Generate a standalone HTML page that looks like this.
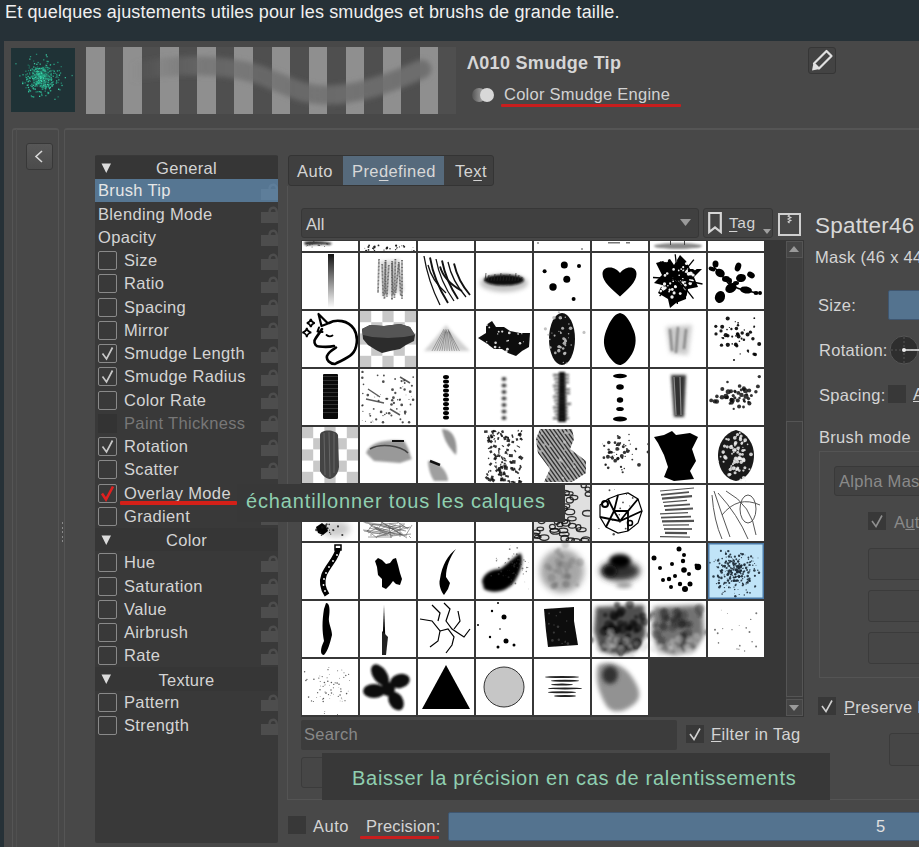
<!DOCTYPE html><html><head><meta charset="utf-8"><style>
*{margin:0;padding:0;box-sizing:border-box}
html,body{width:919px;height:847px;overflow:hidden;background:#263137;font-family:"Liberation Sans",sans-serif;}
.a{position:absolute}
.t{position:absolute;white-space:nowrap;line-height:1;color:#d4d4d4;font-size:16.5px}
.cb{position:absolute;width:19px;height:19px;border:1.7px solid #898989;border-radius:2px}
.lk{position:absolute;width:17px;height:18px}
.cell{position:absolute;width:56px;height:56px;background:#fff;overflow:hidden}
.cell svg{display:block}
</style></head><body><div class="t" style="left:5px;top:3px;font-size:18px;color:#f0f0f0;letter-spacing:0.15px">Et quelques ajustements utiles pour les smudges et brushs de grande taille.</div>
<div class="a" style="left:4px;top:41px;width:915px;height:806px;background:#484848"></div>
<div class="a" style="left:11px;top:48px;width:64px;height:64px;background:#1f3236"></div>
<svg class="a" style="left:11px;top:48px" width="64" height="64"><defs><filter id="bl1"><feGaussianBlur stdDeviation="3"/></filter></defs><ellipse cx="31" cy="29" rx="8" ry="8" fill="#2aa888" opacity="0.55" filter="url(#bl1)"/><rect x="17.7" y="32.0" width="1.3" height="1.3" fill="#35d0a6" opacity="0.57"/><rect x="38.2" y="30.6" width="1.3" height="1.3" fill="#35d0a6" opacity="0.82"/><rect x="13.5" y="34.2" width="1.3" height="1.3" fill="#1f9c7c" opacity="0.78"/><rect x="27.5" y="26.0" width="1.3" height="1.3" fill="#28a887" opacity="0.68"/><rect x="26.9" y="34.9" width="1.3" height="1.3" fill="#3fdcb0" opacity="0.91"/><rect x="41.6" y="35.9" width="1.3" height="1.3" fill="#35d0a6" opacity="0.84"/><rect x="31.1" y="26.5" width="1.3" height="1.3" fill="#2bb892" opacity="0.91"/><rect x="26.8" y="24.9" width="1.3" height="1.3" fill="#28a887" opacity="0.97"/><rect x="36.8" y="35.8" width="1.3" height="1.3" fill="#1f9c7c" opacity="0.77"/><rect x="38.0" y="22.7" width="1.3" height="1.3" fill="#2bb892" opacity="0.78"/><rect x="26.5" y="29.8" width="1.3" height="1.3" fill="#3fdcb0" opacity="0.71"/><rect x="22.0" y="24.5" width="1.3" height="1.3" fill="#28a887" opacity="0.77"/><rect x="27.8" y="27.3" width="1.3" height="1.3" fill="#1f9c7c" opacity="0.99"/><rect x="25.9" y="23.2" width="1.3" height="1.3" fill="#35d0a6" opacity="0.93"/><rect x="24.5" y="34.8" width="1.3" height="1.3" fill="#35d0a6" opacity="0.62"/><rect x="23.4" y="37.7" width="1.3" height="1.3" fill="#3fdcb0" opacity="0.59"/><rect x="17.7" y="41.4" width="1.3" height="1.3" fill="#2bb892" opacity="0.76"/><rect x="31.6" y="38.8" width="1.3" height="1.3" fill="#28a887" opacity="0.60"/><rect x="18.9" y="21.1" width="1.3" height="1.3" fill="#1f9c7c" opacity="0.59"/><rect x="29.2" y="27.8" width="1.3" height="1.3" fill="#35d0a6" opacity="0.75"/><rect x="19.0" y="21.8" width="1.3" height="1.3" fill="#3fdcb0" opacity="0.73"/><rect x="31.8" y="36.7" width="1.3" height="1.3" fill="#28a887" opacity="0.85"/><rect x="33.9" y="25.0" width="1.3" height="1.3" fill="#1f9c7c" opacity="0.73"/><rect x="24.9" y="28.4" width="1.3" height="1.3" fill="#1f9c7c" opacity="0.96"/><rect x="36.7" y="30.3" width="1.3" height="1.3" fill="#35d0a6" opacity="0.59"/><rect x="32.8" y="20.4" width="1.3" height="1.3" fill="#1f9c7c" opacity="0.81"/><rect x="60.5" y="26.9" width="1.3" height="1.3" fill="#3fdcb0" opacity="0.58"/><rect x="45.8" y="22.3" width="1.3" height="1.3" fill="#35d0a6" opacity="0.82"/><rect x="31.3" y="40.3" width="1.3" height="1.3" fill="#28a887" opacity="0.74"/><rect x="22.2" y="40.3" width="1.3" height="1.3" fill="#28a887" opacity="0.95"/><rect x="33.7" y="36.0" width="1.3" height="1.3" fill="#2bb892" opacity="0.64"/><rect x="39.6" y="26.5" width="1.3" height="1.3" fill="#28a887" opacity="0.85"/><rect x="31.6" y="36.8" width="1.3" height="1.3" fill="#35d0a6" opacity="0.51"/><rect x="32.0" y="30.0" width="1.3" height="1.3" fill="#3fdcb0" opacity="0.94"/><rect x="24.5" y="33.0" width="1.3" height="1.3" fill="#28a887" opacity="0.74"/><rect x="40.3" y="34.0" width="1.3" height="1.3" fill="#35d0a6" opacity="0.88"/><rect x="20.2" y="35.6" width="1.3" height="1.3" fill="#28a887" opacity="0.89"/><rect x="23.1" y="26.2" width="1.3" height="1.3" fill="#35d0a6" opacity="0.82"/><rect x="26.2" y="33.3" width="1.3" height="1.3" fill="#1f9c7c" opacity="0.95"/><rect x="35.4" y="12.7" width="1.3" height="1.3" fill="#28a887" opacity="0.77"/><rect x="32.0" y="21.9" width="1.3" height="1.3" fill="#2bb892" opacity="0.86"/><rect x="32.5" y="36.3" width="1.3" height="1.3" fill="#3fdcb0" opacity="0.75"/><rect x="25.5" y="26.2" width="1.3" height="1.3" fill="#3fdcb0" opacity="0.85"/><rect x="25.0" y="33.9" width="1.3" height="1.3" fill="#28a887" opacity="0.68"/><rect x="36.6" y="33.8" width="1.3" height="1.3" fill="#2bb892" opacity="0.86"/><rect x="28.0" y="35.0" width="1.3" height="1.3" fill="#28a887" opacity="0.68"/><rect x="39.7" y="31.8" width="1.3" height="1.3" fill="#28a887" opacity="0.74"/><rect x="40.7" y="34.0" width="1.3" height="1.3" fill="#28a887" opacity="0.62"/><rect x="20.5" y="48.0" width="1.3" height="1.3" fill="#2bb892" opacity="0.98"/><rect x="19.0" y="42.3" width="1.3" height="1.3" fill="#28a887" opacity="0.65"/><rect x="25.2" y="29.5" width="1.3" height="1.3" fill="#35d0a6" opacity="0.58"/><rect x="18.7" y="32.6" width="1.3" height="1.3" fill="#1f9c7c" opacity="0.73"/><rect x="30.6" y="27.4" width="1.3" height="1.3" fill="#1f9c7c" opacity="0.70"/><rect x="25.2" y="15.7" width="1.3" height="1.3" fill="#3fdcb0" opacity="0.84"/><rect x="18.2" y="10.5" width="1.3" height="1.3" fill="#3fdcb0" opacity="0.79"/><rect x="24.5" y="43.3" width="1.3" height="1.3" fill="#2bb892" opacity="0.66"/><rect x="22.0" y="30.0" width="1.3" height="1.3" fill="#35d0a6" opacity="0.59"/><rect x="14.9" y="32.2" width="1.3" height="1.3" fill="#1f9c7c" opacity="0.63"/><rect x="44.7" y="34.4" width="1.3" height="1.3" fill="#35d0a6" opacity="0.70"/><rect x="25.2" y="25.0" width="1.3" height="1.3" fill="#3fdcb0" opacity="0.66"/><rect x="38.6" y="38.6" width="1.3" height="1.3" fill="#3fdcb0" opacity="0.90"/><rect x="23.6" y="36.2" width="1.3" height="1.3" fill="#35d0a6" opacity="0.67"/><rect x="31.2" y="20.2" width="1.3" height="1.3" fill="#28a887" opacity="0.91"/><rect x="36.2" y="43.7" width="1.3" height="1.3" fill="#35d0a6" opacity="0.55"/><rect x="28.0" y="47.7" width="1.3" height="1.3" fill="#35d0a6" opacity="0.99"/><rect x="42.6" y="22.6" width="1.3" height="1.3" fill="#35d0a6" opacity="0.92"/><rect x="34.2" y="47.0" width="1.3" height="1.3" fill="#2bb892" opacity="0.78"/><rect x="44.9" y="34.1" width="1.3" height="1.3" fill="#1f9c7c" opacity="0.58"/><rect x="28.5" y="23.0" width="1.3" height="1.3" fill="#1f9c7c" opacity="0.99"/><rect x="31.6" y="19.4" width="1.3" height="1.3" fill="#2bb892" opacity="0.80"/><rect x="40.3" y="37.7" width="1.3" height="1.3" fill="#3fdcb0" opacity="0.60"/><rect x="30.8" y="30.5" width="1.3" height="1.3" fill="#1f9c7c" opacity="0.90"/><rect x="17.9" y="29.6" width="1.3" height="1.3" fill="#28a887" opacity="0.68"/><rect x="38.9" y="16.0" width="1.3" height="1.3" fill="#3fdcb0" opacity="0.51"/><rect x="31.0" y="28.6" width="1.3" height="1.3" fill="#1f9c7c" opacity="0.75"/><rect x="38.0" y="19.7" width="1.3" height="1.3" fill="#28a887" opacity="0.77"/><rect x="38.0" y="28.1" width="1.3" height="1.3" fill="#2bb892" opacity="0.92"/><rect x="32.1" y="32.2" width="1.3" height="1.3" fill="#2bb892" opacity="0.71"/><rect x="35.6" y="14.8" width="1.3" height="1.3" fill="#1f9c7c" opacity="0.52"/><rect x="25.7" y="19.9" width="1.3" height="1.3" fill="#2bb892" opacity="0.80"/><rect x="16.9" y="22.0" width="1.3" height="1.3" fill="#1f9c7c" opacity="0.73"/><rect x="23.6" y="40.5" width="1.3" height="1.3" fill="#35d0a6" opacity="0.90"/><rect x="20.4" y="37.9" width="1.3" height="1.3" fill="#35d0a6" opacity="0.98"/><rect x="44.4" y="28.8" width="1.3" height="1.3" fill="#35d0a6" opacity="0.57"/><rect x="37.0" y="36.8" width="1.3" height="1.3" fill="#1f9c7c" opacity="0.83"/><rect x="36.1" y="30.5" width="1.3" height="1.3" fill="#28a887" opacity="0.72"/><rect x="25.4" y="37.3" width="1.3" height="1.3" fill="#35d0a6" opacity="0.67"/><rect x="17.5" y="41.5" width="1.3" height="1.3" fill="#28a887" opacity="0.67"/><rect x="39.3" y="22.3" width="1.3" height="1.3" fill="#3fdcb0" opacity="0.68"/><rect x="31.0" y="38.3" width="1.3" height="1.3" fill="#3fdcb0" opacity="0.78"/><rect x="36.6" y="19.3" width="1.3" height="1.3" fill="#28a887" opacity="0.87"/><rect x="29.9" y="38.8" width="1.3" height="1.3" fill="#2bb892" opacity="0.56"/><rect x="21.5" y="24.9" width="1.3" height="1.3" fill="#35d0a6" opacity="0.77"/><rect x="20.8" y="23.7" width="1.3" height="1.3" fill="#28a887" opacity="0.67"/><rect x="17.0" y="43.1" width="1.3" height="1.3" fill="#35d0a6" opacity="0.97"/><rect x="27.3" y="28.1" width="1.3" height="1.3" fill="#3fdcb0" opacity="0.70"/><rect x="32.1" y="37.2" width="1.3" height="1.3" fill="#35d0a6" opacity="0.81"/><rect x="33.0" y="26.3" width="1.3" height="1.3" fill="#35d0a6" opacity="0.67"/><rect x="25.3" y="22.8" width="1.3" height="1.3" fill="#3fdcb0" opacity="0.66"/><rect x="14.3" y="26.2" width="1.3" height="1.3" fill="#3fdcb0" opacity="0.55"/><rect x="30.0" y="45.5" width="1.3" height="1.3" fill="#2bb892" opacity="0.84"/><rect x="34.3" y="38.0" width="1.3" height="1.3" fill="#35d0a6" opacity="0.53"/><rect x="27.9" y="24.9" width="1.3" height="1.3" fill="#35d0a6" opacity="0.82"/><rect x="22.6" y="21.4" width="1.3" height="1.3" fill="#28a887" opacity="0.87"/><rect x="28.3" y="34.2" width="1.3" height="1.3" fill="#28a887" opacity="0.70"/><rect x="22.2" y="31.7" width="1.3" height="1.3" fill="#1f9c7c" opacity="0.62"/><rect x="16.5" y="27.8" width="1.3" height="1.3" fill="#3fdcb0" opacity="0.83"/><rect x="26.5" y="13.9" width="1.3" height="1.3" fill="#35d0a6" opacity="0.68"/><rect x="29.3" y="31.8" width="1.3" height="1.3" fill="#35d0a6" opacity="0.70"/><rect x="48.0" y="26.2" width="1.3" height="1.3" fill="#1f9c7c" opacity="0.84"/><rect x="18.9" y="28.6" width="1.3" height="1.3" fill="#1f9c7c" opacity="0.63"/><rect x="27.6" y="31.4" width="1.3" height="1.3" fill="#2bb892" opacity="0.73"/><rect x="23.7" y="28.8" width="1.3" height="1.3" fill="#1f9c7c" opacity="0.56"/><rect x="34.1" y="22.8" width="1.3" height="1.3" fill="#28a887" opacity="0.65"/><rect x="34.6" y="33.1" width="1.3" height="1.3" fill="#1f9c7c" opacity="0.69"/><rect x="23.6" y="28.8" width="1.3" height="1.3" fill="#3fdcb0" opacity="0.91"/><rect x="31.0" y="25.7" width="1.3" height="1.3" fill="#1f9c7c" opacity="0.88"/><rect x="15.7" y="25.2" width="1.3" height="1.3" fill="#35d0a6" opacity="0.52"/><rect x="21.2" y="27.4" width="1.3" height="1.3" fill="#28a887" opacity="0.81"/><rect x="36.4" y="44.9" width="1.3" height="1.3" fill="#2bb892" opacity="0.72"/><rect x="39.8" y="31.3" width="1.3" height="1.3" fill="#35d0a6" opacity="0.92"/><rect x="39.2" y="35.4" width="1.3" height="1.3" fill="#3fdcb0" opacity="0.73"/><rect x="35.4" y="8.0" width="1.3" height="1.3" fill="#3fdcb0" opacity="0.70"/><rect x="40.1" y="30.5" width="1.3" height="1.3" fill="#28a887" opacity="0.95"/><rect x="45.0" y="32.3" width="1.3" height="1.3" fill="#3fdcb0" opacity="0.84"/><rect x="28.8" y="37.2" width="1.3" height="1.3" fill="#35d0a6" opacity="0.70"/><rect x="34.3" y="16.6" width="1.3" height="1.3" fill="#3fdcb0" opacity="0.54"/><rect x="28.9" y="27.7" width="1.3" height="1.3" fill="#35d0a6" opacity="0.83"/><rect x="25.4" y="35.3" width="1.3" height="1.3" fill="#2bb892" opacity="0.83"/><rect x="31.9" y="26.3" width="1.3" height="1.3" fill="#1f9c7c" opacity="0.53"/><rect x="38.8" y="42.1" width="1.3" height="1.3" fill="#3fdcb0" opacity="0.77"/><rect x="37.0" y="44.3" width="1.3" height="1.3" fill="#35d0a6" opacity="0.99"/><rect x="31.4" y="38.5" width="1.3" height="1.3" fill="#1f9c7c" opacity="0.64"/><rect x="18.0" y="24.4" width="1.3" height="1.3" fill="#1f9c7c" opacity="0.91"/><rect x="30.0" y="23.0" width="1.3" height="1.3" fill="#28a887" opacity="0.60"/><rect x="48.9" y="24.4" width="1.3" height="1.3" fill="#35d0a6" opacity="0.68"/><rect x="38.2" y="35.5" width="1.3" height="1.3" fill="#28a887" opacity="0.68"/><rect x="37.0" y="31.8" width="1.3" height="1.3" fill="#3fdcb0" opacity="0.81"/><rect x="28.9" y="29.6" width="1.3" height="1.3" fill="#3fdcb0" opacity="0.94"/><rect x="22.0" y="48.3" width="1.3" height="1.3" fill="#2bb892" opacity="0.96"/><rect x="30.7" y="40.6" width="1.3" height="1.3" fill="#1f9c7c" opacity="0.94"/><rect x="48.3" y="41.2" width="1.3" height="1.3" fill="#3fdcb0" opacity="0.59"/><rect x="15.7" y="36.6" width="1.3" height="1.3" fill="#35d0a6" opacity="1.00"/><rect x="31.7" y="21.0" width="1.3" height="1.3" fill="#35d0a6" opacity="0.66"/><rect x="50.4" y="36.8" width="1.3" height="1.3" fill="#35d0a6" opacity="0.83"/><rect x="24.3" y="30.7" width="1.3" height="1.3" fill="#1f9c7c" opacity="0.81"/><rect x="35.8" y="18.8" width="1.3" height="1.3" fill="#28a887" opacity="0.95"/><rect x="39.3" y="25.8" width="1.3" height="1.3" fill="#28a887" opacity="0.77"/><rect x="24.1" y="34.9" width="1.3" height="1.3" fill="#1f9c7c" opacity="0.92"/><rect x="25.0" y="19.8" width="1.3" height="1.3" fill="#1f9c7c" opacity="0.77"/><rect x="24.9" y="5.7" width="1.3" height="1.3" fill="#2bb892" opacity="0.60"/><rect x="25.5" y="32.8" width="1.3" height="1.3" fill="#3fdcb0" opacity="0.54"/><rect x="11.1" y="33.6" width="1.3" height="1.3" fill="#28a887" opacity="0.76"/><rect x="22.2" y="33.4" width="1.3" height="1.3" fill="#1f9c7c" opacity="0.58"/><rect x="36.2" y="20.9" width="1.3" height="1.3" fill="#1f9c7c" opacity="0.83"/><rect x="36.6" y="38.4" width="1.3" height="1.3" fill="#1f9c7c" opacity="0.86"/><rect x="21.2" y="21.1" width="1.3" height="1.3" fill="#2bb892" opacity="0.62"/><rect x="28.8" y="20.3" width="1.3" height="1.3" fill="#1f9c7c" opacity="0.58"/><rect x="47.0" y="40.6" width="1.3" height="1.3" fill="#3fdcb0" opacity="1.00"/><rect x="24.3" y="27.7" width="1.3" height="1.3" fill="#28a887" opacity="0.90"/><rect x="47.7" y="26.7" width="1.3" height="1.3" fill="#3fdcb0" opacity="0.77"/><rect x="30.3" y="46.8" width="1.3" height="1.3" fill="#35d0a6" opacity="0.63"/><rect x="21.6" y="36.7" width="1.3" height="1.3" fill="#3fdcb0" opacity="0.94"/><rect x="25.7" y="22.2" width="1.3" height="1.3" fill="#2bb892" opacity="0.73"/><rect x="8.2" y="27.2" width="1.3" height="1.3" fill="#28a887" opacity="0.88"/><rect x="18.1" y="25.6" width="1.3" height="1.3" fill="#2bb892" opacity="0.50"/><rect x="29.5" y="25.3" width="1.3" height="1.3" fill="#35d0a6" opacity="0.78"/><rect x="40.5" y="36.5" width="1.3" height="1.3" fill="#3fdcb0" opacity="0.91"/><rect x="14.9" y="29.0" width="1.3" height="1.3" fill="#2bb892" opacity="0.90"/><rect x="31.7" y="29.0" width="1.3" height="1.3" fill="#35d0a6" opacity="0.99"/><rect x="34.0" y="30.3" width="1.3" height="1.3" fill="#2bb892" opacity="0.63"/><rect x="35.1" y="25.7" width="1.3" height="1.3" fill="#35d0a6" opacity="0.56"/><rect x="27.2" y="25.7" width="1.3" height="1.3" fill="#3fdcb0" opacity="0.90"/><rect x="40.8" y="37.5" width="1.3" height="1.3" fill="#28a887" opacity="0.69"/><rect x="28.5" y="37.9" width="1.3" height="1.3" fill="#2bb892" opacity="0.55"/><rect x="28.1" y="43.0" width="1.3" height="1.3" fill="#35d0a6" opacity="0.89"/><rect x="22.3" y="31.0" width="1.3" height="1.3" fill="#2bb892" opacity="0.54"/><rect x="36.1" y="30.3" width="1.3" height="1.3" fill="#28a887" opacity="0.84"/><rect x="42.4" y="15.7" width="1.3" height="1.3" fill="#28a887" opacity="0.94"/><rect x="30.8" y="21.6" width="1.3" height="1.3" fill="#2bb892" opacity="0.55"/><rect x="33.8" y="26.8" width="1.3" height="1.3" fill="#28a887" opacity="0.58"/><rect x="46.4" y="28.9" width="1.3" height="1.3" fill="#28a887" opacity="0.66"/><rect x="25.9" y="43.1" width="1.3" height="1.3" fill="#2bb892" opacity="0.50"/><rect x="33.3" y="39.4" width="1.3" height="1.3" fill="#3fdcb0" opacity="0.66"/><rect x="28.8" y="24.9" width="1.3" height="1.3" fill="#1f9c7c" opacity="0.90"/><rect x="27.0" y="31.8" width="1.3" height="1.3" fill="#35d0a6" opacity="0.99"/><rect x="39.5" y="30.4" width="1.3" height="1.3" fill="#35d0a6" opacity="0.54"/><rect x="29.1" y="31.5" width="1.3" height="1.3" fill="#35d0a6" opacity="0.71"/><rect x="29.7" y="33.0" width="1.3" height="1.3" fill="#1f9c7c" opacity="0.60"/><rect x="34.7" y="6.3" width="1.3" height="1.3" fill="#3fdcb0" opacity="0.91"/><rect x="29.6" y="23.9" width="1.3" height="1.3" fill="#2bb892" opacity="0.53"/><rect x="33.5" y="18.2" width="1.3" height="1.3" fill="#1f9c7c" opacity="0.51"/><rect x="18.6" y="42.3" width="1.3" height="1.3" fill="#35d0a6" opacity="0.61"/><rect x="41.6" y="27.6" width="1.3" height="1.3" fill="#2bb892" opacity="0.92"/><rect x="39.6" y="24.9" width="1.3" height="1.3" fill="#28a887" opacity="0.59"/><rect x="20.5" y="20.3" width="1.3" height="1.3" fill="#35d0a6" opacity="0.71"/><rect x="31.9" y="34.5" width="1.3" height="1.3" fill="#28a887" opacity="0.88"/><rect x="31.8" y="29.0" width="1.3" height="1.3" fill="#2bb892" opacity="0.53"/><rect x="28.6" y="15.5" width="1.3" height="1.3" fill="#2bb892" opacity="0.98"/><rect x="34.5" y="37.7" width="1.3" height="1.3" fill="#28a887" opacity="0.93"/><rect x="27.9" y="33.9" width="1.3" height="1.3" fill="#28a887" opacity="0.99"/><rect x="18.9" y="8.0" width="1.3" height="1.3" fill="#2bb892" opacity="0.74"/><rect x="24.4" y="23.1" width="1.3" height="1.3" fill="#3fdcb0" opacity="0.65"/><rect x="20.2" y="28.2" width="1.3" height="1.3" fill="#28a887" opacity="0.79"/><rect x="21.7" y="27.5" width="1.3" height="1.3" fill="#1f9c7c" opacity="0.79"/><rect x="43.6" y="24.6" width="1.3" height="1.3" fill="#35d0a6" opacity="0.59"/><rect x="45.3" y="27.4" width="1.3" height="1.3" fill="#35d0a6" opacity="0.76"/><rect x="29.5" y="26.7" width="1.3" height="1.3" fill="#1f9c7c" opacity="0.91"/><rect x="30.8" y="28.4" width="1.3" height="1.3" fill="#28a887" opacity="0.78"/><rect x="36.6" y="23.9" width="1.3" height="1.3" fill="#1f9c7c" opacity="0.99"/><rect x="25.9" y="18.2" width="1.3" height="1.3" fill="#1f9c7c" opacity="0.59"/><rect x="26.8" y="22.9" width="1.3" height="1.3" fill="#3fdcb0" opacity="0.75"/><rect x="22.0" y="12.4" width="1.3" height="1.3" fill="#1f9c7c" opacity="0.51"/><rect x="33.6" y="28.3" width="1.3" height="1.3" fill="#1f9c7c" opacity="0.89"/><rect x="29.5" y="43.5" width="1.3" height="1.3" fill="#3fdcb0" opacity="0.64"/><rect x="19.7" y="47.2" width="1.3" height="1.3" fill="#28a887" opacity="0.83"/><rect x="29.7" y="29.2" width="1.3" height="1.3" fill="#3fdcb0" opacity="0.93"/><rect x="19.7" y="27.6" width="1.3" height="1.3" fill="#1f9c7c" opacity="0.88"/><rect x="11.4" y="26.1" width="1.3" height="1.3" fill="#2bb892" opacity="0.95"/><rect x="36.0" y="35.9" width="1.3" height="1.3" fill="#3fdcb0" opacity="0.97"/><rect x="17.6" y="19.3" width="1.3" height="1.3" fill="#28a887" opacity="0.52"/><rect x="26.7" y="34.6" width="1.3" height="1.3" fill="#28a887" opacity="0.55"/><rect x="24.1" y="19.4" width="1.3" height="1.3" fill="#35d0a6" opacity="0.69"/><rect x="33.2" y="37.8" width="1.3" height="1.3" fill="#35d0a6" opacity="0.62"/><rect x="35.2" y="27.3" width="1.3" height="1.3" fill="#28a887" opacity="0.80"/><rect x="46.2" y="13.8" width="1.3" height="1.3" fill="#1f9c7c" opacity="0.88"/><rect x="22.6" y="22.4" width="1.3" height="1.3" fill="#2bb892" opacity="0.89"/><rect x="39.1" y="42.0" width="1.3" height="1.3" fill="#28a887" opacity="0.69"/><rect x="18.5" y="29.7" width="1.3" height="1.3" fill="#3fdcb0" opacity="0.75"/><rect x="28.6" y="27.5" width="1.3" height="1.3" fill="#1f9c7c" opacity="0.57"/><rect x="33.5" y="21.4" width="1.3" height="1.3" fill="#35d0a6" opacity="0.64"/><rect x="33.6" y="42.5" width="1.3" height="1.3" fill="#28a887" opacity="0.81"/><rect x="31.4" y="26.7" width="1.3" height="1.3" fill="#28a887" opacity="0.93"/><rect x="17.8" y="28.9" width="1.3" height="1.3" fill="#35d0a6" opacity="0.62"/><rect x="41.4" y="33.2" width="1.3" height="1.3" fill="#28a887" opacity="0.88"/><rect x="28.1" y="28.4" width="1.3" height="1.3" fill="#35d0a6" opacity="0.55"/><rect x="30.1" y="24.7" width="1.3" height="1.3" fill="#3fdcb0" opacity="0.90"/><rect x="49.6" y="18.0" width="1.3" height="1.3" fill="#28a887" opacity="0.59"/><rect x="33.3" y="22.5" width="1.3" height="1.3" fill="#3fdcb0" opacity="0.80"/><rect x="49.7" y="34.5" width="1.3" height="1.3" fill="#28a887" opacity="0.68"/><rect x="32.1" y="11.2" width="1.3" height="1.3" fill="#1f9c7c" opacity="0.96"/><rect x="32.4" y="21.5" width="1.3" height="1.3" fill="#35d0a6" opacity="0.56"/><rect x="28.7" y="34.4" width="1.3" height="1.3" fill="#28a887" opacity="0.91"/><rect x="17.8" y="17.4" width="1.3" height="1.3" fill="#1f9c7c" opacity="0.53"/><rect x="30.0" y="26.8" width="1.3" height="1.3" fill="#1f9c7c" opacity="0.87"/><rect x="31.3" y="18.8" width="1.3" height="1.3" fill="#2bb892" opacity="0.66"/><rect x="42.0" y="24.7" width="1.3" height="1.3" fill="#2bb892" opacity="0.63"/><rect x="17.3" y="31.6" width="1.3" height="1.3" fill="#1f9c7c" opacity="0.66"/><rect x="14.4" y="39.1" width="1.3" height="1.3" fill="#28a887" opacity="0.59"/><rect x="22.9" y="15.0" width="1.3" height="1.3" fill="#3fdcb0" opacity="0.87"/><rect x="30.2" y="37.3" width="1.3" height="1.3" fill="#28a887" opacity="0.63"/><rect x="33.4" y="33.4" width="1.3" height="1.3" fill="#3fdcb0" opacity="0.60"/><rect x="29.7" y="24.4" width="1.3" height="1.3" fill="#3fdcb0" opacity="0.66"/><rect x="47.2" y="31.2" width="1.3" height="1.3" fill="#3fdcb0" opacity="0.75"/><rect x="27.0" y="26.9" width="1.3" height="1.3" fill="#28a887" opacity="1.00"/><rect x="34.4" y="38.6" width="1.3" height="1.3" fill="#3fdcb0" opacity="0.80"/><rect x="35.0" y="17.0" width="1.3" height="1.3" fill="#35d0a6" opacity="0.77"/><rect x="36.5" y="37.7" width="1.3" height="1.3" fill="#28a887" opacity="0.71"/><rect x="23.3" y="26.5" width="1.3" height="1.3" fill="#28a887" opacity="0.85"/><rect x="22.1" y="18.4" width="1.3" height="1.3" fill="#35d0a6" opacity="0.81"/><rect x="20.6" y="28.6" width="1.3" height="1.3" fill="#1f9c7c" opacity="0.79"/><rect x="29.6" y="32.0" width="1.3" height="1.3" fill="#3fdcb0" opacity="0.76"/><rect x="38.4" y="39.0" width="1.3" height="1.3" fill="#35d0a6" opacity="0.90"/><rect x="37.9" y="40.0" width="1.3" height="1.3" fill="#35d0a6" opacity="0.89"/><rect x="21.0" y="29.6" width="1.3" height="1.3" fill="#1f9c7c" opacity="0.95"/><rect x="28.6" y="23.3" width="1.3" height="1.3" fill="#28a887" opacity="0.50"/><rect x="45.1" y="25.7" width="1.3" height="1.3" fill="#28a887" opacity="0.84"/><rect x="16.1" y="30.2" width="1.3" height="1.3" fill="#1f9c7c" opacity="0.92"/><rect x="25.0" y="34.8" width="1.3" height="1.3" fill="#28a887" opacity="0.68"/><rect x="26.9" y="20.2" width="1.3" height="1.3" fill="#3fdcb0" opacity="0.80"/><rect x="24.0" y="20.9" width="1.3" height="1.3" fill="#1f9c7c" opacity="0.72"/><rect x="37.1" y="36.6" width="1.3" height="1.3" fill="#2bb892" opacity="0.94"/><rect x="36.6" y="37.4" width="1.3" height="1.3" fill="#28a887" opacity="0.79"/><rect x="17.6" y="41.1" width="1.3" height="1.3" fill="#1f9c7c" opacity="0.86"/><rect x="16.6" y="33.0" width="1.3" height="1.3" fill="#3fdcb0" opacity="0.86"/><rect x="16.8" y="38.8" width="1.3" height="1.3" fill="#3fdcb0" opacity="0.84"/><rect x="21.1" y="25.0" width="1.3" height="1.3" fill="#28a887" opacity="0.69"/><rect x="16.6" y="16.5" width="1.3" height="1.3" fill="#1f9c7c" opacity="0.54"/><rect x="29.7" y="35.1" width="1.3" height="1.3" fill="#1f9c7c" opacity="0.95"/><rect x="28.0" y="26.6" width="1.3" height="1.3" fill="#28a887" opacity="0.94"/><rect x="36.4" y="12.9" width="1.3" height="1.3" fill="#35d0a6" opacity="0.84"/><rect x="30.2" y="28.2" width="1.3" height="1.3" fill="#2bb892" opacity="0.91"/><rect x="26.5" y="34.2" width="1.3" height="1.3" fill="#2bb892" opacity="0.67"/><rect x="22.6" y="29.6" width="1.3" height="1.3" fill="#2bb892" opacity="0.98"/><rect x="31.6" y="21.3" width="1.3" height="1.3" fill="#28a887" opacity="0.51"/><rect x="11.1" y="34.9" width="1.3" height="1.3" fill="#3fdcb0" opacity="0.94"/><rect x="30.0" y="34.9" width="1.3" height="1.3" fill="#2bb892" opacity="0.76"/><rect x="34.4" y="18.9" width="1.3" height="1.3" fill="#28a887" opacity="0.75"/><rect x="19.2" y="37.0" width="1.3" height="1.3" fill="#1f9c7c" opacity="0.95"/><rect x="24.9" y="35.8" width="1.3" height="1.3" fill="#3fdcb0" opacity="0.80"/><rect x="28.8" y="29.5" width="1.3" height="1.3" fill="#3fdcb0" opacity="0.61"/><rect x="29.5" y="37.2" width="1.3" height="1.3" fill="#2bb892" opacity="0.80"/><rect x="34.1" y="36.3" width="1.3" height="1.3" fill="#3fdcb0" opacity="0.79"/><rect x="46.5" y="48.2" width="1.3" height="1.3" fill="#2bb892" opacity="0.54"/><rect x="21.6" y="39.4" width="1.3" height="1.3" fill="#3fdcb0" opacity="0.83"/><rect x="33.1" y="27.8" width="1.3" height="1.3" fill="#3fdcb0" opacity="0.61"/><rect x="28.1" y="19.8" width="1.3" height="1.3" fill="#3fdcb0" opacity="0.90"/><rect x="21.1" y="29.9" width="1.3" height="1.3" fill="#3fdcb0" opacity="0.78"/><rect x="37.0" y="27.3" width="1.3" height="1.3" fill="#2bb892" opacity="0.75"/><rect x="38.7" y="16.4" width="1.3" height="1.3" fill="#2bb892" opacity="0.77"/><rect x="16.7" y="36.3" width="1.3" height="1.3" fill="#3fdcb0" opacity="0.56"/><rect x="27.6" y="33.0" width="1.3" height="1.3" fill="#35d0a6" opacity="0.66"/><rect x="29.1" y="43.5" width="1.3" height="1.3" fill="#2bb892" opacity="0.65"/><rect x="24.3" y="20.7" width="1.3" height="1.3" fill="#35d0a6" opacity="0.78"/><rect x="22.5" y="34.2" width="1.3" height="1.3" fill="#35d0a6" opacity="0.82"/><rect x="32.8" y="32.0" width="1.3" height="1.3" fill="#3fdcb0" opacity="0.75"/><rect x="32.3" y="27.4" width="1.3" height="1.3" fill="#35d0a6" opacity="0.73"/><rect x="28.9" y="27.9" width="1.3" height="1.3" fill="#3fdcb0" opacity="0.72"/><rect x="53.7" y="29.0" width="1.3" height="1.3" fill="#35d0a6" opacity="0.82"/><rect x="33.9" y="40.4" width="1.3" height="1.3" fill="#1f9c7c" opacity="0.74"/><rect x="43.3" y="50.7" width="1.3" height="1.3" fill="#35d0a6" opacity="0.74"/><rect x="41.4" y="21.8" width="1.3" height="1.3" fill="#1f9c7c" opacity="0.72"/><rect x="14.2" y="22.6" width="1.3" height="1.3" fill="#2bb892" opacity="0.62"/><rect x="21.6" y="40.0" width="1.3" height="1.3" fill="#2bb892" opacity="0.65"/><rect x="25.8" y="25.5" width="1.3" height="1.3" fill="#2bb892" opacity="0.63"/><rect x="24.3" y="36.5" width="1.3" height="1.3" fill="#2bb892" opacity="0.59"/><rect x="26.4" y="43.0" width="1.3" height="1.3" fill="#1f9c7c" opacity="0.78"/><rect x="30.0" y="19.8" width="1.3" height="1.3" fill="#35d0a6" opacity="0.84"/><rect x="33.4" y="34.4" width="1.3" height="1.3" fill="#35d0a6" opacity="0.61"/><rect x="30.1" y="32.8" width="1.3" height="1.3" fill="#3fdcb0" opacity="0.89"/><rect x="46.4" y="33.9" width="1.3" height="1.3" fill="#2bb892" opacity="0.58"/><rect x="39.6" y="28.9" width="1.3" height="1.3" fill="#3fdcb0" opacity="0.66"/><rect x="15.2" y="30.8" width="1.3" height="1.3" fill="#35d0a6" opacity="0.92"/><rect x="14.0" y="28.3" width="1.3" height="1.3" fill="#1f9c7c" opacity="0.55"/><rect x="47.6" y="21.9" width="1.3" height="1.3" fill="#1f9c7c" opacity="0.96"/><rect x="34.1" y="39.9" width="1.3" height="1.3" fill="#35d0a6" opacity="0.67"/><rect x="34.5" y="30.1" width="1.3" height="1.3" fill="#3fdcb0" opacity="0.52"/><rect x="26.3" y="34.3" width="1.3" height="1.3" fill="#35d0a6" opacity="0.91"/><rect x="37.2" y="38.4" width="1.3" height="1.3" fill="#28a887" opacity="0.59"/><rect x="4.3" y="15.1" width="1.3" height="1.3" fill="#35d0a6" opacity="0.65"/></svg>
<div class="a" style="left:86px;top:47px;width:370px;height:67px;background:#4f4f4f"></div>
<div class="a" style="left:86.0px;top:47px;width:18.6px;height:67px;background:#8f8f8f"></div>
<div class="a" style="left:123.1px;top:47px;width:18.6px;height:67px;background:#8f8f8f"></div>
<div class="a" style="left:160.2px;top:47px;width:18.6px;height:67px;background:#8f8f8f"></div>
<div class="a" style="left:197.3px;top:47px;width:18.6px;height:67px;background:#8f8f8f"></div>
<div class="a" style="left:234.4px;top:47px;width:18.6px;height:67px;background:#8f8f8f"></div>
<div class="a" style="left:271.5px;top:47px;width:18.6px;height:67px;background:#8f8f8f"></div>
<div class="a" style="left:308.6px;top:47px;width:18.6px;height:67px;background:#8f8f8f"></div>
<div class="a" style="left:345.7px;top:47px;width:18.6px;height:67px;background:#8f8f8f"></div>
<div class="a" style="left:382.8px;top:47px;width:18.6px;height:67px;background:#8f8f8f"></div>
<div class="a" style="left:419.90000000000003px;top:47px;width:18.6px;height:67px;background:#8f8f8f"></div>
<svg class="a" style="left:86px;top:47px" width="370" height="67"><defs><filter id="bl2" x="-20%" y="-50%" width="140%" height="200%"><feGaussianBlur stdDeviation="2.5"/></filter>
<linearGradient id="sg" x1="0" x2="1"><stop offset="0" stop-color="#6f6f6f" stop-opacity="0"/><stop offset="0.25" stop-color="#6f6f6f" stop-opacity="0.7"/><stop offset="1" stop-color="#6f6f6f" stop-opacity="0.95"/></linearGradient></defs>
<path d="M44 26 C 80 18, 130 14, 174 28 C 200 38, 215 48, 240 48 C 270 48, 300 38, 336 22" fill="none" stroke="url(#sg)" stroke-width="19" stroke-linecap="round" filter="url(#bl2)"/>
</svg>
<div class="t" style="left:467px;top:54px;font-size:18px;color:#d6d6d6;font-weight:bold;letter-spacing:0.3px">&#923;010 Smudge Tip</div>
<svg class="a" style="left:470px;top:87px" width="26" height="16"><defs><linearGradient id="g1" x1="0" x2="1"><stop offset="0" stop-color="#555"/><stop offset="1" stop-color="#bbb"/></linearGradient></defs>
<circle cx="9" cy="8" r="7" fill="url(#g1)"/><circle cx="17" cy="8" r="7" fill="#d8d8d8"/></svg>
<div class="t" style="left:504px;top:86px;font-size:16.5px;color:#d2d2d2;letter-spacing:0.25px">Color Smudge Engine</div>
<div class="a" style="left:501px;top:104px;width:180px;height:3px;background:#c81e1e;border-radius:1px"></div>
<div class="a" style="left:808px;top:47px;width:28px;height:27px;background:#434343;border:1px solid #363636;border-radius:3px"></div>
<svg class="a" style="left:808px;top:47px" width="28" height="27"><path d="M6 16.5 L18.5 4 L23.5 9 L11 21.5 Z" fill="none" stroke="#e0e0e0" stroke-width="2.2" stroke-linejoin="round"/><path d="M4 23.5 L5.5 16 L11.5 22 Z" fill="#e0e0e0"/></svg>
<div class="a" style="left:12px;top:128px;width:47px;height:719px;border:1px solid #555555;border-top:2px solid #555555;border-bottom:none;border-radius:3px 3px 0 0"></div>
<div class="a" style="left:16px;top:129px;width:1px;height:718px;background:#505050"></div>
<div class="a" style="left:64px;top:128px;width:855px;height:719px;border:1px solid #555555;border-top:2px solid #555555;border-right:none;border-bottom:none;border-radius:3px 0 0 0"></div>
<div class="a" style="left:26px;top:143px;width:27px;height:27px;background:linear-gradient(#575757,#4b4b4b);border:1px solid #383838;border-radius:3px"></div>
<svg class="a" style="left:26px;top:143px" width="27" height="27"><path d="M16 8 L10 13.5 L16 19" fill="none" stroke="#d8d8d8" stroke-width="1.6"/></svg>
<div class="a" style="left:61.5px;top:522.0px;width:1.5px;height:2px;background:#8a8a8a"></div>
<div class="a" style="left:61.5px;top:526.5px;width:1.5px;height:2px;background:#8a8a8a"></div>
<div class="a" style="left:61.5px;top:531.0px;width:1.5px;height:2px;background:#8a8a8a"></div>
<div class="a" style="left:61.5px;top:535.5px;width:1.5px;height:2px;background:#8a8a8a"></div>
<div class="a" style="left:61.5px;top:540.0px;width:1.5px;height:2px;background:#8a8a8a"></div>
<div class="a" style="left:95px;top:155px;width:183px;height:688px;background:#393939;border-radius:2px"></div>
<div class="a" style="left:95px;top:155.5px;width:183px;height:23.5px;background:#363636"></div>
<svg class="a" style="left:101px;top:162.5px" width="11" height="11"><path d="M0.5 0.5 L10 0.5 L5.25 10 Z" fill="#dcdcdc"/></svg>
<div class="t" style="left:96px;top:160.0px;font-size:16.5px;color:#d4d4d4;letter-spacing:0.3px;width:181px;text-align:center">General</div>
<div class="a" style="left:95px;top:178.75px;width:183px;height:23.5px;background:#567692"></div>
<div class="lk" style="left:261px;top:181.75px"><svg width="17" height="18"><path d="M8.5 7.5 C8.5 1.2,15.8 1.2,15.8 7" fill="none" stroke="#5e7e9a" stroke-width="2.4"/><rect x="0" y="7" width="17" height="11" fill="#5e7e9a"/></svg></div>
<div class="t" style="left:98px;top:182.25px;font-size:16.5px;color:#e6e6e6;letter-spacing:0.35px">Brush Tip</div>
<div class="lk" style="left:261px;top:205.0px"><svg width="17" height="18"><path d="M8.5 7.5 C8.5 1.2,15.8 1.2,15.8 7" fill="none" stroke="#4d4d4d" stroke-width="2.4"/><rect x="0" y="7" width="17" height="11" fill="#4d4d4d"/></svg></div>
<div class="t" style="left:98px;top:205.5px;font-size:16.5px;color:#d4d4d4;letter-spacing:0.35px">Blending Mode</div>
<div class="lk" style="left:261px;top:228.25px"><svg width="17" height="18"><path d="M8.5 7.5 C8.5 1.2,15.8 1.2,15.8 7" fill="none" stroke="#4d4d4d" stroke-width="2.4"/><rect x="0" y="7" width="17" height="11" fill="#4d4d4d"/></svg></div>
<div class="t" style="left:98px;top:228.75px;font-size:16.5px;color:#d4d4d4;letter-spacing:0.35px">Opacity</div>
<div class="lk" style="left:261px;top:251.5px"><svg width="17" height="18"><path d="M8.5 7.5 C8.5 1.2,15.8 1.2,15.8 7" fill="none" stroke="#4d4d4d" stroke-width="2.4"/><rect x="0" y="7" width="17" height="11" fill="#4d4d4d"/></svg></div>
<div class="cb" style="left:98px;top:251.0px"></div>
<div class="t" style="left:124px;top:252.0px;font-size:16.5px;color:#d4d4d4;letter-spacing:0.35px">Size</div>
<div class="lk" style="left:261px;top:274.75px"><svg width="17" height="18"><path d="M8.5 7.5 C8.5 1.2,15.8 1.2,15.8 7" fill="none" stroke="#4d4d4d" stroke-width="2.4"/><rect x="0" y="7" width="17" height="11" fill="#4d4d4d"/></svg></div>
<div class="cb" style="left:98px;top:274.25px"></div>
<div class="t" style="left:124px;top:275.25px;font-size:16.5px;color:#d4d4d4;letter-spacing:0.35px">Ratio</div>
<div class="lk" style="left:261px;top:298.0px"><svg width="17" height="18"><path d="M8.5 7.5 C8.5 1.2,15.8 1.2,15.8 7" fill="none" stroke="#4d4d4d" stroke-width="2.4"/><rect x="0" y="7" width="17" height="11" fill="#4d4d4d"/></svg></div>
<div class="cb" style="left:98px;top:297.5px"></div>
<div class="t" style="left:124px;top:298.5px;font-size:16.5px;color:#d4d4d4;letter-spacing:0.35px">Spacing</div>
<div class="lk" style="left:261px;top:321.25px"><svg width="17" height="18"><path d="M8.5 7.5 C8.5 1.2,15.8 1.2,15.8 7" fill="none" stroke="#4d4d4d" stroke-width="2.4"/><rect x="0" y="7" width="17" height="11" fill="#4d4d4d"/></svg></div>
<div class="cb" style="left:98px;top:320.75px"></div>
<div class="t" style="left:124px;top:321.75px;font-size:16.5px;color:#d4d4d4;letter-spacing:0.35px">Mirror</div>
<div class="lk" style="left:261px;top:344.5px"><svg width="17" height="18"><path d="M8.5 7.5 C8.5 1.2,15.8 1.2,15.8 7" fill="none" stroke="#4d4d4d" stroke-width="2.4"/><rect x="0" y="7" width="17" height="11" fill="#4d4d4d"/></svg></div>
<div class="cb" style="left:98px;top:344.0px"></div>
<svg class="a" style="left:98px;top:344.0px" width="19" height="19"><path d="M4.5 9.5 L8.5 15 L14.5 3.5" fill="none" stroke="#c8c8c8" stroke-width="1.7"/></svg>
<div class="t" style="left:124px;top:345.0px;font-size:16.5px;color:#d4d4d4;letter-spacing:0.35px">Smudge Length</div>
<div class="lk" style="left:261px;top:367.75px"><svg width="17" height="18"><path d="M8.5 7.5 C8.5 1.2,15.8 1.2,15.8 7" fill="none" stroke="#4d4d4d" stroke-width="2.4"/><rect x="0" y="7" width="17" height="11" fill="#4d4d4d"/></svg></div>
<div class="cb" style="left:98px;top:367.25px"></div>
<svg class="a" style="left:98px;top:367.25px" width="19" height="19"><path d="M4.5 9.5 L8.5 15 L14.5 3.5" fill="none" stroke="#c8c8c8" stroke-width="1.7"/></svg>
<div class="t" style="left:124px;top:368.25px;font-size:16.5px;color:#d4d4d4;letter-spacing:0.35px">Smudge Radius</div>
<div class="lk" style="left:261px;top:391.0px"><svg width="17" height="18"><path d="M8.5 7.5 C8.5 1.2,15.8 1.2,15.8 7" fill="none" stroke="#4d4d4d" stroke-width="2.4"/><rect x="0" y="7" width="17" height="11" fill="#4d4d4d"/></svg></div>
<div class="cb" style="left:98px;top:390.5px"></div>
<div class="t" style="left:124px;top:391.5px;font-size:16.5px;color:#d4d4d4;letter-spacing:0.35px">Color Rate</div>
<div class="lk" style="left:261px;top:414.25px"><svg width="17" height="18"><path d="M8.5 7.5 C8.5 1.2,15.8 1.2,15.8 7" fill="none" stroke="#4d4d4d" stroke-width="2.4"/><rect x="0" y="7" width="17" height="11" fill="#4d4d4d"/></svg></div>
<div class="a" style="left:98px;top:413.75px;width:19px;height:19px;background:#333"></div>
<div class="t" style="left:124px;top:414.75px;font-size:16.5px;color:#777777;letter-spacing:0.35px">Paint Thickness</div>
<div class="lk" style="left:261px;top:437.5px"><svg width="17" height="18"><path d="M8.5 7.5 C8.5 1.2,15.8 1.2,15.8 7" fill="none" stroke="#4d4d4d" stroke-width="2.4"/><rect x="0" y="7" width="17" height="11" fill="#4d4d4d"/></svg></div>
<div class="cb" style="left:98px;top:437.0px"></div>
<svg class="a" style="left:98px;top:437.0px" width="19" height="19"><path d="M4.5 9.5 L8.5 15 L14.5 3.5" fill="none" stroke="#c8c8c8" stroke-width="1.7"/></svg>
<div class="t" style="left:124px;top:438.0px;font-size:16.5px;color:#d4d4d4;letter-spacing:0.35px">Rotation</div>
<div class="lk" style="left:261px;top:460.75px"><svg width="17" height="18"><path d="M8.5 7.5 C8.5 1.2,15.8 1.2,15.8 7" fill="none" stroke="#4d4d4d" stroke-width="2.4"/><rect x="0" y="7" width="17" height="11" fill="#4d4d4d"/></svg></div>
<div class="cb" style="left:98px;top:460.25px"></div>
<div class="t" style="left:124px;top:461.25px;font-size:16.5px;color:#d4d4d4;letter-spacing:0.35px">Scatter</div>
<div class="lk" style="left:261px;top:484.0px"><svg width="17" height="18"><path d="M8.5 7.5 C8.5 1.2,15.8 1.2,15.8 7" fill="none" stroke="#4d4d4d" stroke-width="2.4"/><rect x="0" y="7" width="17" height="11" fill="#4d4d4d"/></svg></div>
<div class="cb" style="left:98px;top:483.5px"></div>
<svg class="a" style="left:98px;top:483.5px" width="19" height="19"><path d="M4 9.5 L8 15.5 L15 2.5" fill="none" stroke="#e02020" stroke-width="2.6"/></svg>
<div class="t" style="left:124px;top:484.5px;font-size:16.5px;color:#d4d4d4;letter-spacing:0.35px">Overlay Mode</div>
<div class="lk" style="left:261px;top:507.25px"><svg width="17" height="18"><path d="M8.5 7.5 C8.5 1.2,15.8 1.2,15.8 7" fill="none" stroke="#4d4d4d" stroke-width="2.4"/><rect x="0" y="7" width="17" height="11" fill="#4d4d4d"/></svg></div>
<div class="cb" style="left:98px;top:506.75px"></div>
<div class="t" style="left:124px;top:507.75px;font-size:16.5px;color:#d4d4d4;letter-spacing:0.35px">Gradient</div>
<div class="a" style="left:95px;top:527.5px;width:183px;height:23.5px;background:#363636"></div>
<svg class="a" style="left:101px;top:534.5px" width="11" height="11"><path d="M0.5 0.5 L10 0.5 L5.25 10 Z" fill="#dcdcdc"/></svg>
<div class="t" style="left:96px;top:532.0px;font-size:16.5px;color:#d4d4d4;letter-spacing:0.3px;width:181px;text-align:center">Color</div>
<div class="lk" style="left:261px;top:553.75px"><svg width="17" height="18"><path d="M8.5 7.5 C8.5 1.2,15.8 1.2,15.8 7" fill="none" stroke="#4d4d4d" stroke-width="2.4"/><rect x="0" y="7" width="17" height="11" fill="#4d4d4d"/></svg></div>
<div class="cb" style="left:98px;top:553.25px"></div>
<div class="t" style="left:124px;top:554.25px;font-size:16.5px;color:#d4d4d4;letter-spacing:0.35px">Hue</div>
<div class="lk" style="left:261px;top:577.0px"><svg width="17" height="18"><path d="M8.5 7.5 C8.5 1.2,15.8 1.2,15.8 7" fill="none" stroke="#4d4d4d" stroke-width="2.4"/><rect x="0" y="7" width="17" height="11" fill="#4d4d4d"/></svg></div>
<div class="cb" style="left:98px;top:576.5px"></div>
<div class="t" style="left:124px;top:577.5px;font-size:16.5px;color:#d4d4d4;letter-spacing:0.35px">Saturation</div>
<div class="lk" style="left:261px;top:600.25px"><svg width="17" height="18"><path d="M8.5 7.5 C8.5 1.2,15.8 1.2,15.8 7" fill="none" stroke="#4d4d4d" stroke-width="2.4"/><rect x="0" y="7" width="17" height="11" fill="#4d4d4d"/></svg></div>
<div class="cb" style="left:98px;top:599.75px"></div>
<div class="t" style="left:124px;top:600.75px;font-size:16.5px;color:#d4d4d4;letter-spacing:0.35px">Value</div>
<div class="lk" style="left:261px;top:623.5px"><svg width="17" height="18"><path d="M8.5 7.5 C8.5 1.2,15.8 1.2,15.8 7" fill="none" stroke="#4d4d4d" stroke-width="2.4"/><rect x="0" y="7" width="17" height="11" fill="#4d4d4d"/></svg></div>
<div class="cb" style="left:98px;top:623.0px"></div>
<div class="t" style="left:124px;top:624.0px;font-size:16.5px;color:#d4d4d4;letter-spacing:0.35px">Airbrush</div>
<div class="lk" style="left:261px;top:646.75px"><svg width="17" height="18"><path d="M8.5 7.5 C8.5 1.2,15.8 1.2,15.8 7" fill="none" stroke="#4d4d4d" stroke-width="2.4"/><rect x="0" y="7" width="17" height="11" fill="#4d4d4d"/></svg></div>
<div class="cb" style="left:98px;top:646.25px"></div>
<div class="t" style="left:124px;top:647.25px;font-size:16.5px;color:#d4d4d4;letter-spacing:0.35px">Rate</div>
<div class="a" style="left:95px;top:667.0px;width:183px;height:23.5px;background:#363636"></div>
<svg class="a" style="left:101px;top:674.0px" width="11" height="11"><path d="M0.5 0.5 L10 0.5 L5.25 10 Z" fill="#dcdcdc"/></svg>
<div class="t" style="left:96px;top:671.5px;font-size:16.5px;color:#d4d4d4;letter-spacing:0.3px;width:181px;text-align:center">Texture</div>
<div class="lk" style="left:261px;top:693.25px"><svg width="17" height="18"><path d="M8.5 7.5 C8.5 1.2,15.8 1.2,15.8 7" fill="none" stroke="#4d4d4d" stroke-width="2.4"/><rect x="0" y="7" width="17" height="11" fill="#4d4d4d"/></svg></div>
<div class="cb" style="left:98px;top:692.75px"></div>
<div class="t" style="left:124px;top:693.75px;font-size:16.5px;color:#d4d4d4;letter-spacing:0.35px">Pattern</div>
<div class="lk" style="left:261px;top:716.5px"><svg width="17" height="18"><path d="M8.5 7.5 C8.5 1.2,15.8 1.2,15.8 7" fill="none" stroke="#4d4d4d" stroke-width="2.4"/><rect x="0" y="7" width="17" height="11" fill="#4d4d4d"/></svg></div>
<div class="cb" style="left:98px;top:716.0px"></div>
<div class="t" style="left:124px;top:717.0px;font-size:16.5px;color:#d4d4d4;letter-spacing:0.35px">Strength</div>
<div class="a" style="left:288px;top:155px;width:206px;height:31px;background:#3f3f3f;border:1px solid #343434;border-radius:3px"></div>
<div class="a" style="left:343px;top:156px;width:101px;height:29px;background:#566a7c"></div>
<div class="t" style="left:297px;top:162.5px;font-size:16.5px;color:#d4d4d4;letter-spacing:0.5px">Auto</div>
<div class="t" style="left:352px;top:162.5px;font-size:16.5px;color:#d8d8d8;letter-spacing:0.4px">Pre<u style="text-decoration-thickness:1px;text-underline-offset:3px">d</u>efined</div>
<div class="t" style="left:455px;top:162.5px;font-size:16.5px;color:#d4d4d4;letter-spacing:0.4px">Te<u style="text-decoration-thickness:1px;text-underline-offset:3px">x</u>t</div>
<div class="a" style="left:287px;top:186px;width:632px;height:614px;border:1px solid #545454;border-right:none;border-top:none"></div>
<div class="a" style="left:301px;top:208px;width:398px;height:30px;background:#404040;border:1px solid #373737;border-radius:3px"></div>
<div class="t" style="left:306px;top:216px;font-size:16.5px;color:#d4d4d4;">All</div>
<svg class="a" style="left:680px;top:219px" width="12" height="8"><path d="M0 0 L11 0 L5.5 7 Z" fill="#9a9a9a"/></svg>
<div class="a" style="left:703px;top:208px;width:70px;height:30px;background:#434343;border:1px solid #373737;border-radius:3px"></div>
<svg class="a" style="left:707px;top:211px" width="17" height="23"><path d="M2.2 2 L13.8 2 L13.8 21 L8 16.5 L2.2 21 Z" fill="none" stroke="#d6d6d6" stroke-width="2.2" stroke-linejoin="miter"/></svg>
<div class="t" style="left:729px;top:214.5px;font-size:15.5px;color:#d4d4d4;letter-spacing:0.6px"><u style="text-decoration-thickness:1px;text-underline-offset:3px">T</u>ag</div>
<svg class="a" style="left:763px;top:229px" width="9" height="6"><path d="M0 0 L8 0 L4 5 Z" fill="#a0a0a0"/></svg>
<svg class="a" style="left:778px;top:213px" width="23" height="23"><rect x="1" y="1" width="21" height="21" fill="none" stroke="#cfcfcf" stroke-width="2"/><path d="M11.5 2 L10.2 3.2 L12.8 4.6 L10.2 6 L12.8 7.4 L10.2 8.8 L11.5 10" fill="none" stroke="#cfcfcf" stroke-width="1.2"/></svg>
<div class="a" style="left:301px;top:240px;width:503px;height:477px;background:#373737"></div>
<div class="a" style="left:786px;top:241px;width:17px;height:475px;background:#3d3d3d;border:1px solid #444"></div>
<div class="a" style="left:786px;top:241px;width:17px;height:17px;background:#454545;border:1px solid #555"></div>
<svg class="a" style="left:789px;top:245px" width="11" height="8"><path d="M0 7 L10 7 L5 1 Z" fill="#9a9a9a"/></svg>
<div class="a" style="left:786px;top:421px;width:17px;height:276px;background:#404040;border:1px solid #555"></div>
<div class="a" style="left:786px;top:699px;width:17px;height:17px;background:#454545;border:1px solid #555"></div>
<svg class="a" style="left:789px;top:704px" width="11" height="8"><path d="M0 1 L10 1 L5 7 Z" fill="#9a9a9a"/></svg>
<svg width="0" height="0" style="position:absolute"><defs><filter id="b0_6" x="-50%" y="-50%" width="200%" height="200%"><feGaussianBlur stdDeviation="0.6"/></filter><filter id="b0_7" x="-50%" y="-50%" width="200%" height="200%"><feGaussianBlur stdDeviation="0.7"/></filter><filter id="b0_8" x="-50%" y="-50%" width="200%" height="200%"><feGaussianBlur stdDeviation="0.8"/></filter><filter id="b1" x="-50%" y="-50%" width="200%" height="200%"><feGaussianBlur stdDeviation="1"/></filter><filter id="b1_2" x="-50%" y="-50%" width="200%" height="200%"><feGaussianBlur stdDeviation="1.2"/></filter><filter id="b1_5" x="-50%" y="-50%" width="200%" height="200%"><feGaussianBlur stdDeviation="1.5"/></filter><filter id="b2" x="-50%" y="-50%" width="200%" height="200%"><feGaussianBlur stdDeviation="2"/></filter><filter id="b2_5" x="-50%" y="-50%" width="200%" height="200%"><feGaussianBlur stdDeviation="2.5"/></filter><filter id="b3" x="-50%" y="-50%" width="200%" height="200%"><feGaussianBlur stdDeviation="3"/></filter><filter id="b4" x="-50%" y="-50%" width="200%" height="200%"><feGaussianBlur stdDeviation="4"/></filter></defs></svg>
<div class="cell" style="left:302px;top:241px;height:10px"><svg width="56" height="56" style="margin-top:-46px"><path d="M2 47 C10 45, 20 46, 30 48 L28 50 C20 49, 10 50, 3 50 Z" fill="#222" filter="url(#b1)"/><circle cx="10.2" cy="49.3" r="0.48" fill="#333" opacity="0.8"/><circle cx="19.7" cy="49.8" r="0.33" fill="#333" opacity="0.8"/><circle cx="4.3" cy="51.0" r="0.43" fill="#333" opacity="0.8"/><circle cx="10.1" cy="52.0" r="0.54" fill="#333" opacity="0.8"/><circle cx="25.7" cy="48.9" r="0.62" fill="#333" opacity="0.8"/><circle cx="7.9" cy="49.8" r="0.73" fill="#333" opacity="0.8"/><circle cx="17.6" cy="50.4" r="0.64" fill="#333" opacity="0.8"/><circle cx="5.7" cy="50.5" r="0.60" fill="#333" opacity="0.8"/><circle cx="11.8" cy="46.2" r="0.73" fill="#333" opacity="0.8"/><circle cx="16.3" cy="50.3" r="0.74" fill="#333" opacity="0.8"/><circle cx="22.6" cy="51.5" r="0.50" fill="#333" opacity="0.8"/><circle cx="24.8" cy="48.7" r="0.77" fill="#333" opacity="0.8"/></svg></div>
<div class="cell" style="left:360px;top:241px;height:10px"><svg width="56" height="56" style="margin-top:-46px"><circle cx="26.6" cy="53.4" r="1.05" fill="#111" opacity="0.9"/><circle cx="27.3" cy="53.0" r="0.81" fill="#111" opacity="0.9"/><circle cx="13.2" cy="53.1" r="0.84" fill="#111" opacity="0.9"/><circle cx="43.6" cy="50.6" r="0.61" fill="#111" opacity="0.9"/><circle cx="8.5" cy="54.9" r="0.89" fill="#111" opacity="0.9"/><circle cx="6.1" cy="55.9" r="1.08" fill="#111" opacity="0.9"/><circle cx="36.7" cy="53.7" r="0.51" fill="#111" opacity="0.9"/><circle cx="4.8" cy="53.2" r="0.44" fill="#111" opacity="0.9"/><circle cx="13.5" cy="51.5" r="0.42" fill="#111" opacity="0.9"/><circle cx="27.2" cy="52.6" r="0.99" fill="#111" opacity="0.9"/><circle cx="30.0" cy="53.8" r="0.75" fill="#111" opacity="0.9"/><circle cx="37.1" cy="52.7" r="0.59" fill="#111" opacity="0.9"/><circle cx="53.9" cy="56.0" r="0.99" fill="#111" opacity="0.9"/><circle cx="39.4" cy="51.9" r="0.56" fill="#111" opacity="0.9"/><circle cx="18.5" cy="50.4" r="0.94" fill="#111" opacity="0.9"/><circle cx="24.0" cy="55.1" r="0.67" fill="#111" opacity="0.9"/><circle cx="51.9" cy="55.1" r="0.40" fill="#111" opacity="0.9"/><circle cx="14.5" cy="55.5" r="0.73" fill="#111" opacity="0.9"/><circle cx="53.0" cy="52.4" r="0.45" fill="#111" opacity="0.9"/><circle cx="35.5" cy="54.7" r="0.59" fill="#111" opacity="0.9"/><circle cx="8.4" cy="52.0" r="1.07" fill="#111" opacity="0.9"/><circle cx="41.9" cy="50.7" r="0.57" fill="#111" opacity="0.9"/><circle cx="9.1" cy="50.4" r="0.96" fill="#111" opacity="0.9"/><circle cx="12.9" cy="53.4" r="0.71" fill="#111" opacity="0.9"/><circle cx="13.5" cy="54.4" r="0.49" fill="#111" opacity="0.9"/><circle cx="36.2" cy="50.7" r="0.69" fill="#111" opacity="0.9"/><circle cx="14.6" cy="51.6" r="1.08" fill="#111" opacity="0.9"/><circle cx="44.2" cy="51.8" r="1.02" fill="#111" opacity="0.9"/><circle cx="14.5" cy="52.4" r="1.00" fill="#111" opacity="0.9"/><circle cx="36.1" cy="50.6" r="1.09" fill="#111" opacity="0.9"/></svg></div>
<div class="cell" style="left:418px;top:241px;height:10px"><svg width="56" height="56" style="margin-top:-46px"></svg></div>
<div class="cell" style="left:476px;top:241px;height:10px"><svg width="56" height="56" style="margin-top:-46px"></svg></div>
<div class="cell" style="left:534px;top:241px;height:10px"><svg width="56" height="56" style="margin-top:-46px"><circle cx="4" cy="48" r="0.8" fill="#333"/><circle cx="48" cy="54" r="0.8" fill="#333"/></svg></div>
<div class="cell" style="left:592px;top:241px;height:10px"><svg width="56" height="56" style="margin-top:-46px"><rect x="16" y="47" width="12" height="1.5" fill="#777"/><rect x="34" y="47" width="4" height="1.5" fill="#777"/></svg></div>
<div class="cell" style="left:650px;top:241px;height:10px"><svg width="56" height="56" style="margin-top:-46px"><ellipse cx="28" cy="51" rx="24" ry="3" fill="#888" filter="url(#b1)"/><rect x="20" y="42" width="1" height="8" fill="#444"/><rect x="34" y="42" width="1" height="8" fill="#444"/></svg></div>
<div class="cell" style="left:708px;top:241px;height:10px"><svg width="56" height="56" style="margin-top:-46px"></svg></div>
<div class="cell" style="left:302px;top:253px"><svg width="56" height="56"><defs><linearGradient id="gv" x1="0" y1="0" x2="0" y2="1"><stop offset="0" stop-color="#111"/><stop offset="0.5" stop-color="#888"/><stop offset="1" stop-color="#fff"/></linearGradient></defs><rect x="26" y="1" width="6" height="54" fill="url(#gv)"/></svg></div>
<div class="cell" style="left:360px;top:253px"><svg width="56" height="56"><path d="M20 8 L40 6 L44 38 L22 44 Z" fill="#bbb" opacity="0.5" filter="url(#b1_5)"/><path d="M19.0 6 L18.0 40" stroke="#555" stroke-width="1.8" stroke-dasharray="0.9 0.5" opacity="0.9"/><path d="M22.2 11 L23.2 43" stroke="#555" stroke-width="1.8" stroke-dasharray="0.9 0.5" opacity="0.9"/><path d="M25.4 9 L24.4 46" stroke="#555" stroke-width="1.8" stroke-dasharray="0.9 0.5" opacity="0.9"/><path d="M25.6 7 L25.6 41" stroke="#555" stroke-width="1.8" stroke-dasharray="0.9 0.5" opacity="0.9"/><path d="M28.8 12 L26.8 44" stroke="#555" stroke-width="1.8" stroke-dasharray="0.9 0.5" opacity="0.9"/><path d="M32.0 10 L32.0 47" stroke="#555" stroke-width="1.8" stroke-dasharray="0.9 0.5" opacity="0.9"/><path d="M32.2 8 L33.2 42" stroke="#555" stroke-width="1.8" stroke-dasharray="0.9 0.5" opacity="0.9"/><path d="M35.4 6 L34.4 45" stroke="#555" stroke-width="1.8" stroke-dasharray="0.9 0.5" opacity="0.9"/><path d="M38.6 11 L35.6 40" stroke="#555" stroke-width="1.8" stroke-dasharray="0.9 0.5" opacity="0.9"/><path d="M38.8 9 L40.8 43" stroke="#555" stroke-width="1.8" stroke-dasharray="0.9 0.5" opacity="0.9"/><path d="M42.0 7 L42.0 46" stroke="#555" stroke-width="1.8" stroke-dasharray="0.9 0.5" opacity="0.9"/></svg></div>
<div class="cell" style="left:418px;top:253px"><svg width="56" height="56"><path d="M6 3.0 Q10 28 22 52" fill="none" stroke="#111" stroke-width="1.3"/><path d="M12 4.5 Q16 28 30 50" fill="none" stroke="#111" stroke-width="1.9"/><path d="M18 6.0 Q22 28 36 48" fill="none" stroke="#111" stroke-width="1.3"/><path d="M24 7.5 Q28 28 40 46" fill="none" stroke="#111" stroke-width="1.9"/><path d="M30 9.0 Q34 28 48 44" fill="none" stroke="#111" stroke-width="1.3"/><path d="M36 10.5 Q40 28 52 42" fill="none" stroke="#111" stroke-width="1.9"/><path d="M10 12.0 Q14 28 28 40" fill="none" stroke="#111" stroke-width="1.3"/><path d="M22 13.5 Q26 28 44 38" fill="none" stroke="#111" stroke-width="1.9"/></svg></div>
<div class="cell" style="left:476px;top:253px"><svg width="56" height="56"><ellipse cx="28" cy="30" rx="24" ry="9" fill="#888" opacity="0.5" filter="url(#b2)"/><ellipse cx="28" cy="27" rx="20" ry="5.5" fill="#111" filter="url(#b1_2)"/><path d="M9 28 L10 20" stroke="#222" stroke-width="0.7"/><path d="M12 28 L13 22" stroke="#222" stroke-width="0.7"/><path d="M15 28 L16 24" stroke="#222" stroke-width="0.7"/><path d="M18 28 L19 21" stroke="#222" stroke-width="0.7"/><path d="M21 28 L22 23" stroke="#222" stroke-width="0.7"/><path d="M24 28 L25 20" stroke="#222" stroke-width="0.7"/><path d="M27 28 L28 22" stroke="#222" stroke-width="0.7"/><path d="M30 28 L31 24" stroke="#222" stroke-width="0.7"/><path d="M33 28 L34 21" stroke="#222" stroke-width="0.7"/><path d="M36 28 L37 23" stroke="#222" stroke-width="0.7"/><path d="M39 28 L40 20" stroke="#222" stroke-width="0.7"/><path d="M42 28 L43 22" stroke="#222" stroke-width="0.7"/><path d="M45 28 L46 24" stroke="#222" stroke-width="0.7"/></svg></div>
<div class="cell" style="left:534px;top:253px"><svg width="56" height="56"><circle cx="30.3" cy="12.1" r="3.5" fill="#000"/><circle cx="45" cy="13" r="2" fill="#000"/><circle cx="10.6" cy="18.2" r="2" fill="#000"/><circle cx="32.8" cy="26.3" r="3.5" fill="#000"/><circle cx="19" cy="34" r="3.7" fill="#000"/><circle cx="39.6" cy="46" r="2" fill="#000"/></svg></div>
<div class="cell" style="left:592px;top:253px"><svg width="56" height="56"><path d="M28 43.5 C20 36, 10.5 29, 10.5 21 C10.5 16, 14 14.5, 18 14.5 C22 14.5, 26 17, 28 20 C30 17, 34 14.5, 38 14.5 C42 14.5, 44.5 17, 44.5 21 C44.5 29, 36 36, 28 43.5 Z" fill="#000"/></svg></div>
<div class="cell" style="left:650px;top:253px"><svg width="56" height="56"><g fill="#000"><path d="M6 10 L20 6 L24 12 L30 2 L36 8 L40 16 L52 16 L44 24 L48 34 L38 36 L36 46 L26 50 L20 55 L18 46 L8 40 L12 32 L4 30 L12 22 Z"/></g><circle cx="14.5" cy="31.0" r="1.63" fill="#fff" opacity="0.95"/><circle cx="10.8" cy="38.1" r="1.30" fill="#fff" opacity="0.95"/><circle cx="44.1" cy="42.5" r="1.10" fill="#fff" opacity="0.95"/><circle cx="35.3" cy="32.2" r="1.33" fill="#fff" opacity="0.95"/><circle cx="35.4" cy="36.3" r="0.94" fill="#fff" opacity="0.95"/><circle cx="20.2" cy="30.5" r="1.15" fill="#fff" opacity="0.95"/><circle cx="37.3" cy="15.8" r="0.94" fill="#fff" opacity="0.95"/><circle cx="25.6" cy="8.0" r="1.61" fill="#fff" opacity="0.95"/><circle cx="16.9" cy="6.1" r="1.54" fill="#fff" opacity="0.95"/><circle cx="23.2" cy="28.3" r="0.87" fill="#fff" opacity="0.95"/><circle cx="32.8" cy="27.5" r="0.69" fill="#fff" opacity="0.95"/><circle cx="36.5" cy="10.5" r="1.51" fill="#fff" opacity="0.95"/><circle cx="32.8" cy="25.8" r="0.90" fill="#fff" opacity="0.95"/><circle cx="46.2" cy="49.9" r="1.51" fill="#fff" opacity="0.95"/><circle cx="40.8" cy="20.5" r="1.91" fill="#fff" opacity="0.95"/><circle cx="25.1" cy="33.4" r="1.08" fill="#fff" opacity="0.95"/><circle cx="36.2" cy="18.1" r="1.92" fill="#fff" opacity="0.95"/><circle cx="47.5" cy="14.9" r="1.01" fill="#fff" opacity="0.95"/><circle cx="40.2" cy="30.4" r="1.75" fill="#fff" opacity="0.95"/><circle cx="41.3" cy="29.5" r="0.79" fill="#fff" opacity="0.95"/><circle cx="17.2" cy="20.5" r="1.29" fill="#fff" opacity="0.95"/><circle cx="25.8" cy="27.9" r="0.61" fill="#fff" opacity="0.95"/><circle cx="31.2" cy="16.1" r="0.89" fill="#fff" opacity="0.95"/><circle cx="29.4" cy="27.6" r="1.66" fill="#fff" opacity="0.95"/><circle cx="36.6" cy="48.7" r="1.42" fill="#fff" opacity="0.95"/><circle cx="19.1" cy="38.6" r="0.87" fill="#fff" opacity="0.95"/><circle cx="15.0" cy="22.4" r="1.33" fill="#fff" opacity="0.95"/><circle cx="44.5" cy="38.9" r="1.45" fill="#fff" opacity="0.95"/><circle cx="12.4" cy="33.3" r="1.34" fill="#fff" opacity="0.95"/><circle cx="16.5" cy="7.7" r="1.55" fill="#fff" opacity="0.95"/><circle cx="45.0" cy="39.1" r="1.12" fill="#fff" opacity="0.95"/><circle cx="14.9" cy="7.5" r="1.70" fill="#fff" opacity="0.95"/><circle cx="43.1" cy="22.0" r="1.60" fill="#fff" opacity="0.95"/><circle cx="35.0" cy="49.5" r="1.33" fill="#fff" opacity="0.95"/><circle cx="37.9" cy="44.3" r="1.86" fill="#fff" opacity="0.95"/><circle cx="15.0" cy="34.9" r="1.77" fill="#fff" opacity="0.95"/><circle cx="29.2" cy="22.3" r="0.92" fill="#fff" opacity="0.95"/><circle cx="22.9" cy="25.6" r="0.91" fill="#fff" opacity="0.95"/><circle cx="44.4" cy="7.4" r="1.42" fill="#fff" opacity="0.95"/><circle cx="17.9" cy="32.8" r="0.81" fill="#fff" opacity="0.95"/><circle cx="44.9" cy="15.5" r="1.71" fill="#fff" opacity="0.95"/><circle cx="19.7" cy="36.8" r="1.19" fill="#fff" opacity="0.95"/><circle cx="40.4" cy="47.1" r="0.96" fill="#fff" opacity="0.95"/><circle cx="17.3" cy="47.5" r="0.74" fill="#fff" opacity="0.95"/><circle cx="22.0" cy="44.0" r="1.70" fill="#fff" opacity="0.95"/><circle cx="34.3" cy="34.8" r="0.93" fill="#fff" opacity="0.95"/><circle cx="46.1" cy="11.9" r="1.02" fill="#fff" opacity="0.95"/><circle cx="28.6" cy="17.4" r="0.92" fill="#fff" opacity="0.95"/><circle cx="23.6" cy="16.4" r="1.31" fill="#fff" opacity="0.95"/><circle cx="6.0" cy="20.4" r="1.86" fill="#fff" opacity="0.95"/><circle cx="24.1" cy="39.9" r="1.54" fill="#fff" opacity="0.95"/><circle cx="34.9" cy="28.5" r="1.32" fill="#fff" opacity="0.95"/><circle cx="22.3" cy="36.5" r="1.39" fill="#fff" opacity="0.95"/><circle cx="12.8" cy="34.9" r="1.21" fill="#fff" opacity="0.95"/><circle cx="25.5" cy="33.8" r="1.54" fill="#fff" opacity="0.95"/><circle cx="9.6" cy="48.6" r="1.16" fill="#fff" opacity="0.95"/><circle cx="8.0" cy="7.9" r="0.83" fill="#fff" opacity="0.95"/><circle cx="13.4" cy="36.3" r="1.44" fill="#fff" opacity="0.95"/><circle cx="33.4" cy="17.6" r="1.16" fill="#fff" opacity="0.95"/><circle cx="48.3" cy="7.5" r="1.75" fill="#fff" opacity="0.95"/><circle cx="38.6" cy="20.8" r="1.84" fill="#fff" opacity="0.95"/><circle cx="30.2" cy="40.6" r="1.43" fill="#fff" opacity="0.95"/><circle cx="38.5" cy="44.0" r="1.21" fill="#fff" opacity="0.95"/><circle cx="32.5" cy="30.1" r="1.91" fill="#fff" opacity="0.95"/><circle cx="46.9" cy="12.7" r="1.46" fill="#fff" opacity="0.95"/><circle cx="33.2" cy="14.2" r="1.08" fill="#fff" opacity="0.95"/><circle cx="40.0" cy="27.1" r="1.03" fill="#fff" opacity="0.95"/><circle cx="11.4" cy="35.6" r="0.65" fill="#fff" opacity="0.95"/><circle cx="41.8" cy="27.9" r="1.57" fill="#fff" opacity="0.95"/><circle cx="42.7" cy="27.8" r="1.13" fill="#fff" opacity="0.95"/><path d="M28 26 L52.5 31.0" stroke="#000" stroke-width="1.3"/><path d="M28 26 L43.5 45.6" stroke="#000" stroke-width="1.3"/><path d="M28 26 L27.3 51.0" stroke="#000" stroke-width="1.3"/><path d="M28 26 L9.6 42.9" stroke="#000" stroke-width="1.3"/><path d="M28 26 L3.0 24.5" stroke="#000" stroke-width="1.3"/><path d="M28 26 L9.9 8.8" stroke="#000" stroke-width="1.3"/><path d="M28 26 L25.2 1.2" stroke="#000" stroke-width="1.3"/><path d="M28 26 L43.9 6.7" stroke="#000" stroke-width="1.3"/></svg></div>
<div class="cell" style="left:708px;top:253px"><svg width="56" height="56"><g fill="#000"><ellipse cx="7.5" cy="11" rx="3" ry="3.5" transform="rotate(0 7.5 11)"/><ellipse cx="4" cy="16" rx="3.5" ry="2.2" transform="rotate(20 4 16)"/><ellipse cx="12" cy="20" rx="5" ry="4" transform="rotate(30 12 20)"/><ellipse cx="18" cy="26" rx="4" ry="3" transform="rotate(0 18 26)"/><ellipse cx="30" cy="14" rx="3" ry="4.5" transform="rotate(20 30 14)"/><ellipse cx="33" cy="25" rx="5" ry="4" transform="rotate(-10 33 25)"/><ellipse cx="43" cy="22" rx="4" ry="3" transform="rotate(30 43 22)"/><ellipse cx="38" cy="37" rx="6" ry="3.5" transform="rotate(10 38 37)"/><ellipse cx="23" cy="35" rx="6" ry="4.5" transform="rotate(-30 23 35)"/><ellipse cx="12" cy="44" rx="5" ry="6" transform="rotate(20 12 44)"/><ellipse cx="48" cy="40" rx="2.5" ry="2" transform="rotate(0 48 40)"/><ellipse cx="52" cy="40" rx="2" ry="2" transform="rotate(0 52 40)"/><ellipse cx="22" cy="28" rx="2" ry="3" transform="rotate(0 22 28)"/><ellipse cx="28" cy="30" rx="3" ry="2" transform="rotate(0 28 30)"/></g><path d="M6 14 Q14 22 20 30 Q26 36 50 40" stroke="#000" stroke-width="1.5" fill="none"/></svg></div>
<div class="cell" style="left:302px;top:311px"><svg width="56" height="56"><g fill="none" stroke="#000" stroke-width="2.6" stroke-linecap="round" stroke-linejoin="round"><path d="M16.5 3 L19.5 15 L26 12.5 Z" stroke-width="2.2"/><path d="M27 12 C34 8, 46 9, 52 18 C57 26, 55 38, 50 43 C45 48, 38 50, 33 53 C28 53, 24 49, 25 45 C27 40, 32 38, 34 36.5"/><path d="M20 18 C17 23, 14 26, 12.5 29.5 C12 33, 14 35.5, 17 35.5 C22 36, 28 36, 32 35"/><path d="M24.5 24 Q27.5 26.5 30.5 24.5" stroke-width="1.8"/><path d="M17 16.5 L15.5 20.5 L20.5 21" stroke-width="2"/></g><path d="M8.8 8 Q9.5 11.3 12.8 12 Q9.5 12.7 8.8 16 Q8.1 12.7 4.8 12 Q8.1 11.3 8.8 8Z M4.8 17 Q5.5 20.8 9.3 21.5 Q5.5 22.2 4.8 26 Q4.1 22.2 0.3 21.5 Q4.1 20.8 4.8 17Z" fill="none" stroke="#000" stroke-width="1.7"/></svg></div>
<div class="cell" style="left:360px;top:311px"><svg width="56" height="56"><rect x="0.00" y="0.00" width="11.20" height="11.20" fill="#c8c8c8"/><rect x="0.00" y="22.40" width="11.20" height="11.20" fill="#c8c8c8"/><rect x="0.00" y="44.80" width="11.20" height="11.20" fill="#c8c8c8"/><rect x="11.20" y="11.20" width="11.20" height="11.20" fill="#c8c8c8"/><rect x="11.20" y="33.60" width="11.20" height="11.20" fill="#c8c8c8"/><rect x="22.40" y="0.00" width="11.20" height="11.20" fill="#c8c8c8"/><rect x="22.40" y="22.40" width="11.20" height="11.20" fill="#c8c8c8"/><rect x="22.40" y="44.80" width="11.20" height="11.20" fill="#c8c8c8"/><rect x="33.60" y="11.20" width="11.20" height="11.20" fill="#c8c8c8"/><rect x="33.60" y="33.60" width="11.20" height="11.20" fill="#c8c8c8"/><rect x="44.80" y="0.00" width="11.20" height="11.20" fill="#c8c8c8"/><rect x="44.80" y="22.40" width="11.20" height="11.20" fill="#c8c8c8"/><rect x="44.80" y="44.80" width="11.20" height="11.20" fill="#c8c8c8"/><path d="M2 18 L10 14 L24 15 L40 13 L50 16 L55 24 L54 30 L46 34 L40 38 L30 40 L22 42 L16 39 L8 34 L3 28 Z" fill="#2c2c2c"/><path d="M2 18 L10 14 L24 15 L40 13 L50 16 L55 24 L44 26 L28 27 L12 26 L3 24 Z" fill="#555"/></svg></div>
<div class="cell" style="left:418px;top:311px"><svg width="56" height="56"><path d="M6 40 Q22 22 28 14 Q36 24 52 40 Z" fill="#999" opacity="0.45" filter="url(#b1_5)"/><path d="M14.0 40 L26.0 18" stroke="#333" stroke-width="0.5" opacity="0.7"/><path d="M16.5 40 L26.5 19" stroke="#333" stroke-width="0.5" opacity="0.7"/><path d="M19.0 40 L27.0 20" stroke="#333" stroke-width="0.5" opacity="0.7"/><path d="M21.5 40 L27.5 21" stroke="#333" stroke-width="0.5" opacity="0.7"/><path d="M24.0 40 L28.0 18" stroke="#333" stroke-width="0.5" opacity="0.7"/><path d="M26.5 40 L28.5 19" stroke="#333" stroke-width="0.5" opacity="0.7"/><path d="M29.0 40 L29.0 20" stroke="#333" stroke-width="0.5" opacity="0.7"/><path d="M31.5 40 L29.5 21" stroke="#333" stroke-width="0.5" opacity="0.7"/><path d="M34.0 40 L30.0 18" stroke="#333" stroke-width="0.5" opacity="0.7"/><path d="M36.5 40 L30.5 19" stroke="#333" stroke-width="0.5" opacity="0.7"/><path d="M39.0 40 L31.0 20" stroke="#333" stroke-width="0.5" opacity="0.7"/><path d="M41.5 40 L31.5 21" stroke="#333" stroke-width="0.5" opacity="0.7"/></svg></div>
<div class="cell" style="left:476px;top:311px"><svg width="56" height="56"><path d="M2 27 L10 22 L10 14 L16 10 L20 16 L28 16 L34 20 L44 22 L54 22 L53 36 L46 40 L40 45 L32 42 L26 38 L18 38 L10 32 Z" fill="#0c0c0c" filter="url(#b0_6)"/><circle cx="23.5" cy="36.4" r="0.94" fill="#fff" opacity="0.85"/><circle cx="26.2" cy="20.6" r="1.10" fill="#fff" opacity="0.85"/><circle cx="17.2" cy="41.2" r="0.72" fill="#fff" opacity="0.85"/><circle cx="48.3" cy="16.7" r="0.90" fill="#fff" opacity="0.85"/><circle cx="30.3" cy="40.6" r="1.26" fill="#fff" opacity="0.85"/><circle cx="19.6" cy="31.7" r="1.27" fill="#fff" opacity="0.85"/><circle cx="13.7" cy="36.9" r="1.23" fill="#fff" opacity="0.85"/><circle cx="48.4" cy="20.1" r="1.16" fill="#fff" opacity="0.85"/><circle cx="26.1" cy="40.8" r="1.19" fill="#fff" opacity="0.85"/><circle cx="6.8" cy="40.4" r="1.24" fill="#fff" opacity="0.85"/><circle cx="18.5" cy="41.0" r="0.65" fill="#fff" opacity="0.85"/><circle cx="47.4" cy="30.7" r="0.52" fill="#fff" opacity="0.85"/><circle cx="41.7" cy="22.9" r="0.56" fill="#fff" opacity="0.85"/><circle cx="13.3" cy="16.4" r="0.91" fill="#fff" opacity="0.85"/><circle cx="18.6" cy="39.7" r="0.85" fill="#fff" opacity="0.85"/><circle cx="10.7" cy="14.1" r="1.14" fill="#fff" opacity="0.85"/><circle cx="10.8" cy="40.8" r="1.18" fill="#fff" opacity="0.85"/><circle cx="31.0" cy="30.0" r="0.75" fill="#fff" opacity="0.85"/><circle cx="45.8" cy="22.7" r="0.63" fill="#fff" opacity="0.85"/><circle cx="31.4" cy="38.2" r="1.37" fill="#fff" opacity="0.85"/><circle cx="22.7" cy="20.7" r="0.92" fill="#fff" opacity="0.85"/><circle cx="10.7" cy="30.8" r="0.70" fill="#fff" opacity="0.85"/><circle cx="19.1" cy="36.1" r="1.35" fill="#fff" opacity="0.85"/><circle cx="33.3" cy="21.9" r="1.35" fill="#fff" opacity="0.85"/><circle cx="32.2" cy="29.5" r="0.86" fill="#fff" opacity="0.85"/><circle cx="42.4" cy="23.0" r="0.64" fill="#fff" opacity="0.85"/><circle cx="21.7" cy="22.9" r="0.65" fill="#fff" opacity="0.85"/><circle cx="11.6" cy="33.5" r="0.72" fill="#fff" opacity="0.85"/><circle cx="44.0" cy="32.2" r="1.26" fill="#fff" opacity="0.85"/><circle cx="35.5" cy="15.6" r="1.23" fill="#fff" opacity="0.85"/></svg></div>
<div class="cell" style="left:534px;top:311px"><svg width="56" height="56"><ellipse cx="28" cy="28" rx="13" ry="26" fill="#111"/><circle cx="31.4" cy="28.5" r="1.01" fill="#bbb" opacity="0.9"/><circle cx="26.5" cy="21.0" r="0.65" fill="#bbb" opacity="0.9"/><circle cx="29.3" cy="51.4" r="0.69" fill="#bbb" opacity="0.9"/><circle cx="27.4" cy="7.4" r="0.68" fill="#bbb" opacity="0.9"/><circle cx="20.6" cy="24.6" r="1.04" fill="#bbb" opacity="0.9"/><circle cx="31.1" cy="27.9" r="0.53" fill="#bbb" opacity="0.9"/><circle cx="34.6" cy="22.7" r="0.76" fill="#bbb" opacity="0.9"/><circle cx="24.8" cy="39.7" r="1.74" fill="#bbb" opacity="0.9"/><circle cx="29.2" cy="37.5" r="1.26" fill="#bbb" opacity="0.9"/><circle cx="11.4" cy="17.8" r="1.59" fill="#bbb" opacity="0.9"/><circle cx="25.1" cy="35.5" r="1.59" fill="#bbb" opacity="0.9"/><circle cx="29.7" cy="27.8" r="1.46" fill="#bbb" opacity="0.9"/><circle cx="34.9" cy="13.0" r="0.78" fill="#bbb" opacity="0.9"/><circle cx="31.3" cy="6.3" r="0.75" fill="#bbb" opacity="0.9"/><circle cx="24.9" cy="20.4" r="0.55" fill="#bbb" opacity="0.9"/><circle cx="24.8" cy="38.8" r="1.02" fill="#bbb" opacity="0.9"/><circle cx="20.0" cy="6.8" r="1.75" fill="#bbb" opacity="0.9"/><circle cx="50.0" cy="21.4" r="1.53" fill="#bbb" opacity="0.9"/><circle cx="26.5" cy="36.2" r="1.31" fill="#bbb" opacity="0.9"/><circle cx="17.9" cy="22.0" r="0.62" fill="#bbb" opacity="0.9"/><circle cx="33.5" cy="57.5" r="1.28" fill="#bbb" opacity="0.9"/><circle cx="26.9" cy="22.1" r="1.02" fill="#bbb" opacity="0.9"/><circle cx="36.6" cy="17.2" r="1.79" fill="#bbb" opacity="0.9"/><circle cx="30.5" cy="42.6" r="1.54" fill="#bbb" opacity="0.9"/><circle cx="16.4" cy="36.4" r="1.23" fill="#bbb" opacity="0.9"/><circle cx="30.4" cy="32.3" r="1.78" fill="#bbb" opacity="0.9"/><circle cx="31.4" cy="34.3" r="0.94" fill="#bbb" opacity="0.9"/><circle cx="24.9" cy="1.3" r="1.12" fill="#bbb" opacity="0.9"/><circle cx="15.7" cy="28.3" r="0.86" fill="#bbb" opacity="0.9"/><circle cx="21.3" cy="41.9" r="1.33" fill="#bbb" opacity="0.9"/><circle cx="31.3" cy="29.6" r="0.68" fill="#bbb" opacity="0.9"/><circle cx="26.3" cy="6.7" r="1.77" fill="#bbb" opacity="0.9"/><circle cx="28.6" cy="17.3" r="1.50" fill="#bbb" opacity="0.9"/><circle cx="34.5" cy="26.8" r="0.51" fill="#bbb" opacity="0.9"/><circle cx="24.0" cy="36.1" r="0.73" fill="#bbb" opacity="0.9"/><circle cx="31.5" cy="30.0" r="1.62" fill="#bbb" opacity="0.9"/><circle cx="37.2" cy="34.0" r="0.77" fill="#bbb" opacity="0.9"/><circle cx="32.5" cy="52.3" r="0.89" fill="#bbb" opacity="0.9"/><circle cx="31.1" cy="42.1" r="1.40" fill="#bbb" opacity="0.9"/><circle cx="14.3" cy="23.8" r="1.02" fill="#bbb" opacity="0.9"/></svg></div>
<div class="cell" style="left:592px;top:311px"><svg width="56" height="56"><path d="M28 2 C34 3, 38 10, 42 20 C45 28, 44 38, 38 46 C34 52, 30 54, 28 54 C24 54, 20 50, 16 44 C11 36, 11 28, 14 20 C18 10, 22 3, 28 2 Z" fill="#000" filter="url(#b0_7)"/></svg></div>
<div class="cell" style="left:650px;top:311px"><svg width="56" height="56"><path d="M16 16 L42 14 L38 44 L20 42 Z" fill="#aaa" opacity="0.6" filter="url(#b2)"/><path d="M20 18 L22 40 M28 16 L26 42 M36 18 L34 38" stroke="#777" stroke-width="2" filter="url(#b0_8)"/></svg></div>
<div class="cell" style="left:708px;top:311px"><svg width="56" height="56"><circle cx="24.2" cy="32.9" r="0.78" fill="#000" opacity="0.9"/><circle cx="42.4" cy="21.2" r="1.67" fill="#000" opacity="0.9"/><circle cx="19.8" cy="24.8" r="1.74" fill="#000" opacity="0.9"/><circle cx="13.0" cy="19.9" r="1.62" fill="#000" opacity="0.9"/><circle cx="36.3" cy="18.9" r="0.76" fill="#000" opacity="0.9"/><circle cx="40.4" cy="41.0" r="0.78" fill="#000" opacity="0.9"/><circle cx="21.4" cy="16.5" r="0.60" fill="#000" opacity="0.9"/><circle cx="30.6" cy="25.5" r="1.97" fill="#000" opacity="0.9"/><circle cx="34.2" cy="22.1" r="1.73" fill="#000" opacity="0.9"/><circle cx="29.4" cy="22.9" r="1.64" fill="#000" opacity="0.9"/><circle cx="47.3" cy="43.5" r="1.67" fill="#000" opacity="0.9"/><circle cx="33.6" cy="27.6" r="1.04" fill="#000" opacity="0.9"/><circle cx="19.0" cy="18.6" r="0.81" fill="#000" opacity="0.9"/><circle cx="46.2" cy="15.5" r="1.01" fill="#000" opacity="0.9"/><circle cx="39.9" cy="39.8" r="1.19" fill="#000" opacity="0.9"/><circle cx="23.4" cy="18.0" r="1.17" fill="#000" opacity="0.9"/><circle cx="35.9" cy="28.7" r="1.28" fill="#000" opacity="0.9"/><circle cx="28.4" cy="17.6" r="1.77" fill="#000" opacity="0.9"/><circle cx="8.0" cy="22.9" r="1.61" fill="#000" opacity="0.9"/><circle cx="27.4" cy="32.9" r="0.61" fill="#000" opacity="0.9"/><circle cx="51.2" cy="32.9" r="1.99" fill="#000" opacity="0.9"/><circle cx="30.0" cy="23.2" r="1.62" fill="#000" opacity="0.9"/><circle cx="46.0" cy="43.1" r="1.61" fill="#000" opacity="0.9"/><circle cx="30.0" cy="14.3" r="1.21" fill="#000" opacity="0.9"/><circle cx="46.3" cy="7.2" r="0.91" fill="#000" opacity="0.9"/><circle cx="13.5" cy="34.2" r="1.66" fill="#000" opacity="0.9"/><circle cx="19.8" cy="33.8" r="2.14" fill="#000" opacity="0.9"/><circle cx="28.8" cy="34.8" r="1.67" fill="#000" opacity="0.9"/><circle cx="26.0" cy="49.0" r="1.05" fill="#000" opacity="0.9"/><circle cx="39.6" cy="23.5" r="2.00" fill="#000" opacity="0.9"/><circle cx="30.1" cy="11.8" r="0.86" fill="#000" opacity="0.9"/><circle cx="31.4" cy="30.2" r="0.81" fill="#000" opacity="0.9"/><circle cx="28.0" cy="24.8" r="0.90" fill="#000" opacity="0.9"/><circle cx="24.2" cy="25.6" r="1.06" fill="#000" opacity="0.9"/><circle cx="32.2" cy="42.9" r="0.70" fill="#000" opacity="0.9"/><circle cx="44.9" cy="27.8" r="1.71" fill="#000" opacity="0.9"/><circle cx="17.8" cy="24.2" r="2.15" fill="#000" opacity="0.9"/><circle cx="46.0" cy="16.5" r="0.55" fill="#000" opacity="0.9"/><circle cx="7.8" cy="15.3" r="1.59" fill="#000" opacity="0.9"/><circle cx="14.1" cy="26.8" r="0.80" fill="#000" opacity="0.9"/><circle cx="27.3" cy="10.7" r="0.62" fill="#000" opacity="0.9"/><circle cx="15.2" cy="27.2" r="1.10" fill="#000" opacity="0.9"/><circle cx="19.7" cy="7.5" r="2.04" fill="#000" opacity="0.9"/><circle cx="27.8" cy="33.4" r="1.95" fill="#000" opacity="0.9"/><circle cx="14.2" cy="15.8" r="1.98" fill="#000" opacity="0.9"/></svg></div>
<div class="cell" style="left:302px;top:369px"><svg width="56" height="56"><rect x="21" y="5" width="15" height="45" fill="#0a0a0a" rx="1"/><rect x="21" y="7" width="15" height="0.7" fill="#444"/><rect x="21" y="11" width="15" height="0.7" fill="#444"/><rect x="21" y="15" width="15" height="0.7" fill="#444"/><rect x="21" y="19" width="15" height="0.7" fill="#444"/><rect x="21" y="23" width="15" height="0.7" fill="#444"/><rect x="21" y="27" width="15" height="0.7" fill="#444"/><rect x="21" y="31" width="15" height="0.7" fill="#444"/><rect x="21" y="35" width="15" height="0.7" fill="#444"/><rect x="21" y="39" width="15" height="0.7" fill="#444"/><rect x="21" y="43" width="15" height="0.7" fill="#444"/></svg></div>
<div class="cell" style="left:360px;top:369px"><svg width="56" height="56"><circle cx="14.7" cy="28.1" r="0.48" fill="#222" opacity="0.8"/><circle cx="44.7" cy="14.0" r="0.91" fill="#222" opacity="0.8"/><circle cx="50.2" cy="22.7" r="1.36" fill="#222" opacity="0.8"/><circle cx="40.0" cy="30.5" r="0.99" fill="#222" opacity="0.8"/><circle cx="32.5" cy="20.7" r="1.40" fill="#222" opacity="0.8"/><circle cx="23.0" cy="53.2" r="1.24" fill="#222" opacity="0.8"/><circle cx="3.5" cy="15.4" r="0.83" fill="#222" opacity="0.8"/><circle cx="44.4" cy="11.2" r="0.98" fill="#222" opacity="0.8"/><circle cx="21.1" cy="42.9" r="1.32" fill="#222" opacity="0.8"/><circle cx="41.6" cy="12.1" r="1.14" fill="#222" opacity="0.8"/><circle cx="24.8" cy="45.5" r="0.82" fill="#222" opacity="0.8"/><circle cx="49.1" cy="53.3" r="1.21" fill="#222" opacity="0.8"/><circle cx="45.0" cy="44.6" r="0.95" fill="#222" opacity="0.8"/><circle cx="11.1" cy="53.3" r="0.81" fill="#222" opacity="0.8"/><circle cx="2.8" cy="24.6" r="0.76" fill="#222" opacity="0.8"/><circle cx="12.4" cy="51.9" r="0.42" fill="#222" opacity="0.8"/><circle cx="49.0" cy="30.6" r="0.50" fill="#222" opacity="0.8"/><circle cx="20.6" cy="25.4" r="0.43" fill="#222" opacity="0.8"/><circle cx="41.7" cy="35.9" r="1.38" fill="#222" opacity="0.8"/><circle cx="45.2" cy="42.9" r="1.40" fill="#222" opacity="0.8"/><circle cx="50.5" cy="35.5" r="0.89" fill="#222" opacity="0.8"/><circle cx="29.2" cy="44.3" r="1.32" fill="#222" opacity="0.8"/><circle cx="45.2" cy="45.6" r="0.33" fill="#222" opacity="0.8"/><circle cx="23.9" cy="6.5" r="0.94" fill="#222" opacity="0.8"/><circle cx="32.2" cy="31.2" r="1.24" fill="#222" opacity="0.8"/><circle cx="13.7" cy="39.9" r="0.95" fill="#222" opacity="0.8"/><circle cx="13.1" cy="52.9" r="0.36" fill="#222" opacity="0.8"/><circle cx="26.2" cy="29.8" r="0.96" fill="#222" opacity="0.8"/><circle cx="53.1" cy="30.7" r="1.28" fill="#222" opacity="0.8"/><circle cx="17.3" cy="27.0" r="0.46" fill="#222" opacity="0.8"/><circle cx="35.3" cy="24.0" r="1.16" fill="#222" opacity="0.8"/><circle cx="7.8" cy="26.1" r="1.35" fill="#222" opacity="0.8"/><circle cx="2.6" cy="36.3" r="1.05" fill="#222" opacity="0.8"/><circle cx="39.7" cy="31.0" r="0.85" fill="#222" opacity="0.8"/><circle cx="51.9" cy="16.7" r="1.07" fill="#222" opacity="0.8"/><circle cx="36.8" cy="39.9" r="0.83" fill="#222" opacity="0.8"/><circle cx="2.9" cy="42.3" r="0.61" fill="#222" opacity="0.8"/><circle cx="42.7" cy="53.3" r="1.15" fill="#222" opacity="0.8"/><circle cx="23.0" cy="46.6" r="0.72" fill="#222" opacity="0.8"/><circle cx="18.6" cy="31.7" r="1.02" fill="#222" opacity="0.8"/><circle cx="37.7" cy="30.7" r="0.75" fill="#222" opacity="0.8"/><circle cx="40.6" cy="18.9" r="0.97" fill="#222" opacity="0.8"/><circle cx="2.3" cy="8.8" r="1.25" fill="#222" opacity="0.8"/><circle cx="13.2" cy="23.5" r="0.36" fill="#222" opacity="0.8"/><circle cx="41.8" cy="19.1" r="0.35" fill="#222" opacity="0.8"/><circle cx="16.2" cy="50.4" r="1.13" fill="#222" opacity="0.8"/><circle cx="2.2" cy="51.6" r="0.38" fill="#222" opacity="0.8"/><circle cx="27.2" cy="29.8" r="1.16" fill="#222" opacity="0.8"/><circle cx="9.4" cy="44.9" r="0.60" fill="#222" opacity="0.8"/><circle cx="40.4" cy="50.2" r="0.95" fill="#222" opacity="0.8"/><circle cx="2.1" cy="36.7" r="0.78" fill="#222" opacity="0.8"/><circle cx="40.0" cy="42.8" r="0.42" fill="#222" opacity="0.8"/><circle cx="31.5" cy="35.5" r="1.32" fill="#222" opacity="0.8"/><circle cx="33.9" cy="34.0" r="1.15" fill="#222" opacity="0.8"/><circle cx="10.3" cy="46.7" r="0.94" fill="#222" opacity="0.8"/><circle cx="35.1" cy="10.0" r="0.88" fill="#222" opacity="0.8"/><circle cx="23.3" cy="12.7" r="1.34" fill="#222" opacity="0.8"/><circle cx="46.0" cy="25.9" r="0.38" fill="#222" opacity="0.8"/><circle cx="53.2" cy="8.1" r="0.86" fill="#222" opacity="0.8"/><circle cx="31.4" cy="46.5" r="1.02" fill="#222" opacity="0.8"/><circle cx="33.4" cy="28.7" r="1.38" fill="#222" opacity="0.8"/><circle cx="44.6" cy="20.5" r="1.17" fill="#222" opacity="0.8"/><circle cx="51.3" cy="27.3" r="0.39" fill="#222" opacity="0.8"/><circle cx="5.5" cy="52.3" r="0.53" fill="#222" opacity="0.8"/><circle cx="43.8" cy="12.0" r="0.55" fill="#222" opacity="0.8"/><circle cx="10.3" cy="44.4" r="0.40" fill="#222" opacity="0.8"/><circle cx="26.5" cy="44.1" r="0.88" fill="#222" opacity="0.8"/><circle cx="2.5" cy="2.9" r="1.21" fill="#222" opacity="0.8"/><circle cx="17.6" cy="6.3" r="0.88" fill="#222" opacity="0.8"/><circle cx="42.8" cy="17.8" r="0.45" fill="#222" opacity="0.8"/><path d="M8 20 L20 28 M6 30 L24 34 M30 40 L40 46 M40 8 L50 14" stroke="#333" stroke-width="1.5" opacity="0.8"/></svg></div>
<div class="cell" style="left:418px;top:369px"><svg width="56" height="56"><ellipse cx="28" cy="8.0" rx="3" ry="2" fill="#000"/><ellipse cx="28" cy="12.5" rx="3" ry="2" fill="#000"/><ellipse cx="28" cy="17.0" rx="3" ry="2" fill="#000"/><ellipse cx="28" cy="21.5" rx="3" ry="2" fill="#000"/><ellipse cx="28" cy="26.0" rx="3" ry="2" fill="#000"/><ellipse cx="28" cy="30.5" rx="3" ry="2" fill="#000"/><ellipse cx="28" cy="35.0" rx="3" ry="2" fill="#000"/><ellipse cx="28" cy="39.5" rx="3" ry="2" fill="#000"/><ellipse cx="28" cy="44.0" rx="3" ry="2" fill="#000"/><ellipse cx="28" cy="48.5" rx="3" ry="2" fill="#000"/></svg></div>
<div class="cell" style="left:476px;top:369px"><svg width="56" height="56"><ellipse cx="28" cy="10.0" rx="2.5" ry="2" fill="#444" filter="url(#b1_2)"/><ellipse cx="28" cy="16.5" rx="2.5" ry="2" fill="#444" filter="url(#b1_2)"/><ellipse cx="28" cy="23.0" rx="2.5" ry="2" fill="#444" filter="url(#b1_2)"/><ellipse cx="28" cy="29.5" rx="2.5" ry="2" fill="#444" filter="url(#b1_2)"/><ellipse cx="28" cy="36.0" rx="2.5" ry="2" fill="#444" filter="url(#b1_2)"/><ellipse cx="28" cy="42.5" rx="2.5" ry="2" fill="#444" filter="url(#b1_2)"/><ellipse cx="28" cy="49.0" rx="2.5" ry="2" fill="#444" filter="url(#b1_2)"/></svg></div>
<div class="cell" style="left:534px;top:369px"><svg width="56" height="56"><path d="M25 3 L31 3 L32 53 L24 53 Z" fill="#111" filter="url(#b1)"/><rect x="19" y="5.0" width="16" height="2.2" fill="#222" opacity="0.7" filter="url(#b1_2)"/><rect x="20" y="8.6" width="15" height="2.2" fill="#222" opacity="0.7" filter="url(#b1_2)"/><rect x="21" y="12.2" width="14" height="2.2" fill="#222" opacity="0.7" filter="url(#b1_2)"/><rect x="19" y="15.8" width="13" height="2.2" fill="#222" opacity="0.7" filter="url(#b1_2)"/><rect x="20" y="19.4" width="16" height="2.2" fill="#222" opacity="0.7" filter="url(#b1_2)"/><rect x="21" y="23.0" width="15" height="2.2" fill="#222" opacity="0.7" filter="url(#b1_2)"/><rect x="19" y="26.6" width="14" height="2.2" fill="#222" opacity="0.7" filter="url(#b1_2)"/><rect x="20" y="30.2" width="13" height="2.2" fill="#222" opacity="0.7" filter="url(#b1_2)"/><rect x="21" y="33.8" width="16" height="2.2" fill="#222" opacity="0.7" filter="url(#b1_2)"/><rect x="19" y="37.4" width="15" height="2.2" fill="#222" opacity="0.7" filter="url(#b1_2)"/><rect x="20" y="41.0" width="14" height="2.2" fill="#222" opacity="0.7" filter="url(#b1_2)"/><rect x="21" y="44.6" width="13" height="2.2" fill="#222" opacity="0.7" filter="url(#b1_2)"/><rect x="19" y="48.2" width="16" height="2.2" fill="#222" opacity="0.7" filter="url(#b1_2)"/></svg></div>
<div class="cell" style="left:592px;top:369px"><svg width="56" height="56"><ellipse cx="28" cy="7" rx="7" ry="2.2" fill="#000"/><ellipse cx="28" cy="18" rx="3.8" ry="2.8" fill="#000"/><ellipse cx="28" cy="31" rx="3.2" ry="2.8" fill="#000"/><ellipse cx="28" cy="40" rx="3.8" ry="2" fill="#000"/><ellipse cx="28" cy="50" rx="7" ry="2.6" fill="#000"/></svg></div>
<div class="cell" style="left:650px;top:369px"><svg width="56" height="56"><path d="M21 6 L36 6 L34 48 L24 48 Z" fill="#333" filter="url(#b1_5)"/><path d="M24 8 L26 46 M30 8 L31 46" stroke="#888" stroke-width="1.2" filter="url(#b0_6)"/></svg></div>
<div class="cell" style="left:708px;top:369px"><svg width="56" height="56"><circle cx="14.0" cy="28.3" r="2.30" fill="#111" opacity="0.85"/><circle cx="23.8" cy="33.6" r="2.11" fill="#111" opacity="0.85"/><circle cx="17.7" cy="28.6" r="1.65" fill="#111" opacity="0.85"/><circle cx="24.8" cy="31.7" r="2.01" fill="#111" opacity="0.85"/><circle cx="41.2" cy="21.4" r="2.02" fill="#111" opacity="0.85"/><circle cx="21.9" cy="34.4" r="1.23" fill="#111" opacity="0.85"/><circle cx="26.8" cy="22.2" r="1.47" fill="#111" opacity="0.85"/><circle cx="38.0" cy="27.2" r="2.57" fill="#111" opacity="0.85"/><circle cx="14.3" cy="20.0" r="2.00" fill="#111" opacity="0.85"/><circle cx="35.5" cy="38.0" r="1.41" fill="#111" opacity="0.85"/><circle cx="23.1" cy="30.0" r="1.09" fill="#111" opacity="0.85"/><circle cx="26.8" cy="28.9" r="1.62" fill="#111" opacity="0.85"/><circle cx="51.3" cy="7.6" r="1.68" fill="#111" opacity="0.85"/><circle cx="35.9" cy="32.0" r="1.10" fill="#111" opacity="0.85"/><circle cx="31.1" cy="37.6" r="1.99" fill="#111" opacity="0.85"/><circle cx="40.5" cy="29.6" r="1.68" fill="#111" opacity="0.85"/><circle cx="23.3" cy="30.3" r="1.63" fill="#111" opacity="0.85"/><circle cx="41.4" cy="34.4" r="2.04" fill="#111" opacity="0.85"/><circle cx="20.2" cy="22.8" r="2.53" fill="#111" opacity="0.85"/><circle cx="23.0" cy="31.5" r="1.60" fill="#111" opacity="0.85"/><circle cx="33.5" cy="25.9" r="2.22" fill="#111" opacity="0.85"/><circle cx="47.9" cy="22.8" r="1.74" fill="#111" opacity="0.85"/><circle cx="6.8" cy="32.4" r="2.14" fill="#111" opacity="0.85"/><circle cx="30.4" cy="23.9" r="1.97" fill="#111" opacity="0.85"/><circle cx="27.4" cy="22.9" r="1.33" fill="#111" opacity="0.85"/><circle cx="35.7" cy="20.4" r="1.66" fill="#111" opacity="0.85"/><circle cx="19.5" cy="28.5" r="1.40" fill="#111" opacity="0.85"/><circle cx="36.7" cy="32.4" r="1.23" fill="#111" opacity="0.85"/><circle cx="49.9" cy="17.4" r="1.95" fill="#111" opacity="0.85"/><circle cx="40.5" cy="33.1" r="1.25" fill="#111" opacity="0.85"/><circle cx="24.0" cy="30.6" r="1.80" fill="#111" opacity="0.85"/><circle cx="35.9" cy="30.6" r="1.37" fill="#111" opacity="0.85"/><circle cx="3.2" cy="31.4" r="1.93" fill="#111" opacity="0.85"/><circle cx="31.6" cy="17.0" r="1.85" fill="#111" opacity="0.85"/><circle cx="31.5" cy="29.0" r="1.22" fill="#111" opacity="0.85"/><circle cx="18.0" cy="27.3" r="2.49" fill="#111" opacity="0.85"/><circle cx="29.8" cy="31.5" r="2.03" fill="#111" opacity="0.85"/><circle cx="25.2" cy="26.6" r="1.55" fill="#111" opacity="0.85"/><circle cx="8.8" cy="32.5" r="2.25" fill="#111" opacity="0.85"/><circle cx="37.5" cy="21.8" r="2.50" fill="#111" opacity="0.85"/><circle cx="19.1" cy="29.1" r="1.22" fill="#111" opacity="0.85"/><circle cx="35.9" cy="19.2" r="1.99" fill="#111" opacity="0.85"/><circle cx="43.4" cy="26.6" r="1.50" fill="#111" opacity="0.85"/><circle cx="19.5" cy="13.0" r="1.29" fill="#111" opacity="0.85"/><circle cx="38.7" cy="25.5" r="1.18" fill="#111" opacity="0.85"/><circle cx="8.9" cy="27.4" r="1.79" fill="#111" opacity="0.85"/><circle cx="25.7" cy="39.9" r="1.16" fill="#111" opacity="0.85"/><circle cx="23.0" cy="22.2" r="1.98" fill="#111" opacity="0.85"/><circle cx="19.1" cy="27.8" r="1.33" fill="#111" opacity="0.85"/><circle cx="33.2" cy="21.0" r="1.45" fill="#111" opacity="0.85"/></svg></div>
<div class="cell" style="left:302px;top:427px"><svg width="56" height="56"><rect x="0.00" y="0.00" width="11.20" height="11.20" fill="#c8c8c8"/><rect x="0.00" y="22.40" width="11.20" height="11.20" fill="#c8c8c8"/><rect x="0.00" y="44.80" width="11.20" height="11.20" fill="#c8c8c8"/><rect x="11.20" y="11.20" width="11.20" height="11.20" fill="#c8c8c8"/><rect x="11.20" y="33.60" width="11.20" height="11.20" fill="#c8c8c8"/><rect x="22.40" y="0.00" width="11.20" height="11.20" fill="#c8c8c8"/><rect x="22.40" y="22.40" width="11.20" height="11.20" fill="#c8c8c8"/><rect x="22.40" y="44.80" width="11.20" height="11.20" fill="#c8c8c8"/><rect x="33.60" y="11.20" width="11.20" height="11.20" fill="#c8c8c8"/><rect x="33.60" y="33.60" width="11.20" height="11.20" fill="#c8c8c8"/><rect x="44.80" y="0.00" width="11.20" height="11.20" fill="#c8c8c8"/><rect x="44.80" y="22.40" width="11.20" height="11.20" fill="#c8c8c8"/><rect x="44.80" y="44.80" width="11.20" height="11.20" fill="#c8c8c8"/><path d="M18 8 C18 2, 34 2, 36 8 L37 40 C36 46, 34 50, 28 52 C24 52, 20 48, 18 44 Z" fill="#444"/><path d="M22 6 L23 48 M27 5 L28 50 M32 6 L32 46" stroke="#666" stroke-width="1"/></svg></div>
<div class="cell" style="left:360px;top:427px"><svg width="56" height="56"><path d="M6 26 C10 14, 30 12, 44 14 C50 22, 50 30, 52 32 L40 36 L14 34 Z" fill="#888" opacity="0.85" filter="url(#b0_8)"/><path d="M10 22 C20 16, 40 18, 48 26" stroke="#444" stroke-width="1.5" fill="none"/><path d="M32 14 L44 14" stroke="#111" stroke-width="2"/></svg></div>
<div class="cell" style="left:418px;top:427px"><svg width="56" height="56"><path d="M24 2 C36 2, 40 16, 38 28 C32 22, 26 14, 24 2 Z" fill="#777" opacity="0.8" filter="url(#b0_8)"/><path d="M10 34 C20 34, 30 44, 30 54 L16 54 C12 48, 10 40, 10 34 Z" fill="#777" opacity="0.7" filter="url(#b1)"/><path d="M12 34 L22 38" stroke="#111" stroke-width="2.5"/></svg></div>
<div class="cell" style="left:476px;top:427px"><svg width="56" height="56"><rect x="40.4" y="43.5" width="3.8" height="1.9" fill="#111" opacity="0.85" transform="rotate(39 40.4 43.5)"/><rect x="14.8" y="35.2" width="2.3" height="3.1" fill="#111" opacity="0.85" transform="rotate(44 14.8 35.2)"/><rect x="44.4" y="28.3" width="4.0" height="3.1" fill="#111" opacity="0.85" transform="rotate(38 44.4 28.3)"/><rect x="18.6" y="10.9" width="1.1" height="1.9" fill="#111" opacity="0.85" transform="rotate(47 18.6 10.9)"/><rect x="18.5" y="26.1" width="3.1" height="2.0" fill="#111" opacity="0.85" transform="rotate(47 18.5 26.1)"/><rect x="32.4" y="9.8" width="3.1" height="1.4" fill="#111" opacity="0.85" transform="rotate(67 32.4 9.8)"/><rect x="38.6" y="41.4" width="1.0" height="3.0" fill="#111" opacity="0.85" transform="rotate(41 38.6 41.4)"/><rect x="21.7" y="27.1" width="3.1" height="2.4" fill="#111" opacity="0.85" transform="rotate(16 21.7 27.1)"/><rect x="18.2" y="30.2" width="2.9" height="2.2" fill="#111" opacity="0.85" transform="rotate(28 18.2 30.2)"/><rect x="26.7" y="38.6" width="1.6" height="2.2" fill="#111" opacity="0.85" transform="rotate(77 26.7 38.6)"/><rect x="30.6" y="37.6" width="2.9" height="3.3" fill="#111" opacity="0.85" transform="rotate(88 30.6 37.6)"/><rect x="26.3" y="7.6" width="2.4" height="1.4" fill="#111" opacity="0.85" transform="rotate(69 26.3 7.6)"/><rect x="27.1" y="3.0" width="2.6" height="2.4" fill="#111" opacity="0.85" transform="rotate(66 27.1 3.0)"/><rect x="19.3" y="2.9" width="1.3" height="3.2" fill="#111" opacity="0.85" transform="rotate(64 19.3 2.9)"/><rect x="13.8" y="20.6" width="1.2" height="2.0" fill="#111" opacity="0.85" transform="rotate(79 13.8 20.6)"/><rect x="44.7" y="10.6" width="1.5" height="2.0" fill="#111" opacity="0.85" transform="rotate(46 44.7 10.6)"/><rect x="23.0" y="44.4" width="3.1" height="1.5" fill="#111" opacity="0.85" transform="rotate(1 23.0 44.4)"/><rect x="28.8" y="44.2" width="3.6" height="2.5" fill="#111" opacity="0.85" transform="rotate(70 28.8 44.2)"/><rect x="16.5" y="50.8" width="3.6" height="3.1" fill="#111" opacity="0.85" transform="rotate(37 16.5 50.8)"/><rect x="34.4" y="33.4" width="3.0" height="2.0" fill="#111" opacity="0.85" transform="rotate(46 34.4 33.4)"/><rect x="42.6" y="53.1" width="2.8" height="1.4" fill="#111" opacity="0.85" transform="rotate(27 42.6 53.1)"/><rect x="15.9" y="7.2" width="3.9" height="2.3" fill="#111" opacity="0.85" transform="rotate(73 15.9 7.2)"/><rect x="44.5" y="6.0" width="1.2" height="2.0" fill="#111" opacity="0.85" transform="rotate(78 44.5 6.0)"/><rect x="43.3" y="52.8" width="3.4" height="3.4" fill="#111" opacity="0.85" transform="rotate(25 43.3 52.8)"/><rect x="35.6" y="13.7" width="2.7" height="2.2" fill="#111" opacity="0.85" transform="rotate(8 35.6 13.7)"/><rect x="23.6" y="45.0" width="4.0" height="3.3" fill="#111" opacity="0.85" transform="rotate(26 23.6 45.0)"/><rect x="36.9" y="53.9" width="2.9" height="2.2" fill="#111" opacity="0.85" transform="rotate(15 36.9 53.9)"/><rect x="33.3" y="52.8" width="2.9" height="1.6" fill="#111" opacity="0.85" transform="rotate(62 33.3 52.8)"/><rect x="14.1" y="42.7" width="1.9" height="1.4" fill="#111" opacity="0.85" transform="rotate(34 14.1 42.7)"/><rect x="29.7" y="35.8" width="1.6" height="2.0" fill="#111" opacity="0.85" transform="rotate(90 29.7 35.8)"/><rect x="29.4" y="47.7" width="3.9" height="1.9" fill="#111" opacity="0.85" transform="rotate(17 29.4 47.7)"/><rect x="10.4" y="48.9" width="3.4" height="2.4" fill="#111" opacity="0.85" transform="rotate(43 10.4 48.9)"/><rect x="12.8" y="12.9" width="2.6" height="1.1" fill="#111" opacity="0.85" transform="rotate(22 12.8 12.9)"/><rect x="30.5" y="21.6" width="2.6" height="2.2" fill="#111" opacity="0.85" transform="rotate(12 30.5 21.6)"/><rect x="29.0" y="24.0" width="2.4" height="2.7" fill="#111" opacity="0.85" transform="rotate(11 29.0 24.0)"/><rect x="29.8" y="9.3" width="3.5" height="2.8" fill="#111" opacity="0.85" transform="rotate(76 29.8 9.3)"/><rect x="21.8" y="40.7" width="1.5" height="2.3" fill="#111" opacity="0.85" transform="rotate(2 21.8 40.7)"/><rect x="34.6" y="39.8" width="2.6" height="2.5" fill="#111" opacity="0.85" transform="rotate(14 34.6 39.8)"/><rect x="33.0" y="16.1" width="2.3" height="3.2" fill="#111" opacity="0.85" transform="rotate(46 33.0 16.1)"/><rect x="17.6" y="17.4" width="3.8" height="2.6" fill="#111" opacity="0.85" transform="rotate(22 17.6 17.4)"/><rect x="26.5" y="33.9" width="2.1" height="1.9" fill="#111" opacity="0.85" transform="rotate(65 26.5 33.9)"/><rect x="23.7" y="20.7" width="2.1" height="2.1" fill="#111" opacity="0.85" transform="rotate(64 23.7 20.7)"/><rect x="33.0" y="27.0" width="3.9" height="3.1" fill="#111" opacity="0.85" transform="rotate(3 33.0 27.0)"/><rect x="11.4" y="45.9" width="2.6" height="1.8" fill="#111" opacity="0.85" transform="rotate(59 11.4 45.9)"/><rect x="24.7" y="36.6" width="1.0" height="2.0" fill="#111" opacity="0.85" transform="rotate(28 24.7 36.6)"/><rect x="19.8" y="13.2" width="2.3" height="1.2" fill="#111" opacity="0.85" transform="rotate(89 19.8 13.2)"/><rect x="42.0" y="2.7" width="1.1" height="1.7" fill="#111" opacity="0.85" transform="rotate(21 42.0 2.7)"/><rect x="22.7" y="4.4" width="1.6" height="3.4" fill="#111" opacity="0.85" transform="rotate(42 22.7 4.4)"/><rect x="29.7" y="51.6" width="2.6" height="3.5" fill="#111" opacity="0.85" transform="rotate(86 29.7 51.6)"/><rect x="12.4" y="50.1" width="2.0" height="1.0" fill="#111" opacity="0.85" transform="rotate(70 12.4 50.1)"/><rect x="27.9" y="45.7" width="1.6" height="2.2" fill="#111" opacity="0.85" transform="rotate(33 27.9 45.7)"/><rect x="18.8" y="28.6" width="3.3" height="1.4" fill="#111" opacity="0.85" transform="rotate(1 18.8 28.6)"/><rect x="45.2" y="3.1" width="1.3" height="1.7" fill="#111" opacity="0.85" transform="rotate(19 45.2 3.1)"/><rect x="32.2" y="26.5" width="1.0" height="1.5" fill="#111" opacity="0.85" transform="rotate(86 32.2 26.5)"/><rect x="42.9" y="28.8" width="1.5" height="2.3" fill="#111" opacity="0.85" transform="rotate(17 42.9 28.8)"/><rect x="13.3" y="12.1" width="3.0" height="2.7" fill="#111" opacity="0.85" transform="rotate(68 13.3 12.1)"/><rect x="44.8" y="37.8" width="3.0" height="1.6" fill="#111" opacity="0.85" transform="rotate(68 44.8 37.8)"/><rect x="11.5" y="3.3" width="2.4" height="3.5" fill="#111" opacity="0.85" transform="rotate(85 11.5 3.3)"/><rect x="30.9" y="53.4" width="2.0" height="1.0" fill="#111" opacity="0.85" transform="rotate(13 30.9 53.4)"/><rect x="18.1" y="2.8" width="2.4" height="3.4" fill="#111" opacity="0.85" transform="rotate(69 18.1 2.8)"/><rect x="21.1" y="41.6" width="2.2" height="3.0" fill="#111" opacity="0.85" transform="rotate(46 21.1 41.6)"/><rect x="27.8" y="32.8" width="2.9" height="1.3" fill="#111" opacity="0.85" transform="rotate(8 27.8 32.8)"/><rect x="43.4" y="40.3" width="1.8" height="3.0" fill="#111" opacity="0.85" transform="rotate(23 43.4 40.3)"/><rect x="26.0" y="29.1" width="4.0" height="1.5" fill="#111" opacity="0.85" transform="rotate(64 26.0 29.1)"/><rect x="27.1" y="50.2" width="3.5" height="2.9" fill="#111" opacity="0.85" transform="rotate(80 27.1 50.2)"/><rect x="24.9" y="50.8" width="1.7" height="3.4" fill="#111" opacity="0.85" transform="rotate(19 24.9 50.8)"/><rect x="12.5" y="43.4" width="1.1" height="2.3" fill="#111" opacity="0.85" transform="rotate(18 12.5 43.4)"/><rect x="12.7" y="9.4" width="4.0" height="2.0" fill="#111" opacity="0.85" transform="rotate(65 12.7 9.4)"/><rect x="36.7" y="7.3" width="3.4" height="1.5" fill="#111" opacity="0.85" transform="rotate(74 36.7 7.3)"/><rect x="34.6" y="34.2" width="2.1" height="2.5" fill="#111" opacity="0.85" transform="rotate(2 34.6 34.2)"/><rect x="42.8" y="6.0" width="3.5" height="2.6" fill="#111" opacity="0.85" transform="rotate(31 42.8 6.0)"/><rect x="21.7" y="9.9" width="1.8" height="2.7" fill="#111" opacity="0.85" transform="rotate(15 21.7 9.9)"/><rect x="12.6" y="51.1" width="3.2" height="2.8" fill="#111" opacity="0.85" transform="rotate(18 12.6 51.1)"/><rect x="20.1" y="38.2" width="1.5" height="1.1" fill="#111" opacity="0.85" transform="rotate(38 20.1 38.2)"/><rect x="41.0" y="18.2" width="3.7" height="1.0" fill="#111" opacity="0.85" transform="rotate(30 41.0 18.2)"/><rect x="26.2" y="17.9" width="2.5" height="1.1" fill="#111" opacity="0.85" transform="rotate(34 26.2 17.9)"/><rect x="23.3" y="41.7" width="3.5" height="2.2" fill="#111" opacity="0.85" transform="rotate(56 23.3 41.7)"/><rect x="38.8" y="22.4" width="2.9" height="1.4" fill="#111" opacity="0.85" transform="rotate(53 38.8 22.4)"/><rect x="39.3" y="41.7" width="4.0" height="1.0" fill="#111" opacity="0.85" transform="rotate(76 39.3 41.7)"/><rect x="15.2" y="18.4" width="2.4" height="2.8" fill="#111" opacity="0.85" transform="rotate(45 15.2 18.4)"/><rect x="19.8" y="29.2" width="2.3" height="2.6" fill="#111" opacity="0.85" transform="rotate(47 19.8 29.2)"/><rect x="28.2" y="39.0" width="3.8" height="3.5" fill="#111" opacity="0.85" transform="rotate(7 28.2 39.0)"/><rect x="15.2" y="12.7" width="2.5" height="2.7" fill="#111" opacity="0.85" transform="rotate(44 15.2 12.7)"/><rect x="27.9" y="30.0" width="3.0" height="1.3" fill="#111" opacity="0.85" transform="rotate(44 27.9 30.0)"/><rect x="36.3" y="33.0" width="3.4" height="3.4" fill="#111" opacity="0.85" transform="rotate(5 36.3 33.0)"/><rect x="17.2" y="5.2" width="2.0" height="1.4" fill="#111" opacity="0.85" transform="rotate(71 17.2 5.2)"/><rect x="38.5" y="40.4" width="1.4" height="3.2" fill="#111" opacity="0.85" transform="rotate(47 38.5 40.4)"/><rect x="15.3" y="48.4" width="2.6" height="3.1" fill="#111" opacity="0.85" transform="rotate(15 15.3 48.4)"/><rect x="24.3" y="39.7" width="3.9" height="2.5" fill="#111" opacity="0.85" transform="rotate(73 24.3 39.7)"/><rect x="12.9" y="8.3" width="3.6" height="1.1" fill="#111" opacity="0.85" transform="rotate(67 12.9 8.3)"/><rect x="17.3" y="3.3" width="3.4" height="1.2" fill="#111" opacity="0.85" transform="rotate(15 17.3 3.3)"/><rect x="13.0" y="30.5" width="1.4" height="1.3" fill="#111" opacity="0.85" transform="rotate(73 13.0 30.5)"/><rect x="25.2" y="5.8" width="3.9" height="1.7" fill="#111" opacity="0.85" transform="rotate(66 25.2 5.8)"/><rect x="42.8" y="50.0" width="1.2" height="1.9" fill="#111" opacity="0.85" transform="rotate(2 42.8 50.0)"/><rect x="29.7" y="8.5" width="3.8" height="2.0" fill="#111" opacity="0.85" transform="rotate(28 29.7 8.5)"/><rect x="37.4" y="53.7" width="1.5" height="2.7" fill="#111" opacity="0.85" transform="rotate(80 37.4 53.7)"/><rect x="23.3" y="23.0" width="3.7" height="1.2" fill="#111" opacity="0.85" transform="rotate(86 23.3 23.0)"/><rect x="17.0" y="7.3" width="2.4" height="1.2" fill="#111" opacity="0.85" transform="rotate(27 17.0 7.3)"/><rect x="22.8" y="46.3" width="1.5" height="1.8" fill="#111" opacity="0.85" transform="rotate(43 22.8 46.3)"/><rect x="24.5" y="38.8" width="3.3" height="2.3" fill="#111" opacity="0.85" transform="rotate(22 24.5 38.8)"/><rect x="15.2" y="50.9" width="3.3" height="1.4" fill="#111" opacity="0.85" transform="rotate(33 15.2 50.9)"/><rect x="30.9" y="12.0" width="3.4" height="2.8" fill="#111" opacity="0.85" transform="rotate(10 30.9 12.0)"/><rect x="15.3" y="22.9" width="2.6" height="2.5" fill="#111" opacity="0.85" transform="rotate(60 15.3 22.9)"/><rect x="45.2" y="10.6" width="2.5" height="1.8" fill="#111" opacity="0.85" transform="rotate(46 45.2 10.6)"/><rect x="44.6" y="5.3" width="2.3" height="3.0" fill="#111" opacity="0.85" transform="rotate(57 44.6 5.3)"/><rect x="41.6" y="11.0" width="2.4" height="2.1" fill="#111" opacity="0.85" transform="rotate(73 41.6 11.0)"/><rect x="35.6" y="40.2" width="2.0" height="3.3" fill="#111" opacity="0.85" transform="rotate(6 35.6 40.2)"/><rect x="18.9" y="38.3" width="3.6" height="1.2" fill="#111" opacity="0.85" transform="rotate(49 18.9 38.3)"/><rect x="14.7" y="8.8" width="2.6" height="2.2" fill="#111" opacity="0.85" transform="rotate(1 14.7 8.8)"/><rect x="20.1" y="34.8" width="1.5" height="1.1" fill="#111" opacity="0.85" transform="rotate(68 20.1 34.8)"/></svg></div>
<div class="cell" style="left:534px;top:427px"><svg width="56" height="56"><defs><clipPath id="c43"><path d="M6 2 L38 2 L40 12 L36 22 L52 34 L52 46 L38 55 L10 55 L16 42 L4 26 L2 12 Z"/></clipPath></defs><g filter="url(#b0_6)"><g clip-path="url(#c43)"><rect width="56" height="56" fill="#aaa"/><path d="M-30 0 L10 56" stroke="#111" stroke-width="1.3" opacity="0.8"/><path d="M-26 0 L14 56" stroke="#111" stroke-width="1.3" opacity="0.8"/><path d="M-22 0 L18 56" stroke="#111" stroke-width="1.3" opacity="0.8"/><path d="M-18 0 L22 56" stroke="#111" stroke-width="1.3" opacity="0.8"/><path d="M-14 0 L26 56" stroke="#111" stroke-width="1.3" opacity="0.8"/><path d="M-10 0 L30 56" stroke="#111" stroke-width="1.3" opacity="0.8"/><path d="M-6 0 L34 56" stroke="#111" stroke-width="1.3" opacity="0.8"/><path d="M-2 0 L38 56" stroke="#111" stroke-width="1.3" opacity="0.8"/><path d="M2 0 L42 56" stroke="#111" stroke-width="1.3" opacity="0.8"/><path d="M6 0 L46 56" stroke="#111" stroke-width="1.3" opacity="0.8"/><path d="M10 0 L50 56" stroke="#111" stroke-width="1.3" opacity="0.8"/><path d="M14 0 L54 56" stroke="#111" stroke-width="1.3" opacity="0.8"/><path d="M18 0 L58 56" stroke="#111" stroke-width="1.3" opacity="0.8"/><path d="M22 0 L62 56" stroke="#111" stroke-width="1.3" opacity="0.8"/><path d="M26 0 L66 56" stroke="#111" stroke-width="1.3" opacity="0.8"/><path d="M30 0 L70 56" stroke="#111" stroke-width="1.3" opacity="0.8"/><path d="M34 0 L74 56" stroke="#111" stroke-width="1.3" opacity="0.8"/><path d="M38 0 L78 56" stroke="#111" stroke-width="1.3" opacity="0.8"/><path d="M42 0 L82 56" stroke="#111" stroke-width="1.3" opacity="0.8"/><path d="M46 0 L86 56" stroke="#111" stroke-width="1.3" opacity="0.8"/><path d="M50 0 L90 56" stroke="#111" stroke-width="1.3" opacity="0.8"/><path d="M54 0 L94 56" stroke="#111" stroke-width="1.3" opacity="0.8"/><circle cx="15.1" cy="40.6" r="1.52" fill="#ccc" opacity="0.6"/><circle cx="30.7" cy="23.3" r="0.98" fill="#ccc" opacity="0.6"/><circle cx="35.2" cy="0.9" r="1.32" fill="#ccc" opacity="0.6"/><circle cx="31.2" cy="5.9" r="1.35" fill="#ccc" opacity="0.6"/><circle cx="39.8" cy="35.6" r="1.04" fill="#ccc" opacity="0.6"/><circle cx="28.6" cy="50.7" r="0.88" fill="#ccc" opacity="0.6"/><circle cx="40.4" cy="39.7" r="1.40" fill="#ccc" opacity="0.6"/><circle cx="3.0" cy="36.0" r="1.80" fill="#ccc" opacity="0.6"/><circle cx="34.0" cy="5.8" r="1.44" fill="#ccc" opacity="0.6"/><circle cx="50.7" cy="25.3" r="1.45" fill="#ccc" opacity="0.6"/><circle cx="7.2" cy="24.2" r="1.47" fill="#ccc" opacity="0.6"/><circle cx="30.0" cy="30.7" r="0.84" fill="#ccc" opacity="0.6"/><circle cx="26.0" cy="32.7" r="1.58" fill="#ccc" opacity="0.6"/><circle cx="2.4" cy="53.8" r="1.47" fill="#ccc" opacity="0.6"/><circle cx="26.1" cy="33.5" r="1.04" fill="#ccc" opacity="0.6"/><circle cx="11.7" cy="41.8" r="1.38" fill="#ccc" opacity="0.6"/><circle cx="29.1" cy="50.9" r="1.08" fill="#ccc" opacity="0.6"/><circle cx="27.5" cy="34.5" r="1.17" fill="#ccc" opacity="0.6"/><circle cx="49.2" cy="34.4" r="1.06" fill="#ccc" opacity="0.6"/><circle cx="54.5" cy="34.2" r="0.85" fill="#ccc" opacity="0.6"/><circle cx="38.5" cy="24.4" r="1.63" fill="#ccc" opacity="0.6"/><circle cx="26.9" cy="2.3" r="1.44" fill="#ccc" opacity="0.6"/><circle cx="40.2" cy="9.5" r="1.31" fill="#ccc" opacity="0.6"/><circle cx="10.0" cy="45.3" r="1.48" fill="#ccc" opacity="0.6"/><circle cx="13.9" cy="49.8" r="1.79" fill="#ccc" opacity="0.6"/><circle cx="10.4" cy="17.6" r="1.44" fill="#ccc" opacity="0.6"/><circle cx="7.8" cy="6.7" r="1.08" fill="#ccc" opacity="0.6"/><circle cx="33.6" cy="42.0" r="1.19" fill="#ccc" opacity="0.6"/><circle cx="35.8" cy="53.6" r="1.29" fill="#ccc" opacity="0.6"/><circle cx="0.5" cy="0.7" r="1.45" fill="#ccc" opacity="0.6"/><circle cx="5.1" cy="47.3" r="1.69" fill="#ccc" opacity="0.6"/><circle cx="24.6" cy="54.6" r="1.27" fill="#ccc" opacity="0.6"/><circle cx="30.4" cy="15.2" r="1.66" fill="#ccc" opacity="0.6"/><circle cx="4.0" cy="42.5" r="0.88" fill="#ccc" opacity="0.6"/><circle cx="48.8" cy="30.3" r="0.89" fill="#ccc" opacity="0.6"/><circle cx="2.2" cy="11.6" r="0.82" fill="#ccc" opacity="0.6"/><circle cx="46.2" cy="17.8" r="1.41" fill="#ccc" opacity="0.6"/><circle cx="15.7" cy="19.0" r="1.22" fill="#ccc" opacity="0.6"/><circle cx="22.4" cy="9.3" r="1.07" fill="#ccc" opacity="0.6"/><circle cx="3.2" cy="14.1" r="1.00" fill="#ccc" opacity="0.6"/></g></g></svg></div>
<div class="cell" style="left:592px;top:427px"><svg width="56" height="56"><circle cx="17.0" cy="25.6" r="1.29" fill="#111" opacity="0.85"/><circle cx="13.8" cy="37.4" r="0.66" fill="#111" opacity="0.85"/><circle cx="11.9" cy="30.7" r="1.37" fill="#111" opacity="0.85"/><circle cx="34.9" cy="21.9" r="0.97" fill="#111" opacity="0.85"/><circle cx="26.2" cy="30.5" r="0.52" fill="#111" opacity="0.85"/><circle cx="19.6" cy="25.3" r="1.33" fill="#111" opacity="0.85"/><circle cx="59.4" cy="18.9" r="1.65" fill="#111" opacity="0.85"/><circle cx="23.2" cy="33.7" r="1.84" fill="#111" opacity="0.85"/><circle cx="29.9" cy="42.7" r="0.79" fill="#111" opacity="0.85"/><circle cx="15.9" cy="29.7" r="1.94" fill="#111" opacity="0.85"/><circle cx="25.8" cy="8.9" r="0.96" fill="#111" opacity="0.85"/><circle cx="16.2" cy="40.8" r="1.34" fill="#111" opacity="0.85"/><circle cx="27.1" cy="22.0" r="0.50" fill="#111" opacity="0.85"/><circle cx="20.3" cy="29.4" r="0.83" fill="#111" opacity="0.85"/><circle cx="37.0" cy="7.5" r="0.76" fill="#111" opacity="0.85"/><circle cx="33.2" cy="29.4" r="0.69" fill="#111" opacity="0.85"/><circle cx="26.4" cy="17.3" r="1.97" fill="#111" opacity="0.85"/><circle cx="40.3" cy="27.3" r="0.61" fill="#111" opacity="0.85"/><circle cx="33.7" cy="18.8" r="0.79" fill="#111" opacity="0.85"/><circle cx="10.4" cy="16.9" r="0.42" fill="#111" opacity="0.85"/><circle cx="30.7" cy="45.3" r="1.07" fill="#111" opacity="0.85"/><circle cx="47.0" cy="37.8" r="1.92" fill="#111" opacity="0.85"/><circle cx="22.1" cy="28.6" r="0.44" fill="#111" opacity="0.85"/><circle cx="27.2" cy="10.6" r="1.58" fill="#111" opacity="0.85"/><circle cx="24.6" cy="18.2" r="0.86" fill="#111" opacity="0.85"/><circle cx="12.2" cy="18.8" r="1.15" fill="#111" opacity="0.85"/><circle cx="18.1" cy="25.1" r="1.72" fill="#111" opacity="0.85"/><circle cx="35.7" cy="24.1" r="1.94" fill="#111" opacity="0.85"/><circle cx="31.9" cy="17.5" r="0.81" fill="#111" opacity="0.85"/><circle cx="23.0" cy="15.7" r="1.35" fill="#111" opacity="0.85"/><circle cx="56.1" cy="25.0" r="1.53" fill="#111" opacity="0.85"/><circle cx="22.0" cy="25.4" r="0.52" fill="#111" opacity="0.85"/><circle cx="31.3" cy="19.8" r="1.49" fill="#111" opacity="0.85"/><circle cx="25.7" cy="31.9" r="1.49" fill="#111" opacity="0.85"/><circle cx="29.8" cy="29.0" r="1.99" fill="#111" opacity="0.85"/><circle cx="20.4" cy="31.0" r="1.66" fill="#111" opacity="0.85"/><circle cx="32.3" cy="41.5" r="0.77" fill="#111" opacity="0.85"/><circle cx="25.6" cy="11.1" r="0.57" fill="#111" opacity="0.85"/><circle cx="13.6" cy="37.7" r="1.19" fill="#111" opacity="0.85"/><circle cx="24.6" cy="27.4" r="0.65" fill="#111" opacity="0.85"/><circle cx="56.4" cy="17.1" r="1.23" fill="#111" opacity="0.85"/><circle cx="25.2" cy="21.9" r="1.91" fill="#111" opacity="0.85"/><circle cx="16.8" cy="15.5" r="1.77" fill="#111" opacity="0.85"/><circle cx="29.0" cy="39.9" r="1.15" fill="#111" opacity="0.85"/><circle cx="26.0" cy="31.2" r="1.55" fill="#111" opacity="0.85"/><circle cx="30.3" cy="31.0" r="1.01" fill="#111" opacity="0.85"/><circle cx="18.3" cy="30.2" r="0.76" fill="#111" opacity="0.85"/><circle cx="32.5" cy="25.4" r="1.67" fill="#111" opacity="0.85"/><circle cx="28.3" cy="16.0" r="0.88" fill="#111" opacity="0.85"/><circle cx="37.1" cy="13.5" r="0.80" fill="#111" opacity="0.85"/><circle cx="38.3" cy="17.1" r="0.68" fill="#111" opacity="0.85"/><circle cx="37.2" cy="23.7" r="0.64" fill="#111" opacity="0.85"/><circle cx="44.1" cy="22.0" r="1.14" fill="#111" opacity="0.85"/><circle cx="16.7" cy="22.6" r="1.21" fill="#111" opacity="0.85"/><circle cx="40.3" cy="32.6" r="0.97" fill="#111" opacity="0.85"/></svg></div>
<div class="cell" style="left:650px;top:427px"><svg width="56" height="56"><path d="M4 10 L14 8 L22 4 L26 8 L40 6 L48 10 L42 22 L46 34 L40 44 L44 52 L24 54 L14 50 L18 40 L14 28 L8 16 Z" fill="#000"/></svg></div>
<div class="cell" style="left:708px;top:427px"><svg width="56" height="56"><path d="M28 3 C40 6, 46 18, 46 28 C46 40, 40 52, 28 54 C16 52, 10 40, 10 28 C10 18, 16 6, 28 3 Z" fill="#1a1a1a"/><circle cx="31.2" cy="31.4" r="1.56" fill="#eee" opacity="0.85"/><circle cx="35.7" cy="50.8" r="1.78" fill="#eee" opacity="0.85"/><circle cx="27.7" cy="15.7" r="1.76" fill="#eee" opacity="0.85"/><circle cx="28.3" cy="42.9" r="1.12" fill="#eee" opacity="0.85"/><circle cx="12.6" cy="29.7" r="0.90" fill="#eee" opacity="0.85"/><circle cx="28.3" cy="9.2" r="0.72" fill="#eee" opacity="0.85"/><circle cx="34.5" cy="27.4" r="1.36" fill="#eee" opacity="0.85"/><circle cx="25.5" cy="41.3" r="1.94" fill="#eee" opacity="0.85"/><circle cx="22.3" cy="42.5" r="1.70" fill="#eee" opacity="0.85"/><circle cx="34.2" cy="15.6" r="1.20" fill="#eee" opacity="0.85"/><circle cx="24.9" cy="37.2" r="1.12" fill="#eee" opacity="0.85"/><circle cx="36.5" cy="14.4" r="0.90" fill="#eee" opacity="0.85"/><circle cx="27.8" cy="31.3" r="1.90" fill="#eee" opacity="0.85"/><circle cx="33.6" cy="32.0" r="0.86" fill="#eee" opacity="0.85"/><circle cx="32.7" cy="52.7" r="1.21" fill="#eee" opacity="0.85"/><circle cx="20.5" cy="12.6" r="1.33" fill="#eee" opacity="0.85"/><circle cx="32.4" cy="10.9" r="1.45" fill="#eee" opacity="0.85"/><circle cx="16.5" cy="19.1" r="1.55" fill="#eee" opacity="0.85"/><circle cx="21.0" cy="47.7" r="1.75" fill="#eee" opacity="0.85"/><circle cx="36.5" cy="23.1" r="1.22" fill="#eee" opacity="0.85"/><circle cx="22.9" cy="40.3" r="0.85" fill="#eee" opacity="0.85"/><circle cx="26.8" cy="10.9" r="1.83" fill="#eee" opacity="0.85"/><circle cx="29.6" cy="42.2" r="1.37" fill="#eee" opacity="0.85"/><circle cx="23.0" cy="21.5" r="0.61" fill="#eee" opacity="0.85"/><circle cx="39.6" cy="17.4" r="0.82" fill="#eee" opacity="0.85"/><circle cx="34.9" cy="20.3" r="0.61" fill="#eee" opacity="0.85"/><circle cx="24.7" cy="21.0" r="1.12" fill="#eee" opacity="0.85"/><circle cx="36.9" cy="40.8" r="1.51" fill="#eee" opacity="0.85"/><circle cx="28.9" cy="42.2" r="1.19" fill="#eee" opacity="0.85"/><circle cx="32.1" cy="27.2" r="1.56" fill="#eee" opacity="0.85"/><circle cx="31.8" cy="6.0" r="0.98" fill="#eee" opacity="0.85"/><circle cx="30.5" cy="22.9" r="0.81" fill="#eee" opacity="0.85"/><circle cx="18.4" cy="12.1" r="1.18" fill="#eee" opacity="0.85"/><circle cx="29.2" cy="32.5" r="1.18" fill="#eee" opacity="0.85"/><circle cx="33.7" cy="16.6" r="1.28" fill="#eee" opacity="0.85"/><circle cx="24.0" cy="26.8" r="0.93" fill="#eee" opacity="0.85"/><circle cx="27.1" cy="45.8" r="1.52" fill="#eee" opacity="0.85"/><circle cx="35.3" cy="32.5" r="1.94" fill="#eee" opacity="0.85"/><circle cx="31.2" cy="30.9" r="1.96" fill="#eee" opacity="0.85"/><circle cx="15.2" cy="25.0" r="1.77" fill="#eee" opacity="0.85"/><circle cx="10.0" cy="34.4" r="0.97" fill="#eee" opacity="0.85"/><circle cx="26.5" cy="35.3" r="1.66" fill="#eee" opacity="0.85"/><circle cx="33.2" cy="35.2" r="1.68" fill="#eee" opacity="0.85"/><circle cx="26.9" cy="18.7" r="0.82" fill="#eee" opacity="0.85"/><circle cx="33.1" cy="8.9" r="1.50" fill="#eee" opacity="0.85"/><circle cx="25.7" cy="25.1" r="1.08" fill="#eee" opacity="0.85"/><circle cx="26.7" cy="40.8" r="0.99" fill="#eee" opacity="0.85"/><circle cx="22.8" cy="20.1" r="1.96" fill="#eee" opacity="0.85"/><circle cx="27.9" cy="31.1" r="0.80" fill="#eee" opacity="0.85"/><circle cx="31.3" cy="43.6" r="1.37" fill="#eee" opacity="0.85"/><circle cx="19.2" cy="19.8" r="1.58" fill="#eee" opacity="0.85"/><circle cx="29.3" cy="34.7" r="1.83" fill="#eee" opacity="0.85"/><circle cx="27.2" cy="17.0" r="1.58" fill="#eee" opacity="0.85"/><circle cx="27.2" cy="23.6" r="1.22" fill="#eee" opacity="0.85"/><circle cx="29.5" cy="7.5" r="1.56" fill="#eee" opacity="0.85"/><circle cx="22.1" cy="47.3" r="1.37" fill="#eee" opacity="0.85"/><circle cx="43.0" cy="27.3" r="1.86" fill="#eee" opacity="0.85"/><circle cx="32.8" cy="53.2" r="0.97" fill="#eee" opacity="0.85"/><circle cx="29.8" cy="41.0" r="1.54" fill="#eee" opacity="0.85"/><circle cx="25.6" cy="57.3" r="0.70" fill="#eee" opacity="0.85"/><circle cx="32.5" cy="12.5" r="1.69" fill="#eee" opacity="0.85"/><circle cx="15.6" cy="34.7" r="1.05" fill="#eee" opacity="0.85"/><circle cx="16.9" cy="29.9" r="1.82" fill="#eee" opacity="0.85"/><circle cx="35.6" cy="33.4" r="1.85" fill="#eee" opacity="0.85"/><circle cx="26.5" cy="33.6" r="1.44" fill="#eee" opacity="0.85"/><circle cx="30.0" cy="21.3" r="1.69" fill="#eee" opacity="0.85"/><circle cx="37.7" cy="54.1" r="0.74" fill="#eee" opacity="0.85"/><circle cx="35.4" cy="43.6" r="1.16" fill="#eee" opacity="0.85"/><circle cx="32.3" cy="31.7" r="1.83" fill="#eee" opacity="0.85"/><circle cx="31.2" cy="20.2" r="0.65" fill="#eee" opacity="0.85"/><circle cx="26.9" cy="22.7" r="1.60" fill="#eee" opacity="0.85"/><circle cx="15.2" cy="26.0" r="0.70" fill="#eee" opacity="0.85"/><circle cx="29.8" cy="25.4" r="1.45" fill="#eee" opacity="0.85"/><circle cx="23.3" cy="38.9" r="0.94" fill="#eee" opacity="0.85"/><circle cx="34.8" cy="23.6" r="1.52" fill="#eee" opacity="0.85"/><circle cx="17.8" cy="31.0" r="1.81" fill="#eee" opacity="0.85"/><circle cx="41.4" cy="42.3" r="0.99" fill="#eee" opacity="0.85"/><circle cx="25.1" cy="23.2" r="1.08" fill="#eee" opacity="0.85"/><circle cx="37.2" cy="13.1" r="1.88" fill="#eee" opacity="0.85"/><circle cx="23.5" cy="19.1" r="1.25" fill="#eee" opacity="0.85"/></svg></div>
<div class="cell" style="left:302px;top:485px"><svg width="56" height="56"><ellipse cx="34" cy="44" rx="14" ry="8" fill="#999" opacity="0.5" filter="url(#b3)"/><path d="M14 42 L20 38 L24 41 L26 46 L21 50 L16 48 Z" fill="#000"/><circle cx="20.3" cy="42.4" r="1.37" fill="#111" opacity="0.8"/><circle cx="36.0" cy="41.4" r="1.06" fill="#111" opacity="0.8"/><circle cx="27.6" cy="47.5" r="0.69" fill="#111" opacity="0.8"/><circle cx="23.6" cy="40.8" r="1.37" fill="#111" opacity="0.8"/><circle cx="31.9" cy="45.4" r="0.49" fill="#111" opacity="0.8"/><circle cx="27.2" cy="39.3" r="0.87" fill="#111" opacity="0.8"/><circle cx="19.5" cy="50.3" r="0.80" fill="#111" opacity="0.8"/><circle cx="28.7" cy="49.1" r="0.70" fill="#111" opacity="0.8"/><circle cx="40.3" cy="50.0" r="1.08" fill="#111" opacity="0.8"/><circle cx="15.4" cy="35.1" r="0.79" fill="#111" opacity="0.8"/><circle cx="18.4" cy="47.6" r="0.80" fill="#111" opacity="0.8"/><circle cx="25.4" cy="43.5" r="0.86" fill="#111" opacity="0.8"/><circle cx="17.0" cy="43.0" r="0.42" fill="#111" opacity="0.8"/><circle cx="25.6" cy="43.3" r="0.96" fill="#111" opacity="0.8"/><circle cx="27.5" cy="45.1" r="0.58" fill="#111" opacity="0.8"/><circle cx="31.2" cy="45.1" r="1.08" fill="#111" opacity="0.8"/><circle cx="24.7" cy="39.3" r="1.05" fill="#111" opacity="0.8"/><circle cx="14.4" cy="44.9" r="1.28" fill="#111" opacity="0.8"/></svg></div>
<div class="cell" style="left:360px;top:485px"><svg width="56" height="56"><path d="M2 36 L6 38" stroke="#555" stroke-width="0.7" opacity="0.8"/><path d="M15 43 L35 49" stroke="#555" stroke-width="0.7" opacity="0.8"/><path d="M28 50 L16 44" stroke="#555" stroke-width="0.7" opacity="0.8"/><path d="M41 39 L45 39" stroke="#555" stroke-width="0.7" opacity="0.8"/><path d="M4 46 L26 50" stroke="#555" stroke-width="0.7" opacity="0.8"/><path d="M17 53 L7 45" stroke="#555" stroke-width="0.7" opacity="0.8"/><path d="M30 42 L36 40" stroke="#555" stroke-width="0.7" opacity="0.8"/><path d="M43 49 L17 51" stroke="#555" stroke-width="0.7" opacity="0.8"/><path d="M6 38 L46 46" stroke="#555" stroke-width="0.7" opacity="0.8"/><path d="M19 45 L27 41" stroke="#555" stroke-width="0.7" opacity="0.8"/><path d="M32 52 L8 52" stroke="#555" stroke-width="0.7" opacity="0.8"/><path d="M45 41 L37 47" stroke="#555" stroke-width="0.7" opacity="0.8"/><path d="M8 48 L18 42" stroke="#555" stroke-width="0.7" opacity="0.8"/><path d="M21 37 L47 53" stroke="#555" stroke-width="0.7" opacity="0.8"/><path d="M34 44 L28 48" stroke="#555" stroke-width="0.7" opacity="0.8"/><path d="M47 51 L9 43" stroke="#555" stroke-width="0.7" opacity="0.8"/><path d="M10 40 L38 38" stroke="#555" stroke-width="0.7" opacity="0.8"/><path d="M23 47 L19 49" stroke="#555" stroke-width="0.7" opacity="0.8"/><path d="M36 36 L48 44" stroke="#555" stroke-width="0.7" opacity="0.8"/><path d="M49 43 L29 39" stroke="#555" stroke-width="0.7" opacity="0.8"/><path d="M12 50 L10 50" stroke="#555" stroke-width="0.7" opacity="0.8"/><path d="M25 39 L39 45" stroke="#555" stroke-width="0.7" opacity="0.8"/><path d="M38 46 L20 40" stroke="#555" stroke-width="0.7" opacity="0.8"/><path d="M51 53 L49 51" stroke="#555" stroke-width="0.7" opacity="0.8"/><path d="M14 42 L30 46" stroke="#555" stroke-width="0.7" opacity="0.8"/><path d="M27 49 L11 41" stroke="#555" stroke-width="0.7" opacity="0.8"/><path d="M40 38 L40 52" stroke="#555" stroke-width="0.7" opacity="0.8"/><path d="M3 45 L21 47" stroke="#555" stroke-width="0.7" opacity="0.8"/><path d="M16 52 L50 42" stroke="#555" stroke-width="0.7" opacity="0.8"/><path d="M29 41 L31 53" stroke="#555" stroke-width="0.7" opacity="0.8"/><path d="M42 48 L12 48" stroke="#555" stroke-width="0.7" opacity="0.8"/><path d="M5 37 L41 43" stroke="#555" stroke-width="0.7" opacity="0.8"/><path d="M18 44 L22 38" stroke="#555" stroke-width="0.7" opacity="0.8"/><path d="M31 51 L51 49" stroke="#555" stroke-width="0.7" opacity="0.8"/><path d="M44 40 L32 44" stroke="#555" stroke-width="0.7" opacity="0.8"/><path d="M7 47 L13 39" stroke="#555" stroke-width="0.7" opacity="0.8"/><path d="M20 36 L42 50" stroke="#555" stroke-width="0.7" opacity="0.8"/><path d="M33 43 L23 45" stroke="#555" stroke-width="0.7" opacity="0.8"/><path d="M46 50 L52 40" stroke="#555" stroke-width="0.7" opacity="0.8"/><path d="M9 39 L33 51" stroke="#555" stroke-width="0.7" opacity="0.8"/></svg></div>
<div class="cell" style="left:418px;top:485px"><svg width="56" height="56"></svg></div>
<div class="cell" style="left:476px;top:485px"><svg width="56" height="56"></svg></div>
<div class="cell" style="left:534px;top:485px"><svg width="56" height="56"><rect x="0" y="0" width="56" height="56" fill="#999" opacity="0.3"/><ellipse cx="47.3" cy="44.7" rx="4.8" ry="2.0" fill="none" stroke="#111" stroke-width="1.3" opacity="0.85"/><ellipse cx="7.5" cy="35.8" rx="3.6" ry="2.8" fill="none" stroke="#111" stroke-width="1.3" opacity="0.85"/><ellipse cx="53.5" cy="28.3" rx="5.0" ry="2.8" fill="none" stroke="#111" stroke-width="1.3" opacity="0.85"/><ellipse cx="13.3" cy="9.6" rx="2.6" ry="2.0" fill="none" stroke="#111" stroke-width="1.3" opacity="0.85"/><ellipse cx="13.2" cy="25.9" rx="4.3" ry="2.1" fill="none" stroke="#111" stroke-width="1.3" opacity="0.85"/><ellipse cx="34.9" cy="8.4" rx="4.2" ry="1.8" fill="none" stroke="#111" stroke-width="1.3" opacity="0.85"/><ellipse cx="44.4" cy="42.4" rx="2.5" ry="2.7" fill="none" stroke="#111" stroke-width="1.3" opacity="0.85"/><ellipse cx="18.1" cy="27.0" rx="4.3" ry="2.4" fill="none" stroke="#111" stroke-width="1.3" opacity="0.85"/><ellipse cx="12.7" cy="30.3" rx="4.1" ry="2.2" fill="none" stroke="#111" stroke-width="1.3" opacity="0.85"/><ellipse cx="25.9" cy="39.5" rx="3.0" ry="2.2" fill="none" stroke="#111" stroke-width="1.3" opacity="0.85"/><ellipse cx="32.0" cy="38.3" rx="4.1" ry="2.9" fill="none" stroke="#111" stroke-width="1.3" opacity="0.85"/><ellipse cx="25.3" cy="6.1" rx="3.6" ry="1.7" fill="none" stroke="#111" stroke-width="1.3" opacity="0.85"/><ellipse cx="26.6" cy="1.1" rx="3.8" ry="2.3" fill="none" stroke="#111" stroke-width="1.3" opacity="0.85"/><ellipse cx="14.5" cy="0.9" rx="2.7" ry="2.8" fill="none" stroke="#111" stroke-width="1.3" opacity="0.85"/><ellipse cx="6.0" cy="20.1" rx="2.6" ry="2.1" fill="none" stroke="#111" stroke-width="1.3" opacity="0.85"/><ellipse cx="54.1" cy="9.2" rx="2.9" ry="2.1" fill="none" stroke="#111" stroke-width="1.3" opacity="0.85"/><ellipse cx="20.2" cy="45.6" rx="4.2" ry="1.8" fill="none" stroke="#111" stroke-width="1.3" opacity="0.85"/><ellipse cx="29.2" cy="45.5" rx="4.6" ry="2.4" fill="none" stroke="#111" stroke-width="1.3" opacity="0.85"/><ellipse cx="10.2" cy="52.6" rx="4.7" ry="2.8" fill="none" stroke="#111" stroke-width="1.3" opacity="0.85"/><ellipse cx="37.9" cy="33.8" rx="4.2" ry="2.1" fill="none" stroke="#111" stroke-width="1.3" opacity="0.85"/><ellipse cx="50.7" cy="55.0" rx="4.0" ry="1.7" fill="none" stroke="#111" stroke-width="1.3" opacity="0.85"/><ellipse cx="9.2" cy="5.6" rx="5.0" ry="2.3" fill="none" stroke="#111" stroke-width="1.3" opacity="0.85"/><ellipse cx="53.7" cy="4.3" rx="2.6" ry="2.1" fill="none" stroke="#111" stroke-width="1.3" opacity="0.85"/><ellipse cx="51.8" cy="54.7" rx="4.5" ry="2.9" fill="none" stroke="#111" stroke-width="1.3" opacity="0.85"/><ellipse cx="39.9" cy="12.6" rx="3.9" ry="2.2" fill="none" stroke="#111" stroke-width="1.3" opacity="0.85"/><ellipse cx="21.1" cy="46.3" rx="5.0" ry="2.9" fill="none" stroke="#111" stroke-width="1.3" opacity="0.85"/><ellipse cx="41.8" cy="55.9" rx="4.1" ry="2.2" fill="none" stroke="#111" stroke-width="1.3" opacity="0.85"/><ellipse cx="36.3" cy="54.8" rx="4.1" ry="1.8" fill="none" stroke="#111" stroke-width="1.3" opacity="0.85"/><ellipse cx="6.3" cy="43.9" rx="3.3" ry="1.7" fill="none" stroke="#111" stroke-width="1.3" opacity="0.85"/><ellipse cx="30.7" cy="36.4" rx="3.0" ry="2.1" fill="none" stroke="#111" stroke-width="1.3" opacity="0.85"/><ellipse cx="30.2" cy="49.2" rx="4.9" ry="2.0" fill="none" stroke="#111" stroke-width="1.3" opacity="0.85"/><ellipse cx="0.7" cy="50.5" rx="4.5" ry="2.4" fill="none" stroke="#111" stroke-width="1.3" opacity="0.85"/><ellipse cx="4.3" cy="11.7" rx="3.8" ry="1.6" fill="none" stroke="#111" stroke-width="1.3" opacity="0.85"/><ellipse cx="31.9" cy="21.1" rx="3.8" ry="2.2" fill="none" stroke="#111" stroke-width="1.3" opacity="0.85"/><ellipse cx="29.6" cy="23.6" rx="3.7" ry="2.5" fill="none" stroke="#111" stroke-width="1.3" opacity="0.85"/><ellipse cx="30.7" cy="7.9" rx="4.6" ry="2.6" fill="none" stroke="#111" stroke-width="1.3" opacity="0.85"/><ellipse cx="18.4" cy="41.7" rx="2.9" ry="2.3" fill="none" stroke="#111" stroke-width="1.3" opacity="0.85"/><ellipse cx="38.2" cy="40.7" rx="3.8" ry="2.4" fill="none" stroke="#111" stroke-width="1.3" opacity="0.85"/><ellipse cx="35.8" cy="15.2" rx="3.6" ry="2.8" fill="none" stroke="#111" stroke-width="1.3" opacity="0.85"/><ellipse cx="11.8" cy="16.6" rx="4.8" ry="2.4" fill="none" stroke="#111" stroke-width="1.3" opacity="0.85"/><ellipse cx="25.7" cy="34.3" rx="3.4" ry="2.0" fill="none" stroke="#111" stroke-width="1.3" opacity="0.85"/><ellipse cx="21.3" cy="20.1" rx="3.4" ry="2.2" fill="none" stroke="#111" stroke-width="1.3" opacity="0.85"/><ellipse cx="35.8" cy="26.9" rx="4.9" ry="2.8" fill="none" stroke="#111" stroke-width="1.3" opacity="0.85"/><ellipse cx="2.2" cy="47.2" rx="3.9" ry="2.0" fill="none" stroke="#111" stroke-width="1.3" opacity="0.85"/><ellipse cx="22.9" cy="37.3" rx="2.5" ry="2.1" fill="none" stroke="#111" stroke-width="1.3" opacity="0.85"/><ellipse cx="15.2" cy="12.0" rx="3.6" ry="1.6" fill="none" stroke="#111" stroke-width="1.3" opacity="0.85"/><ellipse cx="49.7" cy="0.8" rx="2.6" ry="1.9" fill="none" stroke="#111" stroke-width="1.3" opacity="0.85"/><ellipse cx="19.7" cy="2.5" rx="3.0" ry="3.0" fill="none" stroke="#111" stroke-width="1.3" opacity="0.85"/><ellipse cx="30.7" cy="53.5" rx="3.8" ry="3.0" fill="none" stroke="#111" stroke-width="1.3" opacity="0.85"/><ellipse cx="3.7" cy="51.9" rx="3.3" ry="1.5" fill="none" stroke="#111" stroke-width="1.3" opacity="0.85"/></svg></div>
<div class="cell" style="left:592px;top:485px"><svg width="56" height="56"><g fill="none" stroke="#000" stroke-width="1.8"><path d="M8 20 L16 14 L26 10 L36 8 L46 14 L50 26 L46 38 L36 46 L26 48 L14 42 L8 32 Z" stroke-width="1.2"/><path d="M16 14 L22 26 L36 26 L46 14 M22 26 L14 42 M36 26 L36 46 M22 26 L28 36 L36 26 M8 32 L28 36 L50 26 M26 10 L22 26"/></g><circle cx="13" cy="19" r="3" fill="none" stroke="#000" stroke-width="2"/><circle cx="38" cy="38" r="2.5" fill="none" stroke="#000" stroke-width="1.5"/><circle cx="27.3" cy="29.8" r="0.74" fill="#222" opacity="0.8"/><circle cx="40.7" cy="12.9" r="0.87" fill="#222" opacity="0.8"/><circle cx="18.3" cy="31.7" r="0.37" fill="#222" opacity="0.8"/><circle cx="20.6" cy="24.0" r="0.74" fill="#222" opacity="0.8"/><circle cx="22.6" cy="4.4" r="0.41" fill="#222" opacity="0.8"/><circle cx="42.3" cy="41.4" r="0.32" fill="#222" opacity="0.8"/><circle cx="34.5" cy="9.3" r="0.58" fill="#222" opacity="0.8"/><circle cx="34.1" cy="36.9" r="0.35" fill="#222" opacity="0.8"/><circle cx="31.0" cy="17.4" r="0.87" fill="#222" opacity="0.8"/><circle cx="20.7" cy="35.2" r="0.79" fill="#222" opacity="0.8"/><circle cx="17.5" cy="5.3" r="0.96" fill="#222" opacity="0.8"/><circle cx="33.7" cy="43.6" r="0.95" fill="#222" opacity="0.8"/><circle cx="37.7" cy="20.9" r="0.58" fill="#222" opacity="0.8"/><circle cx="36.7" cy="31.4" r="0.77" fill="#222" opacity="0.8"/><circle cx="27.9" cy="36.6" r="1.07" fill="#222" opacity="0.8"/><circle cx="29.4" cy="47.5" r="0.36" fill="#222" opacity="0.8"/><circle cx="6.9" cy="43.5" r="0.57" fill="#222" opacity="0.8"/><circle cx="21.7" cy="49.3" r="1.18" fill="#222" opacity="0.8"/><circle cx="33.2" cy="27.6" r="0.37" fill="#222" opacity="0.8"/><circle cx="28.2" cy="23.3" r="0.91" fill="#222" opacity="0.8"/></svg></div>
<div class="cell" style="left:650px;top:485px"><svg width="56" height="56"><path d="M10 6.0 L44 3.0" stroke="#333" stroke-width="1.2" opacity="0.85"/><path d="M11 9.8 L39 7.1" stroke="#333" stroke-width="1.7" opacity="0.85"/><path d="M12 13.6 L42 11.2" stroke="#333" stroke-width="2.2" opacity="0.85"/><path d="M13 17.4 L37 15.3" stroke="#333" stroke-width="1.2" opacity="0.85"/><path d="M14 21.2 L40 19.4" stroke="#333" stroke-width="1.7" opacity="0.85"/><path d="M15 25.0 L43 23.5" stroke="#333" stroke-width="2.2" opacity="0.85"/><path d="M10 28.8 L38 27.6" stroke="#333" stroke-width="1.2" opacity="0.85"/><path d="M11 32.6 L41 31.7" stroke="#333" stroke-width="1.7" opacity="0.85"/><path d="M12 36.4 L44 35.8" stroke="#333" stroke-width="2.2" opacity="0.85"/><path d="M13 40.2 L39 39.9" stroke="#333" stroke-width="1.2" opacity="0.85"/><path d="M14 44.0 L42 44.0" stroke="#333" stroke-width="1.7" opacity="0.85"/><path d="M15 47.8 L37 48.1" stroke="#333" stroke-width="2.2" opacity="0.85"/><path d="M10 51.6 L40 52.2" stroke="#333" stroke-width="1.2" opacity="0.85"/></svg></div>
<div class="cell" style="left:708px;top:485px"><svg width="56" height="56"><g fill="none" stroke="#444" stroke-width="0.9"><path d="M6 6 Q14 30 22 52"/><path d="M10 8 Q30 30 40 54"/><path d="M18 6 Q44 20 48 50"/><path d="M14 30 Q30 10 52 20"/><ellipse cx="40" cy="24" rx="8" ry="14"/><path d="M4 10 Q6 36 14 54"/></g></svg></div>
<div class="cell" style="left:302px;top:543px"><svg width="56" height="56"><path d="M36 5 C36 14, 26 22, 22 32 C19 40, 21 46, 25 52" fill="none" stroke="#000" stroke-width="5.5"/><rect x="33" y="2" width="6" height="5" fill="none" stroke="#000" stroke-width="1.5"/><circle cx="35" cy="12" r="0.9" fill="#fff"/><circle cx="31" cy="18" r="0.9" fill="#fff"/><circle cx="27" cy="24" r="0.9" fill="#fff"/><circle cx="24" cy="30" r="0.9" fill="#fff"/><circle cx="22" cy="36" r="0.9" fill="#fff"/><circle cx="21.5" cy="42" r="0.9" fill="#fff"/><circle cx="23" cy="48" r="0.9" fill="#fff"/></svg></div>
<div class="cell" style="left:360px;top:543px"><svg width="56" height="56"><path d="M15 18 L18 15 L22 17 L26 21 L30 20 L33 16 L36 15 L38 22 L40 30 L42 36 L40 42 L36 41 L33 38 L30 42 L26 46 L22 44 L22 36 L18 32 L17 24 Z" fill="#000"/></svg></div>
<div class="cell" style="left:418px;top:543px"><svg width="56" height="56"><path d="M38 6 C30 12, 24 22, 22 36 C20 42, 24 50, 26 52 L30 46 L32 40 L28 34 C28 24, 32 14, 38 6 Z" fill="#000"/></svg></div>
<div class="cell" style="left:476px;top:543px"><svg width="56" height="56"><g filter="url(#b1_5)"><path d="M6 38 C8 30, 16 26, 24 26 C30 22, 36 16, 44 10 C48 14, 46 26, 40 36 C34 48, 18 52, 8 46 Z" fill="#000"/></g><circle cx="47.3" cy="30.9" r="0.62" fill="#333" opacity="0.6"/><circle cx="47.9" cy="16.9" r="0.72" fill="#333" opacity="0.6"/><circle cx="43.6" cy="20.9" r="0.98" fill="#333" opacity="0.6"/><circle cx="22.7" cy="31.1" r="1.07" fill="#333" opacity="0.6"/><circle cx="40.8" cy="11.2" r="0.94" fill="#333" opacity="0.6"/><circle cx="46.5" cy="25.6" r="0.99" fill="#333" opacity="0.6"/><circle cx="36.2" cy="13.0" r="0.48" fill="#333" opacity="0.6"/><circle cx="29.9" cy="32.7" r="0.39" fill="#333" opacity="0.6"/><circle cx="49.3" cy="18.4" r="0.72" fill="#333" opacity="0.6"/><circle cx="39.7" cy="32.0" r="0.63" fill="#333" opacity="0.6"/><circle cx="41.5" cy="31.1" r="0.59" fill="#333" opacity="0.6"/><circle cx="34.2" cy="2.3" r="0.31" fill="#333" opacity="0.6"/><circle cx="48.8" cy="38.9" r="0.31" fill="#333" opacity="0.6"/><circle cx="35.3" cy="36.9" r="0.73" fill="#333" opacity="0.6"/><circle cx="39.4" cy="40.4" r="0.87" fill="#333" opacity="0.6"/><circle cx="51.8" cy="24.5" r="0.60" fill="#333" opacity="0.6"/><circle cx="22.9" cy="24.6" r="0.82" fill="#333" opacity="0.6"/><circle cx="38.0" cy="18.0" r="0.45" fill="#333" opacity="0.6"/><circle cx="37.8" cy="30.1" r="0.93" fill="#333" opacity="0.6"/><circle cx="42.0" cy="16.7" r="0.85" fill="#333" opacity="0.6"/><circle cx="41.2" cy="4.8" r="0.92" fill="#333" opacity="0.6"/><circle cx="20.4" cy="15.2" r="0.56" fill="#333" opacity="0.6"/><circle cx="29.4" cy="19.6" r="0.62" fill="#333" opacity="0.6"/><circle cx="27.5" cy="32.1" r="0.30" fill="#333" opacity="0.6"/><circle cx="25.2" cy="28.5" r="1.03" fill="#333" opacity="0.6"/><circle cx="34.6" cy="18.5" r="0.61" fill="#333" opacity="0.6"/><circle cx="36.2" cy="19.8" r="0.99" fill="#333" opacity="0.6"/><circle cx="50.3" cy="28.4" r="0.75" fill="#333" opacity="0.6"/><circle cx="45.3" cy="21.5" r="0.55" fill="#333" opacity="0.6"/><circle cx="39.4" cy="31.3" r="0.55" fill="#333" opacity="0.6"/><circle cx="28.9" cy="20.2" r="0.44" fill="#333" opacity="0.6"/><circle cx="38.5" cy="21.2" r="1.06" fill="#333" opacity="0.6"/><circle cx="35.1" cy="41.0" r="0.89" fill="#333" opacity="0.6"/><circle cx="52.5" cy="19.2" r="0.31" fill="#333" opacity="0.6"/><circle cx="37.7" cy="-2.3" r="0.93" fill="#333" opacity="0.6"/><circle cx="32.9" cy="23.6" r="0.32" fill="#333" opacity="0.6"/><circle cx="36.4" cy="40.0" r="0.42" fill="#333" opacity="0.6"/><circle cx="20.5" cy="17.8" r="0.75" fill="#333" opacity="0.6"/><circle cx="33.7" cy="6.2" r="0.88" fill="#333" opacity="0.6"/><circle cx="50.7" cy="24.6" r="0.76" fill="#333" opacity="0.6"/><circle cx="39.3" cy="17.0" r="0.41" fill="#333" opacity="0.6"/><circle cx="46.4" cy="27.4" r="0.43" fill="#333" opacity="0.6"/><circle cx="37.8" cy="10.9" r="0.60" fill="#333" opacity="0.6"/><circle cx="33.7" cy="27.7" r="0.41" fill="#333" opacity="0.6"/><circle cx="40.7" cy="20.1" r="0.73" fill="#333" opacity="0.6"/><circle cx="21.0" cy="16.7" r="0.43" fill="#333" opacity="0.6"/><circle cx="31.8" cy="27.3" r="0.39" fill="#333" opacity="0.6"/><circle cx="27.3" cy="32.7" r="0.56" fill="#333" opacity="0.6"/><circle cx="26.2" cy="32.2" r="0.32" fill="#333" opacity="0.6"/><circle cx="37.2" cy="22.5" r="0.62" fill="#333" opacity="0.6"/><circle cx="35.7" cy="22.8" r="0.42" fill="#333" opacity="0.6"/><circle cx="41.4" cy="24.7" r="0.77" fill="#333" opacity="0.6"/><circle cx="35.0" cy="-2.0" r="0.73" fill="#333" opacity="0.6"/><circle cx="43.6" cy="16.9" r="0.72" fill="#333" opacity="0.6"/><circle cx="38.2" cy="23.4" r="1.03" fill="#333" opacity="0.6"/><circle cx="32.6" cy="34.2" r="1.05" fill="#333" opacity="0.6"/><circle cx="15.2" cy="32.7" r="0.84" fill="#333" opacity="0.6"/><circle cx="52.4" cy="45.9" r="0.32" fill="#333" opacity="0.6"/><circle cx="32.7" cy="15.8" r="1.07" fill="#333" opacity="0.6"/><circle cx="36.3" cy="30.4" r="0.50" fill="#333" opacity="0.6"/></svg></div>
<div class="cell" style="left:534px;top:543px"><svg width="56" height="56"><circle cx="28" cy="28" r="22" fill="#8a8a8a" opacity="0.75" filter="url(#b3)"/><g filter="url(#b1_2)"><circle cx="29.9" cy="33.0" r="3.12" fill="#666" opacity="0.3"/><circle cx="32.5" cy="25.5" r="2.82" fill="#666" opacity="0.3"/><circle cx="13.6" cy="23.5" r="3.20" fill="#666" opacity="0.3"/><circle cx="32.6" cy="28.6" r="2.07" fill="#666" opacity="0.3"/><circle cx="25.4" cy="28.2" r="3.35" fill="#666" opacity="0.3"/><circle cx="33.7" cy="33.7" r="3.19" fill="#666" opacity="0.3"/><circle cx="34.1" cy="21.0" r="2.51" fill="#666" opacity="0.3"/><circle cx="20.8" cy="42.6" r="3.27" fill="#666" opacity="0.3"/><circle cx="28.5" cy="14.2" r="2.12" fill="#666" opacity="0.3"/><circle cx="24.3" cy="22.7" r="2.58" fill="#666" opacity="0.3"/><circle cx="21.9" cy="41.1" r="2.29" fill="#666" opacity="0.3"/><circle cx="22.8" cy="8.5" r="2.61" fill="#666" opacity="0.3"/><circle cx="28.4" cy="21.2" r="3.65" fill="#666" opacity="0.3"/><circle cx="32.6" cy="40.9" r="3.74" fill="#666" opacity="0.3"/><circle cx="26.5" cy="21.0" r="2.44" fill="#666" opacity="0.3"/><circle cx="33.4" cy="32.7" r="3.06" fill="#666" opacity="0.3"/><circle cx="31.3" cy="41.0" r="3.36" fill="#666" opacity="0.3"/><circle cx="31.4" cy="1.3" r="3.89" fill="#666" opacity="0.3"/><circle cx="17.7" cy="34.7" r="3.94" fill="#666" opacity="0.3"/><circle cx="24.1" cy="18.2" r="3.28" fill="#666" opacity="0.3"/><circle cx="16.2" cy="25.6" r="2.56" fill="#666" opacity="0.3"/><circle cx="37.9" cy="18.1" r="3.35" fill="#666" opacity="0.3"/><circle cx="36.4" cy="23.5" r="2.37" fill="#666" opacity="0.3"/><circle cx="26.3" cy="11.3" r="2.60" fill="#666" opacity="0.3"/><circle cx="34.9" cy="33.5" r="2.48" fill="#666" opacity="0.3"/><circle cx="19.4" cy="43.1" r="3.13" fill="#666" opacity="0.3"/><circle cx="21.0" cy="28.1" r="2.33" fill="#666" opacity="0.3"/><circle cx="24.9" cy="6.6" r="2.00" fill="#666" opacity="0.3"/><circle cx="43.3" cy="41.9" r="2.26" fill="#666" opacity="0.3"/><circle cx="46.0" cy="19.3" r="4.00" fill="#666" opacity="0.3"/></g></svg></div>
<div class="cell" style="left:592px;top:543px"><svg width="56" height="56"><ellipse cx="28" cy="28" rx="20" ry="10" fill="#333" filter="url(#b3)"/><ellipse cx="28" cy="18" rx="11" ry="7" fill="#000" filter="url(#b2)"/><ellipse cx="18" cy="28" rx="7" ry="6" fill="#111" filter="url(#b2)"/><ellipse cx="32" cy="42" rx="8" ry="3" fill="#999" filter="url(#b2)"/></svg></div>
<div class="cell" style="left:650px;top:543px"><svg width="56" height="56"><g fill="#000"><circle cx="29" cy="6" r="2.5"/><circle cx="34" cy="12" r="2"/><circle cx="4" cy="15" r="2.5"/><circle cx="22" cy="21" r="2"/><circle cx="33" cy="18" r="2.2"/><circle cx="48" cy="24" r="3.2"/><circle cx="10" cy="25" r="2"/><circle cx="34" cy="27" r="2.8"/><circle cx="25" cy="33" r="2"/><circle cx="39" cy="31" r="2"/><circle cx="13" cy="37" r="2"/><circle cx="19" cy="36" r="2.2"/><circle cx="30" cy="41" r="2.2"/><circle cx="40" cy="41" r="2.5"/><circle cx="21" cy="44" r="2"/><circle cx="35" cy="46" r="3"/><circle cx="46" cy="22" r="1.5"/></g></svg></div>
<div class="cell" style="left:708px;top:543px"><svg width="56" height="56"><rect x="0" y="0" width="56" height="56" fill="#c0e4f8"/><circle cx="21.1" cy="43.7" r="0.48" fill="#1c2a36" opacity="0.9"/><circle cx="25.7" cy="37.7" r="1.21" fill="#1c2a36" opacity="0.9"/><circle cx="20.2" cy="39.0" r="0.49" fill="#1c2a36" opacity="0.9"/><circle cx="35.3" cy="41.7" r="0.90" fill="#1c2a36" opacity="0.9"/><circle cx="26.0" cy="17.4" r="0.84" fill="#1c2a36" opacity="0.9"/><circle cx="30.2" cy="34.8" r="0.45" fill="#1c2a36" opacity="0.9"/><circle cx="33.4" cy="37.5" r="0.93" fill="#1c2a36" opacity="0.9"/><circle cx="26.9" cy="13.7" r="1.13" fill="#1c2a36" opacity="0.9"/><circle cx="27.9" cy="26.7" r="1.20" fill="#1c2a36" opacity="0.9"/><circle cx="17.3" cy="28.2" r="0.48" fill="#1c2a36" opacity="0.9"/><circle cx="30.1" cy="31.0" r="0.48" fill="#1c2a36" opacity="0.9"/><circle cx="30.2" cy="18.6" r="1.10" fill="#1c2a36" opacity="0.9"/><circle cx="41.9" cy="26.6" r="0.58" fill="#1c2a36" opacity="0.9"/><circle cx="42.0" cy="49.8" r="0.84" fill="#1c2a36" opacity="0.9"/><circle cx="15.1" cy="49.4" r="0.55" fill="#1c2a36" opacity="0.9"/><circle cx="29.0" cy="27.0" r="0.79" fill="#1c2a36" opacity="0.9"/><circle cx="14.1" cy="51.1" r="0.81" fill="#1c2a36" opacity="0.9"/><circle cx="11.5" cy="20.5" r="0.97" fill="#1c2a36" opacity="0.9"/><circle cx="37.0" cy="11.9" r="0.46" fill="#1c2a36" opacity="0.9"/><circle cx="34.6" cy="35.8" r="0.75" fill="#1c2a36" opacity="0.9"/><circle cx="30.3" cy="23.0" r="1.29" fill="#1c2a36" opacity="0.9"/><circle cx="33.5" cy="14.6" r="0.63" fill="#1c2a36" opacity="0.9"/><circle cx="31.1" cy="12.7" r="1.18" fill="#1c2a36" opacity="0.9"/><circle cx="22.2" cy="44.7" r="0.58" fill="#1c2a36" opacity="0.9"/><circle cx="22.8" cy="29.6" r="0.64" fill="#1c2a36" opacity="0.9"/><circle cx="63.0" cy="15.7" r="0.54" fill="#1c2a36" opacity="0.9"/><circle cx="27.4" cy="27.2" r="0.72" fill="#1c2a36" opacity="0.9"/><circle cx="21.3" cy="30.7" r="0.44" fill="#1c2a36" opacity="0.9"/><circle cx="17.7" cy="9.2" r="0.58" fill="#1c2a36" opacity="0.9"/><circle cx="16.6" cy="39.9" r="1.04" fill="#1c2a36" opacity="0.9"/><circle cx="25.4" cy="19.7" r="1.25" fill="#1c2a36" opacity="0.9"/><circle cx="33.0" cy="10.6" r="0.96" fill="#1c2a36" opacity="0.9"/><circle cx="39.3" cy="49.4" r="0.93" fill="#1c2a36" opacity="0.9"/><circle cx="12.9" cy="28.2" r="1.10" fill="#1c2a36" opacity="0.9"/><circle cx="31.4" cy="33.3" r="0.72" fill="#1c2a36" opacity="0.9"/><circle cx="38.3" cy="39.7" r="0.53" fill="#1c2a36" opacity="0.9"/><circle cx="17.9" cy="18.5" r="1.07" fill="#1c2a36" opacity="0.9"/><circle cx="31.1" cy="16.2" r="0.57" fill="#1c2a36" opacity="0.9"/><circle cx="39.3" cy="19.7" r="0.85" fill="#1c2a36" opacity="0.9"/><circle cx="40.4" cy="14.5" r="0.93" fill="#1c2a36" opacity="0.9"/><circle cx="22.7" cy="32.3" r="0.45" fill="#1c2a36" opacity="0.9"/><circle cx="30.1" cy="28.6" r="1.01" fill="#1c2a36" opacity="0.9"/><circle cx="38.5" cy="39.3" r="0.65" fill="#1c2a36" opacity="0.9"/><circle cx="36.3" cy="51.9" r="0.73" fill="#1c2a36" opacity="0.9"/><circle cx="39.6" cy="36.6" r="0.99" fill="#1c2a36" opacity="0.9"/><circle cx="44.8" cy="22.3" r="0.75" fill="#1c2a36" opacity="0.9"/><circle cx="22.7" cy="24.8" r="0.70" fill="#1c2a36" opacity="0.9"/><circle cx="20.8" cy="29.5" r="1.15" fill="#1c2a36" opacity="0.9"/><circle cx="30.2" cy="18.4" r="1.13" fill="#1c2a36" opacity="0.9"/><circle cx="22.5" cy="31.3" r="0.63" fill="#1c2a36" opacity="0.9"/><circle cx="39.5" cy="38.7" r="0.68" fill="#1c2a36" opacity="0.9"/><circle cx="31.4" cy="29.4" r="0.82" fill="#1c2a36" opacity="0.9"/><circle cx="33.1" cy="22.7" r="1.13" fill="#1c2a36" opacity="0.9"/><circle cx="29.2" cy="24.1" r="0.66" fill="#1c2a36" opacity="0.9"/><circle cx="42.2" cy="19.0" r="0.97" fill="#1c2a36" opacity="0.9"/><circle cx="35.5" cy="28.9" r="1.05" fill="#1c2a36" opacity="0.9"/><circle cx="32.3" cy="33.3" r="0.47" fill="#1c2a36" opacity="0.9"/><circle cx="21.4" cy="27.5" r="1.13" fill="#1c2a36" opacity="0.9"/><circle cx="41.4" cy="35.7" r="1.24" fill="#1c2a36" opacity="0.9"/><circle cx="28.0" cy="37.9" r="1.10" fill="#1c2a36" opacity="0.9"/><circle cx="31.3" cy="39.5" r="0.54" fill="#1c2a36" opacity="0.9"/><circle cx="19.1" cy="35.8" r="0.44" fill="#1c2a36" opacity="0.9"/><circle cx="36.2" cy="21.2" r="0.47" fill="#1c2a36" opacity="0.9"/><circle cx="34.5" cy="32.4" r="0.46" fill="#1c2a36" opacity="0.9"/><circle cx="26.1" cy="21.4" r="0.86" fill="#1c2a36" opacity="0.9"/><circle cx="20.4" cy="28.1" r="0.97" fill="#1c2a36" opacity="0.9"/><circle cx="18.0" cy="39.7" r="0.90" fill="#1c2a36" opacity="0.9"/><circle cx="12.9" cy="7.9" r="1.08" fill="#1c2a36" opacity="0.9"/><circle cx="34.9" cy="11.2" r="1.10" fill="#1c2a36" opacity="0.9"/><circle cx="19.6" cy="31.8" r="1.30" fill="#1c2a36" opacity="0.9"/><circle cx="23.7" cy="38.0" r="0.67" fill="#1c2a36" opacity="0.9"/><circle cx="39.4" cy="33.6" r="0.66" fill="#1c2a36" opacity="0.9"/><circle cx="38.2" cy="46.9" r="0.66" fill="#1c2a36" opacity="0.9"/><circle cx="-1.2" cy="29.5" r="1.26" fill="#1c2a36" opacity="0.9"/><circle cx="41.1" cy="19.7" r="0.71" fill="#1c2a36" opacity="0.9"/><circle cx="15.7" cy="41.1" r="0.78" fill="#1c2a36" opacity="0.9"/><circle cx="31.3" cy="20.9" r="1.00" fill="#1c2a36" opacity="0.9"/><circle cx="38.0" cy="23.3" r="0.42" fill="#1c2a36" opacity="0.9"/><circle cx="25.6" cy="34.3" r="1.02" fill="#1c2a36" opacity="0.9"/><circle cx="21.5" cy="35.8" r="0.73" fill="#1c2a36" opacity="0.9"/><circle cx="31.3" cy="16.7" r="0.42" fill="#1c2a36" opacity="0.9"/><circle cx="31.5" cy="33.2" r="0.98" fill="#1c2a36" opacity="0.9"/><circle cx="29.2" cy="37.4" r="1.20" fill="#1c2a36" opacity="0.9"/><circle cx="14.2" cy="15.6" r="0.81" fill="#1c2a36" opacity="0.9"/><circle cx="23.5" cy="28.4" r="0.52" fill="#1c2a36" opacity="0.9"/><circle cx="11.9" cy="27.5" r="0.42" fill="#1c2a36" opacity="0.9"/><circle cx="34.5" cy="40.2" r="0.62" fill="#1c2a36" opacity="0.9"/><circle cx="21.3" cy="40.0" r="1.02" fill="#1c2a36" opacity="0.9"/><circle cx="31.8" cy="29.4" r="0.81" fill="#1c2a36" opacity="0.9"/><circle cx="29.2" cy="33.4" r="0.69" fill="#1c2a36" opacity="0.9"/><circle cx="13.7" cy="29.5" r="1.27" fill="#1c2a36" opacity="0.9"/><circle cx="46.3" cy="25.8" r="0.71" fill="#1c2a36" opacity="0.9"/><circle cx="33.8" cy="32.9" r="0.58" fill="#1c2a36" opacity="0.9"/><circle cx="34.2" cy="11.6" r="0.92" fill="#1c2a36" opacity="0.9"/><circle cx="35.0" cy="31.0" r="0.97" fill="#1c2a36" opacity="0.9"/><circle cx="22.3" cy="35.6" r="1.04" fill="#1c2a36" opacity="0.9"/><circle cx="36.5" cy="28.1" r="0.88" fill="#1c2a36" opacity="0.9"/><circle cx="16.2" cy="24.3" r="0.48" fill="#1c2a36" opacity="0.9"/><circle cx="33.7" cy="32.0" r="0.44" fill="#1c2a36" opacity="0.9"/><circle cx="45.5" cy="18.1" r="0.46" fill="#1c2a36" opacity="0.9"/><circle cx="29.7" cy="22.7" r="0.42" fill="#1c2a36" opacity="0.9"/><circle cx="27.2" cy="31.2" r="1.20" fill="#1c2a36" opacity="0.9"/><circle cx="16.4" cy="44.6" r="0.72" fill="#1c2a36" opacity="0.9"/><circle cx="46.4" cy="27.5" r="1.29" fill="#1c2a36" opacity="0.9"/><circle cx="19.9" cy="20.5" r="1.26" fill="#1c2a36" opacity="0.9"/><circle cx="23.4" cy="29.6" r="0.47" fill="#1c2a36" opacity="0.9"/><circle cx="20.4" cy="22.0" r="0.85" fill="#1c2a36" opacity="0.9"/><circle cx="39.7" cy="33.0" r="1.29" fill="#1c2a36" opacity="0.9"/><circle cx="27.5" cy="42.2" r="0.95" fill="#1c2a36" opacity="0.9"/><circle cx="38.1" cy="25.0" r="1.22" fill="#1c2a36" opacity="0.9"/><circle cx="26.0" cy="44.1" r="0.68" fill="#1c2a36" opacity="0.9"/><circle cx="12.2" cy="43.1" r="1.12" fill="#1c2a36" opacity="0.9"/><circle cx="8.5" cy="40.6" r="0.65" fill="#1c2a36" opacity="0.9"/><circle cx="29.5" cy="27.3" r="1.20" fill="#1c2a36" opacity="0.9"/><circle cx="13.9" cy="27.3" r="1.20" fill="#1c2a36" opacity="0.9"/><circle cx="31.2" cy="33.7" r="1.07" fill="#1c2a36" opacity="0.9"/><circle cx="40.5" cy="16.3" r="0.70" fill="#1c2a36" opacity="0.9"/><circle cx="34.8" cy="40.5" r="0.84" fill="#1c2a36" opacity="0.9"/><circle cx="11.3" cy="44.3" r="1.19" fill="#1c2a36" opacity="0.9"/><circle cx="20.9" cy="17.6" r="0.94" fill="#1c2a36" opacity="0.9"/><circle cx="36.5" cy="21.4" r="1.24" fill="#1c2a36" opacity="0.9"/><circle cx="26.0" cy="24.9" r="0.97" fill="#1c2a36" opacity="0.9"/><circle cx="20.1" cy="31.1" r="1.29" fill="#1c2a36" opacity="0.9"/><circle cx="32.1" cy="28.6" r="1.28" fill="#1c2a36" opacity="0.9"/><circle cx="9.8" cy="32.4" r="0.95" fill="#1c2a36" opacity="0.9"/><circle cx="28.8" cy="26.8" r="0.40" fill="#1c2a36" opacity="0.9"/><circle cx="23.2" cy="14.1" r="0.85" fill="#1c2a36" opacity="0.9"/><circle cx="30.0" cy="29.4" r="0.64" fill="#1c2a36" opacity="0.9"/><circle cx="38.1" cy="40.9" r="0.71" fill="#1c2a36" opacity="0.9"/><circle cx="29.0" cy="29.8" r="0.73" fill="#1c2a36" opacity="0.9"/><circle cx="46.7" cy="44.1" r="0.51" fill="#1c2a36" opacity="0.9"/><circle cx="25.2" cy="17.2" r="0.87" fill="#1c2a36" opacity="0.9"/><circle cx="51.0" cy="29.8" r="1.23" fill="#1c2a36" opacity="0.9"/><circle cx="41.7" cy="28.1" r="0.76" fill="#1c2a36" opacity="0.9"/><circle cx="34.8" cy="25.4" r="0.72" fill="#1c2a36" opacity="0.9"/><circle cx="27.4" cy="22.6" r="0.40" fill="#1c2a36" opacity="0.9"/><circle cx="41.9" cy="22.1" r="1.01" fill="#1c2a36" opacity="0.9"/><circle cx="36.4" cy="22.3" r="0.95" fill="#1c2a36" opacity="0.9"/><circle cx="32.1" cy="38.9" r="0.45" fill="#1c2a36" opacity="0.9"/><circle cx="32.9" cy="27.6" r="1.13" fill="#1c2a36" opacity="0.9"/><circle cx="20.3" cy="37.7" r="0.55" fill="#1c2a36" opacity="0.9"/><circle cx="34.6" cy="42.4" r="0.93" fill="#1c2a36" opacity="0.9"/><circle cx="28.0" cy="20.5" r="0.88" fill="#1c2a36" opacity="0.9"/><circle cx="27.1" cy="34.5" r="0.83" fill="#1c2a36" opacity="0.9"/><circle cx="26.5" cy="37.4" r="1.19" fill="#1c2a36" opacity="0.9"/><circle cx="33.0" cy="27.6" r="1.12" fill="#1c2a36" opacity="0.9"/><circle cx="43.7" cy="17.9" r="0.76" fill="#1c2a36" opacity="0.9"/><circle cx="40.7" cy="22.0" r="0.59" fill="#1c2a36" opacity="0.9"/><circle cx="24.7" cy="32.3" r="0.61" fill="#1c2a36" opacity="0.9"/><circle cx="35.5" cy="25.0" r="0.43" fill="#1c2a36" opacity="0.9"/><circle cx="32.9" cy="23.4" r="1.12" fill="#1c2a36" opacity="0.9"/><circle cx="22.5" cy="18.2" r="1.16" fill="#1c2a36" opacity="0.9"/><circle cx="20.0" cy="37.6" r="1.23" fill="#1c2a36" opacity="0.9"/><circle cx="28.3" cy="16.3" r="0.95" fill="#1c2a36" opacity="0.9"/><circle cx="13.8" cy="60.0" r="0.85" fill="#1c2a36" opacity="0.9"/><circle cx="49.8" cy="27.2" r="0.70" fill="#1c2a36" opacity="0.9"/><circle cx="20.8" cy="44.4" r="0.87" fill="#1c2a36" opacity="0.9"/><circle cx="39.0" cy="27.0" r="0.99" fill="#1c2a36" opacity="0.9"/><circle cx="26.5" cy="50.2" r="0.40" fill="#1c2a36" opacity="0.9"/><circle cx="22.3" cy="33.9" r="1.02" fill="#1c2a36" opacity="0.9"/><circle cx="28.2" cy="25.6" r="0.60" fill="#1c2a36" opacity="0.9"/><circle cx="10.9" cy="39.9" r="1.26" fill="#1c2a36" opacity="0.9"/><circle cx="16.7" cy="33.6" r="0.94" fill="#1c2a36" opacity="0.9"/><circle cx="27.4" cy="31.5" r="0.83" fill="#1c2a36" opacity="0.9"/><circle cx="32.8" cy="24.6" r="1.15" fill="#1c2a36" opacity="0.9"/><circle cx="23.6" cy="18.5" r="0.69" fill="#1c2a36" opacity="0.9"/><circle cx="41.2" cy="37.4" r="1.03" fill="#1c2a36" opacity="0.9"/><circle cx="26.4" cy="18.4" r="0.55" fill="#1c2a36" opacity="0.9"/><circle cx="15.3" cy="22.9" r="0.93" fill="#1c2a36" opacity="0.9"/><circle cx="10.1" cy="17.5" r="1.26" fill="#1c2a36" opacity="0.9"/><circle cx="7.3" cy="17.1" r="0.51" fill="#1c2a36" opacity="0.9"/><circle cx="44.8" cy="14.9" r="0.57" fill="#1c2a36" opacity="0.9"/><circle cx="36.6" cy="33.9" r="0.75" fill="#1c2a36" opacity="0.9"/><circle cx="1.8" cy="19.7" r="0.89" fill="#1c2a36" opacity="0.9"/><circle cx="40.4" cy="29.6" r="1.25" fill="#1c2a36" opacity="0.9"/><circle cx="22.4" cy="28.3" r="1.14" fill="#1c2a36" opacity="0.9"/><circle cx="31.5" cy="26.9" r="0.56" fill="#1c2a36" opacity="0.9"/><circle cx="24.9" cy="18.7" r="0.62" fill="#1c2a36" opacity="0.9"/><circle cx="18.2" cy="14.1" r="0.60" fill="#1c2a36" opacity="0.9"/><circle cx="29.0" cy="29.1" r="1.30" fill="#1c2a36" opacity="0.9"/><circle cx="14.8" cy="23.8" r="0.76" fill="#1c2a36" opacity="0.9"/><circle cx="29.0" cy="28.5" r="0.56" fill="#1c2a36" opacity="0.9"/><circle cx="13.4" cy="34.9" r="1.29" fill="#1c2a36" opacity="0.9"/><circle cx="26.2" cy="23.1" r="0.66" fill="#1c2a36" opacity="0.9"/><circle cx="26.1" cy="37.8" r="0.93" fill="#1c2a36" opacity="0.9"/><circle cx="41.6" cy="37.9" r="1.22" fill="#1c2a36" opacity="0.9"/><circle cx="10.7" cy="16.3" r="0.70" fill="#1c2a36" opacity="0.9"/><circle cx="17.1" cy="19.8" r="0.63" fill="#1c2a36" opacity="0.9"/><circle cx="23.3" cy="38.0" r="0.61" fill="#1c2a36" opacity="0.9"/><circle cx="21.0" cy="13.6" r="1.23" fill="#1c2a36" opacity="0.9"/><circle cx="10.1" cy="24.3" r="1.13" fill="#1c2a36" opacity="0.9"/><circle cx="17.5" cy="19.7" r="1.06" fill="#1c2a36" opacity="0.9"/><circle cx="5.5" cy="33.6" r="1.24" fill="#1c2a36" opacity="0.9"/><circle cx="30.1" cy="25.2" r="0.87" fill="#1c2a36" opacity="0.9"/><circle cx="50.0" cy="14.9" r="0.47" fill="#1c2a36" opacity="0.9"/><circle cx="23.1" cy="27.6" r="1.17" fill="#1c2a36" opacity="0.9"/><circle cx="32.8" cy="30.6" r="0.81" fill="#1c2a36" opacity="0.9"/><circle cx="19.5" cy="23.7" r="0.43" fill="#1c2a36" opacity="0.9"/><circle cx="16.9" cy="48.4" r="0.82" fill="#1c2a36" opacity="0.9"/><circle cx="10.0" cy="33.4" r="1.10" fill="#1c2a36" opacity="0.9"/><circle cx="6.1" cy="18.6" r="0.53" fill="#1c2a36" opacity="0.9"/><circle cx="21.3" cy="23.2" r="1.12" fill="#1c2a36" opacity="0.9"/><circle cx="27.2" cy="33.7" r="0.48" fill="#1c2a36" opacity="0.9"/><circle cx="31.2" cy="51.5" r="0.61" fill="#1c2a36" opacity="0.9"/><circle cx="27.3" cy="53.2" r="1.20" fill="#1c2a36" opacity="0.9"/><circle cx="18.6" cy="25.0" r="1.11" fill="#1c2a36" opacity="0.9"/><circle cx="46.9" cy="32.8" r="1.11" fill="#1c2a36" opacity="0.9"/><circle cx="25.2" cy="20.9" r="1.00" fill="#1c2a36" opacity="0.9"/><circle cx="21.7" cy="19.4" r="0.96" fill="#1c2a36" opacity="0.9"/><circle cx="17.0" cy="24.0" r="0.69" fill="#1c2a36" opacity="0.9"/><circle cx="27.1" cy="34.3" r="0.53" fill="#1c2a36" opacity="0.9"/><circle cx="27.0" cy="21.1" r="1.08" fill="#1c2a36" opacity="0.9"/><circle cx="21.5" cy="35.0" r="0.66" fill="#1c2a36" opacity="0.9"/><circle cx="25.9" cy="35.2" r="0.42" fill="#1c2a36" opacity="0.9"/><circle cx="39.9" cy="24.1" r="0.49" fill="#1c2a36" opacity="0.9"/><circle cx="26.2" cy="34.7" r="0.77" fill="#1c2a36" opacity="0.9"/><circle cx="27.8" cy="33.9" r="1.05" fill="#1c2a36" opacity="0.9"/><circle cx="25.6" cy="26.7" r="1.04" fill="#1c2a36" opacity="0.9"/><circle cx="25.6" cy="22.7" r="0.83" fill="#1c2a36" opacity="0.9"/><circle cx="33.8" cy="22.5" r="0.96" fill="#1c2a36" opacity="0.9"/><circle cx="13.9" cy="22.2" r="0.91" fill="#1c2a36" opacity="0.9"/><circle cx="16.2" cy="31.9" r="0.57" fill="#1c2a36" opacity="0.9"/><circle cx="31.2" cy="33.9" r="1.00" fill="#1c2a36" opacity="0.9"/><circle cx="18.8" cy="42.3" r="0.41" fill="#1c2a36" opacity="0.9"/><circle cx="30.8" cy="33.2" r="1.23" fill="#1c2a36" opacity="0.9"/><circle cx="28.0" cy="41.3" r="0.68" fill="#1c2a36" opacity="0.9"/><circle cx="19.0" cy="27.2" r="0.55" fill="#1c2a36" opacity="0.9"/><circle cx="16.8" cy="22.9" r="1.24" fill="#1c2a36" opacity="0.9"/><circle cx="30.1" cy="37.8" r="0.88" fill="#1c2a36" opacity="0.9"/><circle cx="30.9" cy="25.0" r="1.26" fill="#1c2a36" opacity="0.9"/><circle cx="11.0" cy="37.3" r="0.90" fill="#1c2a36" opacity="0.9"/><circle cx="18.3" cy="18.2" r="0.63" fill="#1c2a36" opacity="0.9"/><circle cx="46.6" cy="20.5" r="0.51" fill="#1c2a36" opacity="0.9"/><circle cx="17.9" cy="11.0" r="1.06" fill="#1c2a36" opacity="0.9"/><circle cx="28.8" cy="37.4" r="0.67" fill="#1c2a36" opacity="0.9"/><circle cx="8.8" cy="23.8" r="0.57" fill="#1c2a36" opacity="0.9"/><circle cx="39.7" cy="39.7" r="1.15" fill="#1c2a36" opacity="0.9"/><circle cx="18.0" cy="10.6" r="0.90" fill="#1c2a36" opacity="0.9"/><circle cx="11.1" cy="34.4" r="1.04" fill="#1c2a36" opacity="0.9"/><circle cx="30.5" cy="28.7" r="0.68" fill="#1c2a36" opacity="0.9"/><circle cx="23.1" cy="25.2" r="0.79" fill="#1c2a36" opacity="0.9"/><circle cx="24.2" cy="15.4" r="0.42" fill="#1c2a36" opacity="0.9"/><circle cx="31.5" cy="23.6" r="1.26" fill="#1c2a36" opacity="0.9"/><circle cx="43.1" cy="13.4" r="1.09" fill="#1c2a36" opacity="0.9"/><circle cx="30.9" cy="25.9" r="0.59" fill="#1c2a36" opacity="0.9"/><circle cx="41.3" cy="21.9" r="0.53" fill="#1c2a36" opacity="0.9"/><circle cx="26.7" cy="46.4" r="0.75" fill="#1c2a36" opacity="0.9"/><circle cx="30.0" cy="46.6" r="0.48" fill="#1c2a36" opacity="0.9"/><circle cx="22.3" cy="11.4" r="1.02" fill="#1c2a36" opacity="0.9"/><circle cx="23.2" cy="30.8" r="0.71" fill="#1c2a36" opacity="0.9"/><circle cx="33.9" cy="33.3" r="1.17" fill="#1c2a36" opacity="0.9"/><circle cx="31.4" cy="24.7" r="0.55" fill="#1c2a36" opacity="0.9"/><circle cx="24.0" cy="29.8" r="1.15" fill="#1c2a36" opacity="0.9"/><circle cx="20.3" cy="8.1" r="1.22" fill="#1c2a36" opacity="0.9"/><circle cx="28.2" cy="22.9" r="0.79" fill="#1c2a36" opacity="0.9"/><circle cx="29.0" cy="23.8" r="1.14" fill="#1c2a36" opacity="0.9"/><circle cx="24.2" cy="25.7" r="0.87" fill="#1c2a36" opacity="0.9"/><circle cx="23.5" cy="31.5" r="0.98" fill="#1c2a36" opacity="0.9"/><circle cx="48.0" cy="22.3" r="0.47" fill="#1c2a36" opacity="0.9"/><circle cx="47.2" cy="43.3" r="1.08" fill="#1c2a36" opacity="0.9"/><rect x="0.75" y="0.75" width="54.5" height="54.5" fill="none" stroke="#4a7aa8" stroke-width="1.5"/></svg></div>
<div class="cell" style="left:302px;top:601px"><svg width="56" height="56"><path d="M24 2 C28 2, 28 10, 27 16 C26 22, 30 28, 30 34 C28 42, 26 50, 22 54 C18 54, 18 48, 22 40 C20 30, 20 20, 22 8 Z" fill="#000" filter="url(#b0_7)"/></svg></div>
<div class="cell" style="left:360px;top:601px"><svg width="56" height="56"><path d="M24 4 L26 54 L22 54 Z" fill="#000"/><path d="M22 30 L28 36 L26 54 L22 54 Z" fill="#222"/></svg></div>
<div class="cell" style="left:418px;top:601px"><svg width="56" height="56"><g fill="none" stroke="#000" stroke-width="1.2"><path d="M2 18 L14 20 L22 30 L20 40 L12 46"/><path d="M14 4 L22 12 L20 20"/><path d="M26 2 L32 8 L28 20 L34 28 L46 36 L52 28"/><path d="M22 30 L30 28 L36 36 L34 44 L28 52"/><path d="M40 10 L42 20 L36 28"/></g></svg></div>
<div class="cell" style="left:476px;top:601px"><svg width="56" height="56"><g fill="#000"><circle cx="28" cy="16" r="2.5"/><circle cx="30" cy="40" r="2.5"/><circle cx="22" cy="46" r="1.5"/><circle cx="38" cy="44" r="1.5"/><circle cx="14" cy="36" r="1.2"/><circle cx="16" cy="10" r="1.2"/><circle cx="2" cy="24" r="1"/><circle cx="24" cy="28" r="0.8"/><circle cx="22" cy="2" r="1"/></g></svg></div>
<div class="cell" style="left:534px;top:601px"><svg width="56" height="56"><path d="M10 8 L40 6 L40 20 L44 44 L14 46 L12 30 Z" fill="#0d0d0d" filter="url(#b0_6)"/><circle cx="24.0" cy="25.7" r="1.28" fill="#444" opacity="0.8"/><circle cx="31.5" cy="39.9" r="0.50" fill="#444" opacity="0.8"/><circle cx="24.8" cy="38.7" r="1.19" fill="#444" opacity="0.8"/><circle cx="32.7" cy="19.9" r="0.77" fill="#444" opacity="0.8"/><circle cx="18.4" cy="39.4" r="1.31" fill="#444" opacity="0.8"/><circle cx="31.2" cy="40.9" r="0.86" fill="#444" opacity="0.8"/><circle cx="28.1" cy="42.4" r="0.75" fill="#444" opacity="0.8"/><circle cx="20.0" cy="24.0" r="0.77" fill="#444" opacity="0.8"/><circle cx="33.9" cy="42.6" r="1.30" fill="#444" opacity="0.8"/><circle cx="26.2" cy="11.2" r="1.05" fill="#444" opacity="0.8"/><circle cx="14.9" cy="22.8" r="0.94" fill="#444" opacity="0.8"/><circle cx="31.3" cy="30.8" r="0.82" fill="#444" opacity="0.8"/><circle cx="15.1" cy="12.4" r="0.97" fill="#444" opacity="0.8"/><circle cx="19.9" cy="31.6" r="1.08" fill="#444" opacity="0.8"/><circle cx="22.3" cy="14.7" r="0.77" fill="#444" opacity="0.8"/></svg></div>
<div class="cell" style="left:592px;top:601px"><svg width="56" height="56"><path d="M4 6 L52 4 L54 34 L44 50 L24 54 L8 50 L2 30 Z" fill="#3a3a3a" opacity="0.9" filter="url(#b2)"/><g filter="url(#b1_2)"><circle cx="41.8" cy="22.6" r="2.44" fill="#000" opacity="0.5"/><circle cx="52.7" cy="20.8" r="3.87" fill="#000" opacity="0.5"/><circle cx="44.1" cy="16.0" r="2.08" fill="#000" opacity="0.5"/><circle cx="29.2" cy="10.4" r="4.59" fill="#000" opacity="0.5"/><circle cx="29.0" cy="51.4" r="4.17" fill="#000" opacity="0.5"/><circle cx="23.1" cy="36.1" r="2.10" fill="#000" opacity="0.5"/><circle cx="20.3" cy="39.8" r="2.97" fill="#000" opacity="0.5"/><circle cx="13.0" cy="44.8" r="4.74" fill="#000" opacity="0.5"/><circle cx="21.6" cy="14.3" r="4.46" fill="#000" opacity="0.5"/><circle cx="33.5" cy="22.3" r="2.37" fill="#000" opacity="0.5"/><circle cx="36.1" cy="26.6" r="3.30" fill="#000" opacity="0.5"/><circle cx="22.5" cy="29.3" r="4.58" fill="#000" opacity="0.5"/><circle cx="32.4" cy="41.3" r="2.56" fill="#000" opacity="0.5"/><circle cx="27.8" cy="12.8" r="3.94" fill="#000" opacity="0.5"/><circle cx="22.7" cy="16.0" r="3.94" fill="#000" opacity="0.5"/><circle cx="13.7" cy="46.0" r="2.69" fill="#000" opacity="0.5"/><circle cx="41.2" cy="22.6" r="4.39" fill="#000" opacity="0.5"/><circle cx="38.4" cy="26.6" r="3.04" fill="#000" opacity="0.5"/><circle cx="50.6" cy="15.3" r="3.70" fill="#000" opacity="0.5"/><circle cx="59.7" cy="17.0" r="2.87" fill="#000" opacity="0.5"/><circle cx="25.5" cy="28.4" r="3.81" fill="#000" opacity="0.5"/><circle cx="58.3" cy="34.3" r="3.23" fill="#000" opacity="0.5"/><circle cx="34.6" cy="48.4" r="4.40" fill="#000" opacity="0.5"/><circle cx="13.3" cy="14.0" r="2.36" fill="#000" opacity="0.5"/><circle cx="19.5" cy="25.7" r="3.73" fill="#000" opacity="0.5"/><circle cx="43.9" cy="29.4" r="2.97" fill="#000" opacity="0.5"/><circle cx="-1.7" cy="39.1" r="3.41" fill="#000" opacity="0.5"/><circle cx="28.4" cy="22.3" r="3.41" fill="#000" opacity="0.5"/><circle cx="16.9" cy="24.0" r="4.82" fill="#000" opacity="0.5"/><circle cx="25.1" cy="3.9" r="3.08" fill="#000" opacity="0.5"/><circle cx="37.6" cy="28.1" r="2.67" fill="#000" opacity="0.5"/><circle cx="44.1" cy="43.7" r="4.73" fill="#000" opacity="0.5"/><circle cx="46.0" cy="27.0" r="4.19" fill="#000" opacity="0.5"/><circle cx="36.3" cy="34.4" r="2.80" fill="#000" opacity="0.5"/><circle cx="37.7" cy="3.5" r="4.29" fill="#000" opacity="0.5"/><circle cx="12.9" cy="27.3" r="2.45" fill="#000" opacity="0.5"/><circle cx="28.4" cy="40.9" r="3.58" fill="#000" opacity="0.5"/><circle cx="12.2" cy="30.1" r="4.53" fill="#000" opacity="0.5"/><circle cx="30.7" cy="28.0" r="4.96" fill="#000" opacity="0.5"/><circle cx="45.3" cy="41.9" r="4.98" fill="#000" opacity="0.5"/><circle cx="20.7" cy="36.7" r="3.90" fill="#ccc" opacity="0.35"/><circle cx="21.6" cy="43.5" r="3.95" fill="#ccc" opacity="0.35"/><circle cx="43.9" cy="42.8" r="2.92" fill="#ccc" opacity="0.35"/><circle cx="14.1" cy="43.6" r="3.61" fill="#ccc" opacity="0.35"/><circle cx="25.0" cy="38.7" r="3.16" fill="#ccc" opacity="0.35"/><circle cx="21.0" cy="45.0" r="2.61" fill="#ccc" opacity="0.35"/><circle cx="40.7" cy="55.0" r="2.36" fill="#ccc" opacity="0.35"/><circle cx="16.9" cy="48.2" r="2.89" fill="#ccc" opacity="0.35"/><circle cx="22.7" cy="54.0" r="2.34" fill="#ccc" opacity="0.35"/><circle cx="18.6" cy="30.6" r="3.34" fill="#ccc" opacity="0.35"/><circle cx="29.2" cy="48.3" r="3.55" fill="#ccc" opacity="0.35"/><circle cx="11.2" cy="45.9" r="2.79" fill="#ccc" opacity="0.35"/><circle cx="16.7" cy="38.6" r="2.99" fill="#ccc" opacity="0.35"/><circle cx="36.3" cy="53.9" r="3.94" fill="#ccc" opacity="0.35"/><circle cx="37.9" cy="45.4" r="2.22" fill="#ccc" opacity="0.35"/><circle cx="54.3" cy="44.5" r="3.25" fill="#ccc" opacity="0.35"/><circle cx="16.9" cy="44.5" r="3.29" fill="#ccc" opacity="0.35"/><circle cx="6.4" cy="47.4" r="2.43" fill="#ccc" opacity="0.35"/><circle cx="33.7" cy="40.3" r="3.52" fill="#ccc" opacity="0.35"/><circle cx="51.2" cy="47.8" r="3.38" fill="#ccc" opacity="0.35"/></g></svg></div>
<div class="cell" style="left:650px;top:601px"><svg width="56" height="56"><path d="M4 6 L52 4 L54 34 L44 50 L24 54 L8 50 L2 30 Z" fill="#5a5a5a" opacity="0.85" filter="url(#b2_5)"/><g filter="url(#b1_2)"><circle cx="56.5" cy="31.2" r="2.61" fill="#222" opacity="0.4"/><circle cx="32.8" cy="35.2" r="3.83" fill="#222" opacity="0.4"/><circle cx="39.7" cy="23.6" r="3.38" fill="#222" opacity="0.4"/><circle cx="34.0" cy="33.6" r="2.95" fill="#222" opacity="0.4"/><circle cx="32.2" cy="22.1" r="3.73" fill="#222" opacity="0.4"/><circle cx="13.9" cy="10.1" r="2.83" fill="#222" opacity="0.4"/><circle cx="37.4" cy="32.8" r="4.98" fill="#222" opacity="0.4"/><circle cx="49.5" cy="8.0" r="4.87" fill="#222" opacity="0.4"/><circle cx="26.4" cy="12.2" r="4.86" fill="#222" opacity="0.4"/><circle cx="17.1" cy="16.4" r="2.76" fill="#222" opacity="0.4"/><circle cx="-2.6" cy="15.2" r="3.21" fill="#222" opacity="0.4"/><circle cx="27.6" cy="16.5" r="2.79" fill="#222" opacity="0.4"/><circle cx="37.7" cy="41.1" r="4.07" fill="#222" opacity="0.4"/><circle cx="11.6" cy="39.8" r="4.03" fill="#222" opacity="0.4"/><circle cx="25.6" cy="22.4" r="4.37" fill="#222" opacity="0.4"/><circle cx="31.4" cy="23.3" r="2.67" fill="#222" opacity="0.4"/><circle cx="14.2" cy="12.2" r="4.66" fill="#222" opacity="0.4"/><circle cx="15.1" cy="17.1" r="4.68" fill="#222" opacity="0.4"/><circle cx="5.9" cy="24.3" r="2.75" fill="#222" opacity="0.4"/><circle cx="27.5" cy="10.5" r="3.13" fill="#222" opacity="0.4"/><circle cx="6.9" cy="33.5" r="4.55" fill="#222" opacity="0.4"/><circle cx="14.9" cy="18.2" r="2.54" fill="#222" opacity="0.4"/><circle cx="32.9" cy="14.6" r="4.99" fill="#222" opacity="0.4"/><circle cx="36.5" cy="22.9" r="3.78" fill="#222" opacity="0.4"/><circle cx="-2.3" cy="16.3" r="4.62" fill="#222" opacity="0.4"/><circle cx="31.5" cy="39.7" r="2.48" fill="#222" opacity="0.4"/><circle cx="2.6" cy="12.9" r="2.78" fill="#222" opacity="0.4"/><circle cx="13.9" cy="26.3" r="4.27" fill="#222" opacity="0.4"/><circle cx="32.8" cy="23.1" r="4.15" fill="#222" opacity="0.4"/><circle cx="24.2" cy="18.8" r="3.53" fill="#222" opacity="0.4"/><circle cx="49.9" cy="14.0" r="2.52" fill="#222" opacity="0.4"/><circle cx="22.5" cy="26.5" r="4.29" fill="#222" opacity="0.4"/><circle cx="-9.6" cy="23.5" r="3.30" fill="#222" opacity="0.4"/><circle cx="30.3" cy="23.2" r="4.89" fill="#222" opacity="0.4"/><circle cx="41.6" cy="43.8" r="3.86" fill="#222" opacity="0.4"/><circle cx="28.8" cy="15.1" r="3.70" fill="#222" opacity="0.4"/><circle cx="20.8" cy="43.4" r="2.03" fill="#222" opacity="0.4"/><circle cx="13.0" cy="24.8" r="3.65" fill="#222" opacity="0.4"/><circle cx="34.7" cy="45.4" r="4.98" fill="#222" opacity="0.4"/><circle cx="22.8" cy="19.1" r="2.99" fill="#222" opacity="0.4"/><circle cx="10.4" cy="45.3" r="2.46" fill="#ddd" opacity="0.35"/><circle cx="44.1" cy="41.8" r="2.96" fill="#ddd" opacity="0.35"/><circle cx="28.6" cy="38.2" r="3.77" fill="#ddd" opacity="0.35"/><circle cx="23.6" cy="46.1" r="3.42" fill="#ddd" opacity="0.35"/><circle cx="8.7" cy="46.9" r="2.15" fill="#ddd" opacity="0.35"/><circle cx="3.6" cy="47.4" r="3.78" fill="#ddd" opacity="0.35"/><circle cx="39.9" cy="38.4" r="3.05" fill="#ddd" opacity="0.35"/><circle cx="58.9" cy="45.0" r="3.81" fill="#ddd" opacity="0.35"/><circle cx="20.2" cy="48.0" r="2.70" fill="#ddd" opacity="0.35"/><circle cx="22.4" cy="40.2" r="2.83" fill="#ddd" opacity="0.35"/><circle cx="4.1" cy="49.3" r="2.33" fill="#ddd" opacity="0.35"/><circle cx="10.2" cy="51.9" r="3.32" fill="#ddd" opacity="0.35"/><circle cx="38.6" cy="47.0" r="3.87" fill="#ddd" opacity="0.35"/><circle cx="19.9" cy="44.0" r="3.18" fill="#ddd" opacity="0.35"/><circle cx="46.5" cy="35.4" r="3.58" fill="#ddd" opacity="0.35"/><circle cx="38.6" cy="41.4" r="3.02" fill="#ddd" opacity="0.35"/><circle cx="28.7" cy="50.4" r="3.94" fill="#ddd" opacity="0.35"/><circle cx="38.8" cy="51.0" r="3.86" fill="#ddd" opacity="0.35"/><circle cx="-1.6" cy="38.1" r="3.11" fill="#ddd" opacity="0.35"/><circle cx="36.7" cy="46.4" r="3.42" fill="#ddd" opacity="0.35"/></g></svg></div>
<div class="cell" style="left:708px;top:601px"><svg width="56" height="56"><circle cx="41.5" cy="31.0" r="0.99" fill="#555" opacity="0.8"/><circle cx="9.7" cy="32.3" r="0.95" fill="#555" opacity="0.8"/><circle cx="48.3" cy="12.3" r="1.00" fill="#555" opacity="0.8"/><circle cx="19.4" cy="12.4" r="0.48" fill="#555" opacity="0.8"/><circle cx="48.1" cy="45.5" r="0.99" fill="#555" opacity="0.8"/><circle cx="44.1" cy="40.7" r="0.77" fill="#555" opacity="0.8"/><circle cx="13.3" cy="9.1" r="0.44" fill="#555" opacity="0.8"/><circle cx="30.9" cy="48.2" r="0.59" fill="#555" opacity="0.8"/><circle cx="31.8" cy="44.7" r="0.87" fill="#555" opacity="0.8"/><circle cx="38.2" cy="26.9" r="0.79" fill="#555" opacity="0.8"/><circle cx="29.0" cy="47.9" r="0.66" fill="#555" opacity="0.8"/><circle cx="31.2" cy="24.4" r="0.49" fill="#555" opacity="0.8"/><circle cx="14.7" cy="27.6" r="0.62" fill="#555" opacity="0.8"/><circle cx="7.0" cy="28.8" r="0.99" fill="#555" opacity="0.8"/><circle cx="42.7" cy="18.4" r="0.72" fill="#555" opacity="0.8"/><circle cx="24.0" cy="28.7" r="0.65" fill="#555" opacity="0.8"/><circle cx="36.6" cy="50.0" r="0.67" fill="#555" opacity="0.8"/><circle cx="10.5" cy="41.9" r="0.78" fill="#555" opacity="0.8"/></svg></div>
<div class="cell" style="left:302px;top:659px"><svg width="56" height="56"><circle cx="23.1" cy="25.2" r="0.47" fill="#333" opacity="0.8"/><circle cx="23.8" cy="34.6" r="0.46" fill="#333" opacity="0.8"/><circle cx="21.5" cy="39.4" r="0.67" fill="#333" opacity="0.8"/><circle cx="28.2" cy="36.6" r="0.31" fill="#333" opacity="0.8"/><circle cx="47.6" cy="21.6" r="0.48" fill="#333" opacity="0.8"/><circle cx="22.4" cy="54.4" r="0.50" fill="#333" opacity="0.8"/><circle cx="14.7" cy="38.5" r="0.44" fill="#333" opacity="0.8"/><circle cx="29.0" cy="31.0" r="0.73" fill="#333" opacity="0.8"/><circle cx="26.9" cy="8.5" r="0.49" fill="#333" opacity="0.8"/><circle cx="38.1" cy="36.0" r="0.80" fill="#333" opacity="0.8"/><circle cx="29.5" cy="34.0" r="0.78" fill="#333" opacity="0.8"/><circle cx="33.2" cy="23.8" r="0.64" fill="#333" opacity="0.8"/><circle cx="79.0" cy="25.3" r="0.72" fill="#333" opacity="0.8"/><circle cx="25.8" cy="22.3" r="0.80" fill="#333" opacity="0.8"/><circle cx="22.9" cy="26.6" r="0.43" fill="#333" opacity="0.8"/><circle cx="27.3" cy="15.6" r="0.43" fill="#333" opacity="0.8"/><circle cx="21.2" cy="42.5" r="0.74" fill="#333" opacity="0.8"/><circle cx="46.2" cy="32.1" r="0.44" fill="#333" opacity="0.8"/><circle cx="21.1" cy="27.4" r="0.54" fill="#333" opacity="0.8"/><circle cx="43.8" cy="16.5" r="0.70" fill="#333" opacity="0.8"/><circle cx="18.2" cy="22.6" r="0.51" fill="#333" opacity="0.8"/><circle cx="36.8" cy="28.7" r="0.31" fill="#333" opacity="0.8"/><circle cx="40.0" cy="40.0" r="0.34" fill="#333" opacity="0.8"/><circle cx="38.1" cy="41.9" r="0.32" fill="#333" opacity="0.8"/><circle cx="31.4" cy="28.7" r="0.57" fill="#333" opacity="0.8"/><circle cx="23.1" cy="33.0" r="0.59" fill="#333" opacity="0.8"/><circle cx="24.5" cy="-13.7" r="0.30" fill="#333" opacity="0.8"/><circle cx="18.7" cy="27.0" r="0.38" fill="#333" opacity="0.8"/><circle cx="31.8" cy="25.4" r="0.61" fill="#333" opacity="0.8"/><circle cx="22.4" cy="23.4" r="0.77" fill="#333" opacity="0.8"/><circle cx="44.6" cy="34.6" r="0.78" fill="#333" opacity="0.8"/><circle cx="37.0" cy="25.2" r="0.75" fill="#333" opacity="0.8"/><circle cx="31.6" cy="35.2" r="0.40" fill="#333" opacity="0.8"/><circle cx="20.2" cy="17.6" r="0.64" fill="#333" opacity="0.8"/><circle cx="11.4" cy="42.5" r="0.56" fill="#333" opacity="0.8"/><circle cx="27.4" cy="26.2" r="0.41" fill="#333" opacity="0.8"/><circle cx="26.5" cy="35.6" r="0.63" fill="#333" opacity="0.8"/><circle cx="22.8" cy="52.5" r="0.47" fill="#333" opacity="0.8"/><circle cx="43.0" cy="41.7" r="0.60" fill="#333" opacity="0.8"/><circle cx="46.6" cy="15.3" r="0.63" fill="#333" opacity="0.8"/><circle cx="36.3" cy="37.3" r="0.65" fill="#333" opacity="0.8"/><circle cx="20.8" cy="40.2" r="0.59" fill="#333" opacity="0.8"/><circle cx="37.6" cy="19.3" r="0.44" fill="#333" opacity="0.8"/><circle cx="2.6" cy="12.7" r="0.72" fill="#333" opacity="0.8"/><circle cx="40.2" cy="42.2" r="0.42" fill="#333" opacity="0.8"/><circle cx="35.5" cy="55.4" r="0.52" fill="#333" opacity="0.8"/><circle cx="25.1" cy="18.7" r="0.53" fill="#333" opacity="0.8"/><circle cx="3.9" cy="21.5" r="0.79" fill="#333" opacity="0.8"/><circle cx="-4.7" cy="36.9" r="0.52" fill="#333" opacity="0.8"/><circle cx="4.9" cy="20.4" r="0.64" fill="#333" opacity="0.8"/><circle cx="39.0" cy="32.5" r="0.71" fill="#333" opacity="0.8"/><circle cx="39.8" cy="10.9" r="0.49" fill="#333" opacity="0.8"/><circle cx="29.4" cy="23.6" r="0.76" fill="#333" opacity="0.8"/><circle cx="39.4" cy="39.1" r="0.52" fill="#333" opacity="0.8"/><circle cx="41.8" cy="18.3" r="0.59" fill="#333" opacity="0.8"/><circle cx="6.6" cy="38.1" r="0.80" fill="#333" opacity="0.8"/><circle cx="35.6" cy="11.7" r="0.50" fill="#333" opacity="0.8"/><circle cx="42.0" cy="13.7" r="0.52" fill="#333" opacity="0.8"/><circle cx="38.8" cy="29.9" r="0.71" fill="#333" opacity="0.8"/><circle cx="15.6" cy="33.7" r="0.67" fill="#333" opacity="0.8"/><circle cx="27.8" cy="39.4" r="0.32" fill="#333" opacity="0.8"/><circle cx="16.8" cy="19.1" r="0.67" fill="#333" opacity="0.8"/><circle cx="26.0" cy="10.7" r="0.65" fill="#333" opacity="0.8"/><circle cx="17.8" cy="16.9" r="0.43" fill="#333" opacity="0.8"/><circle cx="24.1" cy="33.9" r="0.73" fill="#333" opacity="0.8"/><circle cx="18.0" cy="30.8" r="0.78" fill="#333" opacity="0.8"/><circle cx="18.2" cy="37.6" r="0.43" fill="#333" opacity="0.8"/><circle cx="35.1" cy="24.1" r="0.78" fill="#333" opacity="0.8"/><circle cx="9.5" cy="41.9" r="0.68" fill="#333" opacity="0.8"/><circle cx="11.9" cy="20.2" r="0.80" fill="#333" opacity="0.8"/></svg></div>
<div class="cell" style="left:360px;top:659px"><svg width="56" height="56"><g fill="#111" filter="url(#b0_8)"><ellipse cx="20" cy="16" rx="7" ry="12" transform="rotate(-35 20 16)"/><ellipse cx="40" cy="22" rx="10" ry="7" transform="rotate(-15 40 22)"/><ellipse cx="14" cy="32" rx="11" ry="7"/><ellipse cx="28" cy="30" rx="7" ry="7"/><ellipse cx="36" cy="42" rx="7" ry="10" transform="rotate(-30 36 42)"/></g></svg></div>
<div class="cell" style="left:418px;top:659px"><svg width="56" height="56"><path d="M28 6 L52 50 L4 50 Z" fill="#000"/></svg></div>
<div class="cell" style="left:476px;top:659px"><svg width="56" height="56"><circle cx="28" cy="28" r="20" fill="#c6c6c6" stroke="#333" stroke-width="1"/></svg></div>
<div class="cell" style="left:534px;top:659px"><svg width="56" height="56"><ellipse cx="28" cy="18.0" rx="17" ry="1" fill="#222" filter="url(#b0_7)"/><ellipse cx="31" cy="21.8" rx="14" ry="1" fill="#222" filter="url(#b0_7)"/><ellipse cx="28" cy="25.6" rx="11" ry="1" fill="#222" filter="url(#b0_7)"/><ellipse cx="31" cy="29.4" rx="17" ry="1" fill="#222" filter="url(#b0_7)"/><ellipse cx="28" cy="33.2" rx="14" ry="1" fill="#222" filter="url(#b0_7)"/><ellipse cx="31" cy="37.0" rx="11" ry="1" fill="#222" filter="url(#b0_7)"/></svg></div>
<div class="cell" style="left:592px;top:659px"><svg width="56" height="56"><path d="M6 6 C20 0, 34 8, 40 18 C48 30, 52 40, 38 48 C30 54, 18 54, 14 46 C8 36, 2 20, 6 6 Z" fill="#777" opacity="0.8" filter="url(#b2)"/><ellipse cx="18" cy="16" rx="8" ry="9" fill="#333" filter="url(#b2)"/></svg></div>
<div class="t" style="left:815px;top:215px;font-size:22.5px;color:#d8d8d8;letter-spacing:0.2px">Spatter46</div>
<div class="t" style="left:815px;top:249px;font-size:16.5px;color:#d4d4d4;letter-spacing:0.3px">Mask (46 x 44)</div>
<div class="t" style="left:818px;top:297px;font-size:16.5px;color:#d4d4d4;letter-spacing:0.3px">Size:</div>
<div class="a" style="left:888px;top:290px;width:40px;height:30px;background:#54738f;border:1px solid #3f5670;border-radius:2px"></div>
<div class="t" style="left:819px;top:342px;font-size:16.5px;color:#d4d4d4;letter-spacing:0.3px">Rotation:</div>
<svg class="a" style="left:889px;top:335px" width="40" height="30"><circle cx="15" cy="15" r="14" fill="#2e2e2e" stroke="#555" stroke-width="1"/><path d="M15 2 L15 28 M2 15 L28 15" stroke="#555" stroke-width="1" stroke-dasharray="2 2"/><path d="M15 15 L40 15" stroke="#e8e8e8" stroke-width="1.5"/><circle cx="15" cy="15" r="2" fill="#eee"/></svg>
<div class="t" style="left:819px;top:386.5px;font-size:16.5px;color:#d4d4d4;letter-spacing:0.3px">Spacing:</div>
<div class="a" style="left:888px;top:385px;width:18px;height:18px;background:#383838"></div>
<div class="t" style="left:913px;top:386px;font-size:16.5px;color:#d4d4d4;"><u>A</u></div>
<div class="t" style="left:819px;top:428.5px;font-size:16.5px;color:#d4d4d4;letter-spacing:0.3px">Brush mode</div>
<div class="a" style="left:819px;top:451px;width:110px;height:227px;border:1px solid #545454;border-right:none"></div>
<div class="a" style="left:834px;top:466px;width:90px;height:30px;background:#424242;border:1px solid #393939;border-radius:3px"></div>
<div class="t" style="left:839px;top:473px;font-size:16.5px;color:#8a8a8a;letter-spacing:0.3px">Alpha Mask</div>
<div class="a" style="left:868px;top:512px;width:18px;height:18px;background:#383838"></div>
<svg class="a" style="left:868px;top:512px" width="18" height="18"><path d="M4 9 L8 14.5 L14 3.5" fill="none" stroke="#8f8f8f" stroke-width="1.6"/></svg>
<div class="t" style="left:894px;top:514px;font-size:16.5px;color:#8a8a8a;letter-spacing:0.3px">A<u>u</u>to</div>
<div class="a" style="left:868px;top:548px;width:60px;height:32px;background:#464646;border:1px solid #3b3b3b;border-radius:3px"></div>
<div class="a" style="left:868px;top:590px;width:60px;height:32px;background:#464646;border:1px solid #3b3b3b;border-radius:3px"></div>
<div class="a" style="left:868px;top:632px;width:60px;height:32px;background:#464646;border:1px solid #3b3b3b;border-radius:3px"></div>
<div class="a" style="left:818px;top:697px;width:18px;height:18px;background:#383838"></div>
<svg class="a" style="left:818px;top:697px" width="18" height="18"><path d="M4 9 L8 14.5 L14 3.5" fill="none" stroke="#d0d0d0" stroke-width="1.6"/></svg>
<div class="t" style="left:844px;top:699px;font-size:16.5px;color:#d4d4d4;letter-spacing:0.3px"><u>P</u>reserve B</div>
<div class="a" style="left:889px;top:733px;width:40px;height:33px;background:#464646;border:1px solid #3b3b3b;border-radius:3px"></div>
<div class="a" style="left:301px;top:720px;width:376px;height:30px;background:#3c3c3c;border-radius:2px"></div>
<div class="t" style="left:304px;top:726px;font-size:16.5px;color:#888888;letter-spacing:0.3px">Search</div>
<div class="a" style="left:686px;top:725px;width:18px;height:18px;background:#383838"></div>
<svg class="a" style="left:686px;top:725px" width="18" height="18"><path d="M4 9 L8 14.5 L14 3.5" fill="none" stroke="#d0d0d0" stroke-width="1.6"/></svg>
<div class="t" style="left:711px;top:725.5px;font-size:16.5px;color:#d4d4d4;letter-spacing:0.35px"><u>F</u>ilter in Tag</div>
<div class="a" style="left:301px;top:757px;width:40px;height:31px;background:#464646;border:1px solid #3b3b3b;border-radius:3px"></div>
<div class="a" style="left:288px;top:816px;width:18px;height:18px;background:#383838"></div>
<div class="t" style="left:313px;top:818px;font-size:16.5px;color:#d4d4d4;letter-spacing:0.5px">Auto</div>
<div class="t" style="left:366px;top:818px;font-size:16.5px;color:#d4d4d4;letter-spacing:0.2px">Precision:</div>
<div class="a" style="left:360px;top:836px;width:79px;height:3px;background:#c81e1e;border-radius:1px"></div>
<div class="a" style="left:448px;top:812px;width:480px;height:29px;background:#54738f;border:1px solid #3f5670;border-radius:2px"></div>
<div class="t" style="left:876px;top:818px;font-size:16.5px;color:#e0e0e0;">5</div>
<div class="a" style="left:237px;top:484px;width:328px;height:37.5px;background:#383838"></div>
<div class="t" style="left:246px;top:491px;font-size:20px;color:#8fcfb0;letter-spacing:0.85px">&eacute;chantillonner tous les calques</div>
<div class="a" style="left:322px;top:753px;width:508px;height:47px;background:#383838"></div>
<div class="t" style="left:352px;top:768px;font-size:20px;color:#8fcfb0;letter-spacing:0.72px">Baisser la pr&eacute;cision en cas de ralentissements</div>
<div class="a" style="left:120px;top:501px;width:117px;height:3.5px;background:#d42018;border-radius:1px"></div></body></html>
